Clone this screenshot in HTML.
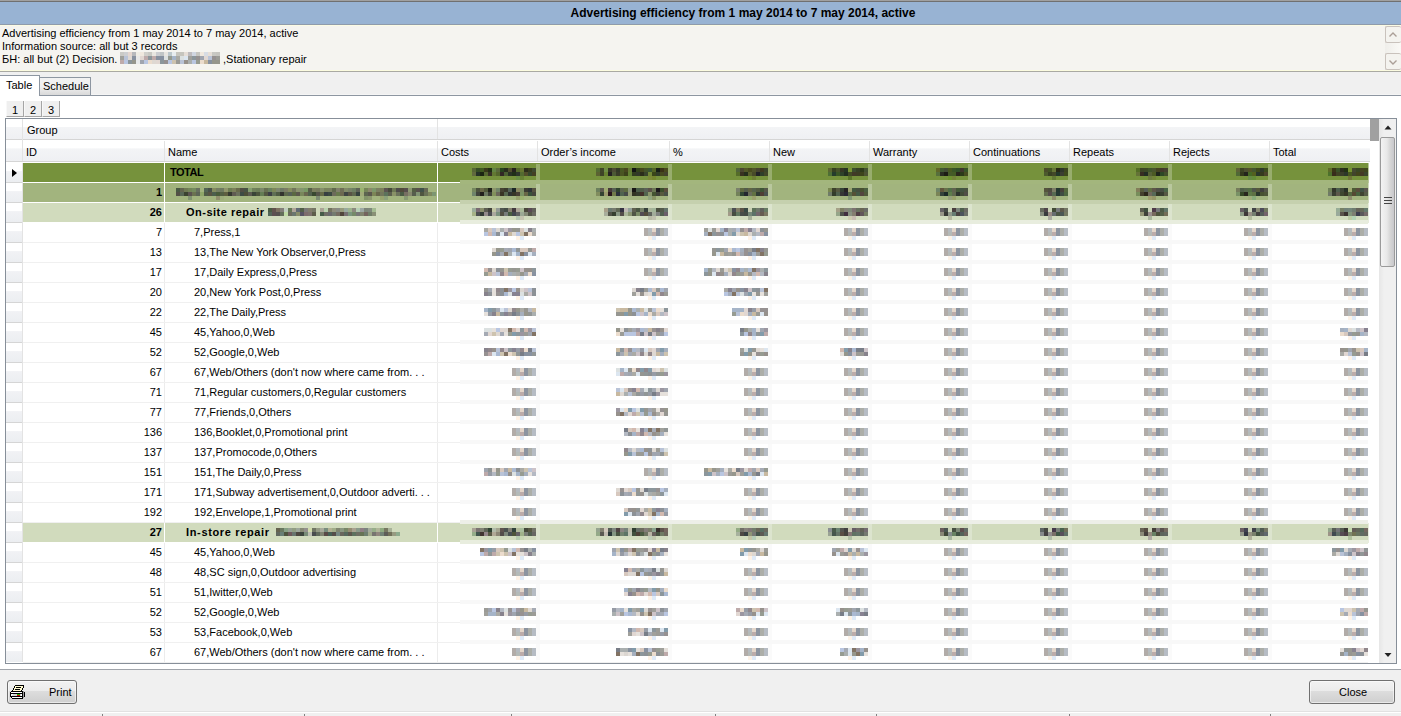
<!DOCTYPE html><html><head><meta charset="utf-8"><style>
*{margin:0;padding:0;box-sizing:border-box}
html,body{width:1401px;height:716px;overflow:hidden;background:#f0f0f0;font-family:"Liberation Sans", sans-serif;font-size:11px;color:#000}
.ab{position:absolute}
.t{position:absolute;white-space:nowrap;line-height:13px}
.b{font-weight:bold}
</style></head><body>
<div class="ab" style="left:0px;top:0px;width:1401px;height:1px;background:#a0a0a0"></div>
<div class="ab" style="left:0px;top:1px;width:1401px;height:1px;background:#707070"></div>
<div class="ab" style="left:0px;top:2px;width:1401px;height:22px;background:#98b3d3"></div>
<div class="ab" style="left:0px;top:24px;width:1401px;height:1px;background:#8f9bab"></div>
<div class="t b" style="left:0;top:6px;width:1401px;text-align:center;font-size:12px;line-height:15px;padding-left:85px">Advertising efficiency from 1 may 2014 to 7 may 2014, active</div>
<div class="ab" style="left:0px;top:25px;width:1401px;height:1px;background:#fbfbe4"></div>
<div class="ab" style="left:0px;top:26px;width:1401px;height:44px;background:#f5f4f0"></div>
<div class="ab" style="left:0px;top:70px;width:1401px;height:1px;background:#fbfbe0"></div>
<div class="ab" style="left:0px;top:71px;width:1401px;height:1px;background:#a9a9a2"></div>
<div class="t" style="left:2px;top:27px;">Advertising efficiency from 1 may 2014 to 7 may 2014, active</div>
<div class="t" style="left:2px;top:40px;">Information source: all but 3 records</div>
<div class="t" style="left:2px;top:53px;">БН: all but (2) Decision. </div>
<div class="t" style="left:223px;top:53px;">,Stationary repair</div>
<div class="ab" style="left:1385px;top:26px;width:16px;height:17px;background:#f4f3ef;border:1px solid #c9c2bc;border-radius:2px;border-right:none"></div>
<div class="ab" style="left:1385px;top:53px;width:16px;height:17px;background:#f4f3ef;border:1px solid #c9c2bc;border-radius:2px;border-right:none"></div>
<div class="ab" style="left:1385px;top:43px;width:16px;height:10px;background:linear-gradient(90deg,#efeeea,#faf9f6)"></div>
<svg class="ab" style="left:1385px;top:26px" width="16" height="44"><path d="M4.5 10.5 L8 7 L11.5 10.5" stroke="#ab9f97" stroke-width="1.4" fill="none"/><path d="M4.5 34.5 L8 38 L11.5 34.5" stroke="#ab9f97" stroke-width="1.4" fill="none"/></svg>
<div class="ab" style="left:0px;top:94px;width:1401px;height:1px;background:#f5f5f5"></div>
<div class="ab" style="left:0px;top:95px;width:1401px;height:1px;background:#8d96a1"></div>
<div class="ab" style="left:39px;top:77px;width:52px;height:18px;background:linear-gradient(#f2f2f2,#f0f0f0 50%,#d9d9d9);border:1px solid #8d96a1;border-bottom:none"></div>
<div class="t" style="left:43px;top:80px;">Schedule</div>
<div class="ab" style="left:0px;top:75px;width:40px;height:21px;background:#fff;border:1px solid #8d96a1;border-left:none;border-bottom:none"></div>
<div class="t" style="left:6px;top:79px;">Table</div>
<div class="ab" style="left:0px;top:96px;width:1401px;height:573px;background:#fff"></div>
<div class="ab" style="left:0px;top:669px;width:1401px;height:1px;background:#a0a4aa"></div>
<div class="ab" style="left:6px;top:101px;width:18px;height:16px;background:#efefef;border-right:1px solid #a5a5a5;border-bottom:1px solid #a5a5a5;border-left:1px solid #f8f8f8"></div>
<div class="t" style="left:12px;top:104px;">1</div>
<div class="ab" style="left:24px;top:101px;width:18px;height:16px;background:#efefef;border-right:1px solid #a5a5a5;border-bottom:1px solid #a5a5a5;border-left:1px solid #f8f8f8"></div>
<div class="t" style="left:30px;top:104px;">2</div>
<div class="ab" style="left:42px;top:101px;width:18px;height:16px;background:#efefef;border-right:1px solid #a5a5a5;border-bottom:1px solid #a5a5a5;border-left:1px solid #f8f8f8"></div>
<div class="t" style="left:48px;top:104px;">3</div>
<div class="ab" style="left:5px;top:118px;width:1392px;height:546px;border:1px solid #878f99;background:#fff"></div>
<div class="ab" style="left:6px;top:119px;width:1364px;height:20px;background:linear-gradient(#ffffff 0,#ffffff 38%,#f3f4f6 42%,#eff0f3 100%)"></div>
<div class="ab" style="left:6px;top:139px;width:1364px;height:1px;background:#d5d5d5"></div>
<div class="ab" style="left:6px;top:140px;width:1364px;height:21px;background:linear-gradient(#ffffff 0,#ffffff 38%,#f3f4f6 42%,#eff0f3 100%)"></div>
<div class="ab" style="left:6px;top:161px;width:1364px;height:1px;background:#d5d5d5"></div>
<div class="ab" style="left:22px;top:119px;width:1px;height:42px;background:#e3e3e3"></div>
<div class="ab" style="left:437px;top:119px;width:1px;height:20px;background:#e3e3e3"></div>
<div class="ab" style="left:164px;top:141px;width:1px;height:20px;background:#e3e3e3"></div>
<div class="ab" style="left:437px;top:141px;width:1px;height:20px;background:#e3e3e3"></div>
<div class="ab" style="left:537px;top:141px;width:1px;height:20px;background:#e3e3e3"></div>
<div class="ab" style="left:669px;top:141px;width:1px;height:20px;background:#e3e3e3"></div>
<div class="ab" style="left:769px;top:141px;width:1px;height:20px;background:#e3e3e3"></div>
<div class="ab" style="left:869px;top:141px;width:1px;height:20px;background:#e3e3e3"></div>
<div class="ab" style="left:969px;top:141px;width:1px;height:20px;background:#e3e3e3"></div>
<div class="ab" style="left:1069px;top:141px;width:1px;height:20px;background:#e3e3e3"></div>
<div class="ab" style="left:1169px;top:141px;width:1px;height:20px;background:#e3e3e3"></div>
<div class="ab" style="left:1269px;top:141px;width:1px;height:20px;background:#e3e3e3"></div>
<div class="t" style="left:27px;top:124px;">Group</div>
<div class="t" style="left:26px;top:146px;">ID</div>
<div class="t" style="left:168px;top:146px;">Name</div>
<div class="t" style="left:441px;top:146px;">Costs</div>
<div class="t" style="left:541px;top:146px;">Order’s income</div>
<div class="t" style="left:673px;top:146px;">%</div>
<div class="t" style="left:773px;top:146px;">New</div>
<div class="t" style="left:873px;top:146px;">Warranty</div>
<div class="t" style="left:973px;top:146px;">Continuations</div>
<div class="t" style="left:1073px;top:146px;">Repeats</div>
<div class="t" style="left:1173px;top:146px;">Rejects</div>
<div class="t" style="left:1273px;top:146px;">Total</div>
<div class="ab" style="left:1370px;top:119px;width:9px;height:22px;background:#a0a0a0"></div>
<div class="ab" style="left:6px;top:163px;width:16px;height:19px;background:linear-gradient(#ffffff 0,#ffffff 40%,#f1f2f5 45%,#eceef1 100%)"></div>
<div class="ab" style="left:23px;top:163px;width:1346px;height:19px;background:#76923c"></div>
<div class="ab" style="left:1368px;top:163px;width:1px;height:20px;background:#bac89e"></div>
<div class="ab" style="left:23px;top:182px;width:437px;height:1px;background:#ffffff"></div>
<div class="ab" style="left:164px;top:163px;width:1px;height:19px;background:#ffffff"></div>
<div class="ab" style="left:437px;top:163px;width:1px;height:19px;background:#ffffff"></div>
<div class="t" style="left:170px;top:166px;font-weight:bold;letter-spacing:-0.5px;">TOTAL</div>
<div class="ab" style="left:6px;top:182px;width:16px;height:1px;background:#d5d5d5"></div>
<div class="ab" style="left:6px;top:183px;width:16px;height:19px;background:linear-gradient(#ffffff 0,#ffffff 40%,#f1f2f5 45%,#eceef1 100%)"></div>
<div class="ab" style="left:23px;top:183px;width:1346px;height:19px;background:#a2b47e"></div>
<div class="ab" style="left:1368px;top:183px;width:1px;height:20px;background:#d0dabe"></div>
<div class="ab" style="left:23px;top:202px;width:437px;height:1px;background:#ffffff"></div>
<div class="ab" style="left:164px;top:183px;width:1px;height:19px;background:#ffffff"></div>
<div class="ab" style="left:437px;top:183px;width:1px;height:19px;background:#ffffff"></div>
<div class="t" style="right:1239px;top:186px;text-align:right;font-weight:bold;">1</div>
<div class="ab" style="left:6px;top:202px;width:16px;height:1px;background:#d5d5d5"></div>
<div class="ab" style="left:6px;top:203px;width:16px;height:19px;background:linear-gradient(#ffffff 0,#ffffff 40%,#f1f2f5 45%,#eceef1 100%)"></div>
<div class="ab" style="left:23px;top:203px;width:1346px;height:19px;background:#d1dbbd"></div>
<div class="ab" style="left:1368px;top:203px;width:1px;height:20px;background:#e8edde"></div>
<div class="ab" style="left:23px;top:222px;width:437px;height:1px;background:#ffffff"></div>
<div class="ab" style="left:164px;top:203px;width:1px;height:19px;background:#ffffff"></div>
<div class="ab" style="left:437px;top:203px;width:1px;height:19px;background:#ffffff"></div>
<div class="t" style="right:1239px;top:206px;text-align:right;font-weight:bold;">26</div>
<div class="t" style="left:186px;top:206px;font-weight:bold;letter-spacing:0.5px;">On-site repair</div>
<div class="ab" style="left:6px;top:222px;width:16px;height:1px;background:#d5d5d5"></div>
<div class="ab" style="left:6px;top:223px;width:16px;height:19px;background:linear-gradient(#ffffff 0,#ffffff 40%,#f1f2f5 45%,#eceef1 100%)"></div>
<div class="ab" style="left:23px;top:223px;width:1346px;height:19px;background:#ffffff"></div>
<div class="ab" style="left:1368px;top:223px;width:1px;height:20px;background:#ffffff"></div>
<div class="ab" style="left:23px;top:242px;width:437px;height:1px;background:#f0f0f0"></div>
<div class="ab" style="left:164px;top:223px;width:1px;height:19px;background:#ececec"></div>
<div class="ab" style="left:437px;top:223px;width:1px;height:19px;background:#ececec"></div>
<div class="t" style="right:1239px;top:226px;text-align:right;">7</div>
<div class="t" style="left:194px;top:226px;">7,Press,1</div>
<div class="ab" style="left:6px;top:242px;width:16px;height:1px;background:#d5d5d5"></div>
<div class="ab" style="left:6px;top:243px;width:16px;height:19px;background:linear-gradient(#ffffff 0,#ffffff 40%,#f1f2f5 45%,#eceef1 100%)"></div>
<div class="ab" style="left:23px;top:243px;width:1346px;height:19px;background:#ffffff"></div>
<div class="ab" style="left:1368px;top:243px;width:1px;height:20px;background:#ffffff"></div>
<div class="ab" style="left:23px;top:262px;width:437px;height:1px;background:#f0f0f0"></div>
<div class="ab" style="left:164px;top:243px;width:1px;height:19px;background:#ececec"></div>
<div class="ab" style="left:437px;top:243px;width:1px;height:19px;background:#ececec"></div>
<div class="t" style="right:1239px;top:246px;text-align:right;">13</div>
<div class="t" style="left:194px;top:246px;">13,The New York Observer,0,Press</div>
<div class="ab" style="left:6px;top:262px;width:16px;height:1px;background:#d5d5d5"></div>
<div class="ab" style="left:6px;top:263px;width:16px;height:19px;background:linear-gradient(#ffffff 0,#ffffff 40%,#f1f2f5 45%,#eceef1 100%)"></div>
<div class="ab" style="left:23px;top:263px;width:1346px;height:19px;background:#ffffff"></div>
<div class="ab" style="left:1368px;top:263px;width:1px;height:20px;background:#ffffff"></div>
<div class="ab" style="left:23px;top:282px;width:437px;height:1px;background:#f0f0f0"></div>
<div class="ab" style="left:164px;top:263px;width:1px;height:19px;background:#ececec"></div>
<div class="ab" style="left:437px;top:263px;width:1px;height:19px;background:#ececec"></div>
<div class="t" style="right:1239px;top:266px;text-align:right;">17</div>
<div class="t" style="left:194px;top:266px;">17,Daily Express,0,Press</div>
<div class="ab" style="left:6px;top:282px;width:16px;height:1px;background:#d5d5d5"></div>
<div class="ab" style="left:6px;top:283px;width:16px;height:19px;background:linear-gradient(#ffffff 0,#ffffff 40%,#f1f2f5 45%,#eceef1 100%)"></div>
<div class="ab" style="left:23px;top:283px;width:1346px;height:19px;background:#ffffff"></div>
<div class="ab" style="left:1368px;top:283px;width:1px;height:20px;background:#ffffff"></div>
<div class="ab" style="left:23px;top:302px;width:437px;height:1px;background:#f0f0f0"></div>
<div class="ab" style="left:164px;top:283px;width:1px;height:19px;background:#ececec"></div>
<div class="ab" style="left:437px;top:283px;width:1px;height:19px;background:#ececec"></div>
<div class="t" style="right:1239px;top:286px;text-align:right;">20</div>
<div class="t" style="left:194px;top:286px;">20,New York Post,0,Press</div>
<div class="ab" style="left:6px;top:302px;width:16px;height:1px;background:#d5d5d5"></div>
<div class="ab" style="left:6px;top:303px;width:16px;height:19px;background:linear-gradient(#ffffff 0,#ffffff 40%,#f1f2f5 45%,#eceef1 100%)"></div>
<div class="ab" style="left:23px;top:303px;width:1346px;height:19px;background:#ffffff"></div>
<div class="ab" style="left:1368px;top:303px;width:1px;height:20px;background:#ffffff"></div>
<div class="ab" style="left:23px;top:322px;width:437px;height:1px;background:#f0f0f0"></div>
<div class="ab" style="left:164px;top:303px;width:1px;height:19px;background:#ececec"></div>
<div class="ab" style="left:437px;top:303px;width:1px;height:19px;background:#ececec"></div>
<div class="t" style="right:1239px;top:306px;text-align:right;">22</div>
<div class="t" style="left:194px;top:306px;">22,The Daily,Press</div>
<div class="ab" style="left:6px;top:322px;width:16px;height:1px;background:#d5d5d5"></div>
<div class="ab" style="left:6px;top:323px;width:16px;height:19px;background:linear-gradient(#ffffff 0,#ffffff 40%,#f1f2f5 45%,#eceef1 100%)"></div>
<div class="ab" style="left:23px;top:323px;width:1346px;height:19px;background:#ffffff"></div>
<div class="ab" style="left:1368px;top:323px;width:1px;height:20px;background:#ffffff"></div>
<div class="ab" style="left:23px;top:342px;width:437px;height:1px;background:#f0f0f0"></div>
<div class="ab" style="left:164px;top:323px;width:1px;height:19px;background:#ececec"></div>
<div class="ab" style="left:437px;top:323px;width:1px;height:19px;background:#ececec"></div>
<div class="t" style="right:1239px;top:326px;text-align:right;">45</div>
<div class="t" style="left:194px;top:326px;">45,Yahoo,0,Web</div>
<div class="ab" style="left:6px;top:342px;width:16px;height:1px;background:#d5d5d5"></div>
<div class="ab" style="left:6px;top:343px;width:16px;height:19px;background:linear-gradient(#ffffff 0,#ffffff 40%,#f1f2f5 45%,#eceef1 100%)"></div>
<div class="ab" style="left:23px;top:343px;width:1346px;height:19px;background:#ffffff"></div>
<div class="ab" style="left:1368px;top:343px;width:1px;height:20px;background:#ffffff"></div>
<div class="ab" style="left:23px;top:362px;width:437px;height:1px;background:#f0f0f0"></div>
<div class="ab" style="left:164px;top:343px;width:1px;height:19px;background:#ececec"></div>
<div class="ab" style="left:437px;top:343px;width:1px;height:19px;background:#ececec"></div>
<div class="t" style="right:1239px;top:346px;text-align:right;">52</div>
<div class="t" style="left:194px;top:346px;">52,Google,0,Web</div>
<div class="ab" style="left:6px;top:362px;width:16px;height:1px;background:#d5d5d5"></div>
<div class="ab" style="left:6px;top:363px;width:16px;height:19px;background:linear-gradient(#ffffff 0,#ffffff 40%,#f1f2f5 45%,#eceef1 100%)"></div>
<div class="ab" style="left:23px;top:363px;width:1346px;height:19px;background:#ffffff"></div>
<div class="ab" style="left:1368px;top:363px;width:1px;height:20px;background:#ffffff"></div>
<div class="ab" style="left:23px;top:382px;width:437px;height:1px;background:#f0f0f0"></div>
<div class="ab" style="left:164px;top:363px;width:1px;height:19px;background:#ececec"></div>
<div class="ab" style="left:437px;top:363px;width:1px;height:19px;background:#ececec"></div>
<div class="t" style="right:1239px;top:366px;text-align:right;">67</div>
<div class="t" style="left:194px;top:366px;">67,Web/Others (don't now where came from<span style="letter-spacing:3px">...</span></div>
<div class="ab" style="left:6px;top:382px;width:16px;height:1px;background:#d5d5d5"></div>
<div class="ab" style="left:6px;top:383px;width:16px;height:19px;background:linear-gradient(#ffffff 0,#ffffff 40%,#f1f2f5 45%,#eceef1 100%)"></div>
<div class="ab" style="left:23px;top:383px;width:1346px;height:19px;background:#ffffff"></div>
<div class="ab" style="left:1368px;top:383px;width:1px;height:20px;background:#ffffff"></div>
<div class="ab" style="left:23px;top:402px;width:437px;height:1px;background:#f0f0f0"></div>
<div class="ab" style="left:164px;top:383px;width:1px;height:19px;background:#ececec"></div>
<div class="ab" style="left:437px;top:383px;width:1px;height:19px;background:#ececec"></div>
<div class="t" style="right:1239px;top:386px;text-align:right;">71</div>
<div class="t" style="left:194px;top:386px;">71,Regular customers,0,Regular customers</div>
<div class="ab" style="left:6px;top:402px;width:16px;height:1px;background:#d5d5d5"></div>
<div class="ab" style="left:6px;top:403px;width:16px;height:19px;background:linear-gradient(#ffffff 0,#ffffff 40%,#f1f2f5 45%,#eceef1 100%)"></div>
<div class="ab" style="left:23px;top:403px;width:1346px;height:19px;background:#ffffff"></div>
<div class="ab" style="left:1368px;top:403px;width:1px;height:20px;background:#ffffff"></div>
<div class="ab" style="left:23px;top:422px;width:437px;height:1px;background:#f0f0f0"></div>
<div class="ab" style="left:164px;top:403px;width:1px;height:19px;background:#ececec"></div>
<div class="ab" style="left:437px;top:403px;width:1px;height:19px;background:#ececec"></div>
<div class="t" style="right:1239px;top:406px;text-align:right;">77</div>
<div class="t" style="left:194px;top:406px;">77,Friends,0,Others</div>
<div class="ab" style="left:6px;top:422px;width:16px;height:1px;background:#d5d5d5"></div>
<div class="ab" style="left:6px;top:423px;width:16px;height:19px;background:linear-gradient(#ffffff 0,#ffffff 40%,#f1f2f5 45%,#eceef1 100%)"></div>
<div class="ab" style="left:23px;top:423px;width:1346px;height:19px;background:#ffffff"></div>
<div class="ab" style="left:1368px;top:423px;width:1px;height:20px;background:#ffffff"></div>
<div class="ab" style="left:23px;top:442px;width:437px;height:1px;background:#f0f0f0"></div>
<div class="ab" style="left:164px;top:423px;width:1px;height:19px;background:#ececec"></div>
<div class="ab" style="left:437px;top:423px;width:1px;height:19px;background:#ececec"></div>
<div class="t" style="right:1239px;top:426px;text-align:right;">136</div>
<div class="t" style="left:194px;top:426px;">136,Booklet,0,Promotional print</div>
<div class="ab" style="left:6px;top:442px;width:16px;height:1px;background:#d5d5d5"></div>
<div class="ab" style="left:6px;top:443px;width:16px;height:19px;background:linear-gradient(#ffffff 0,#ffffff 40%,#f1f2f5 45%,#eceef1 100%)"></div>
<div class="ab" style="left:23px;top:443px;width:1346px;height:19px;background:#ffffff"></div>
<div class="ab" style="left:1368px;top:443px;width:1px;height:20px;background:#ffffff"></div>
<div class="ab" style="left:23px;top:462px;width:437px;height:1px;background:#f0f0f0"></div>
<div class="ab" style="left:164px;top:443px;width:1px;height:19px;background:#ececec"></div>
<div class="ab" style="left:437px;top:443px;width:1px;height:19px;background:#ececec"></div>
<div class="t" style="right:1239px;top:446px;text-align:right;">137</div>
<div class="t" style="left:194px;top:446px;">137,Promocode,0,Others</div>
<div class="ab" style="left:6px;top:462px;width:16px;height:1px;background:#d5d5d5"></div>
<div class="ab" style="left:6px;top:463px;width:16px;height:19px;background:linear-gradient(#ffffff 0,#ffffff 40%,#f1f2f5 45%,#eceef1 100%)"></div>
<div class="ab" style="left:23px;top:463px;width:1346px;height:19px;background:#ffffff"></div>
<div class="ab" style="left:1368px;top:463px;width:1px;height:20px;background:#ffffff"></div>
<div class="ab" style="left:23px;top:482px;width:437px;height:1px;background:#f0f0f0"></div>
<div class="ab" style="left:164px;top:463px;width:1px;height:19px;background:#ececec"></div>
<div class="ab" style="left:437px;top:463px;width:1px;height:19px;background:#ececec"></div>
<div class="t" style="right:1239px;top:466px;text-align:right;">151</div>
<div class="t" style="left:194px;top:466px;">151,The Daily,0,Press</div>
<div class="ab" style="left:6px;top:482px;width:16px;height:1px;background:#d5d5d5"></div>
<div class="ab" style="left:6px;top:483px;width:16px;height:19px;background:linear-gradient(#ffffff 0,#ffffff 40%,#f1f2f5 45%,#eceef1 100%)"></div>
<div class="ab" style="left:23px;top:483px;width:1346px;height:19px;background:#ffffff"></div>
<div class="ab" style="left:1368px;top:483px;width:1px;height:20px;background:#ffffff"></div>
<div class="ab" style="left:23px;top:502px;width:437px;height:1px;background:#f0f0f0"></div>
<div class="ab" style="left:164px;top:483px;width:1px;height:19px;background:#ececec"></div>
<div class="ab" style="left:437px;top:483px;width:1px;height:19px;background:#ececec"></div>
<div class="t" style="right:1239px;top:486px;text-align:right;">171</div>
<div class="t" style="left:194px;top:486px;">171,Subway advertisement,0,Outdoor adverti<span style="letter-spacing:3px">...</span></div>
<div class="ab" style="left:6px;top:502px;width:16px;height:1px;background:#d5d5d5"></div>
<div class="ab" style="left:6px;top:503px;width:16px;height:19px;background:linear-gradient(#ffffff 0,#ffffff 40%,#f1f2f5 45%,#eceef1 100%)"></div>
<div class="ab" style="left:23px;top:503px;width:1346px;height:19px;background:#ffffff"></div>
<div class="ab" style="left:1368px;top:503px;width:1px;height:20px;background:#ffffff"></div>
<div class="ab" style="left:23px;top:522px;width:437px;height:1px;background:#f0f0f0"></div>
<div class="ab" style="left:164px;top:503px;width:1px;height:19px;background:#ececec"></div>
<div class="ab" style="left:437px;top:503px;width:1px;height:19px;background:#ececec"></div>
<div class="t" style="right:1239px;top:506px;text-align:right;">192</div>
<div class="t" style="left:194px;top:506px;">192,Envelope,1,Promotional print</div>
<div class="ab" style="left:6px;top:522px;width:16px;height:1px;background:#d5d5d5"></div>
<div class="ab" style="left:6px;top:523px;width:16px;height:19px;background:linear-gradient(#ffffff 0,#ffffff 40%,#f1f2f5 45%,#eceef1 100%)"></div>
<div class="ab" style="left:23px;top:523px;width:1346px;height:19px;background:#d1dbbd"></div>
<div class="ab" style="left:1368px;top:523px;width:1px;height:20px;background:#e8edde"></div>
<div class="ab" style="left:23px;top:542px;width:437px;height:1px;background:#ffffff"></div>
<div class="ab" style="left:164px;top:523px;width:1px;height:19px;background:#ffffff"></div>
<div class="ab" style="left:437px;top:523px;width:1px;height:19px;background:#ffffff"></div>
<div class="t" style="right:1239px;top:526px;text-align:right;font-weight:bold;">27</div>
<div class="t" style="left:186px;top:526px;font-weight:bold;letter-spacing:0.65px;">In-store repair</div>
<div class="ab" style="left:6px;top:542px;width:16px;height:1px;background:#d5d5d5"></div>
<div class="ab" style="left:6px;top:543px;width:16px;height:19px;background:linear-gradient(#ffffff 0,#ffffff 40%,#f1f2f5 45%,#eceef1 100%)"></div>
<div class="ab" style="left:23px;top:543px;width:1346px;height:19px;background:#ffffff"></div>
<div class="ab" style="left:1368px;top:543px;width:1px;height:20px;background:#ffffff"></div>
<div class="ab" style="left:23px;top:562px;width:437px;height:1px;background:#f0f0f0"></div>
<div class="ab" style="left:164px;top:543px;width:1px;height:19px;background:#ececec"></div>
<div class="ab" style="left:437px;top:543px;width:1px;height:19px;background:#ececec"></div>
<div class="t" style="right:1239px;top:546px;text-align:right;">45</div>
<div class="t" style="left:194px;top:546px;">45,Yahoo,0,Web</div>
<div class="ab" style="left:6px;top:562px;width:16px;height:1px;background:#d5d5d5"></div>
<div class="ab" style="left:6px;top:563px;width:16px;height:19px;background:linear-gradient(#ffffff 0,#ffffff 40%,#f1f2f5 45%,#eceef1 100%)"></div>
<div class="ab" style="left:23px;top:563px;width:1346px;height:19px;background:#ffffff"></div>
<div class="ab" style="left:1368px;top:563px;width:1px;height:20px;background:#ffffff"></div>
<div class="ab" style="left:23px;top:582px;width:437px;height:1px;background:#f0f0f0"></div>
<div class="ab" style="left:164px;top:563px;width:1px;height:19px;background:#ececec"></div>
<div class="ab" style="left:437px;top:563px;width:1px;height:19px;background:#ececec"></div>
<div class="t" style="right:1239px;top:566px;text-align:right;">48</div>
<div class="t" style="left:194px;top:566px;">48,SC sign,0,Outdoor advertising</div>
<div class="ab" style="left:6px;top:582px;width:16px;height:1px;background:#d5d5d5"></div>
<div class="ab" style="left:6px;top:583px;width:16px;height:19px;background:linear-gradient(#ffffff 0,#ffffff 40%,#f1f2f5 45%,#eceef1 100%)"></div>
<div class="ab" style="left:23px;top:583px;width:1346px;height:19px;background:#ffffff"></div>
<div class="ab" style="left:1368px;top:583px;width:1px;height:20px;background:#ffffff"></div>
<div class="ab" style="left:23px;top:602px;width:437px;height:1px;background:#f0f0f0"></div>
<div class="ab" style="left:164px;top:583px;width:1px;height:19px;background:#ececec"></div>
<div class="ab" style="left:437px;top:583px;width:1px;height:19px;background:#ececec"></div>
<div class="t" style="right:1239px;top:586px;text-align:right;">51</div>
<div class="t" style="left:194px;top:586px;">51,Iwitter,0,Web</div>
<div class="ab" style="left:6px;top:602px;width:16px;height:1px;background:#d5d5d5"></div>
<div class="ab" style="left:6px;top:603px;width:16px;height:19px;background:linear-gradient(#ffffff 0,#ffffff 40%,#f1f2f5 45%,#eceef1 100%)"></div>
<div class="ab" style="left:23px;top:603px;width:1346px;height:19px;background:#ffffff"></div>
<div class="ab" style="left:1368px;top:603px;width:1px;height:20px;background:#ffffff"></div>
<div class="ab" style="left:23px;top:622px;width:437px;height:1px;background:#f0f0f0"></div>
<div class="ab" style="left:164px;top:603px;width:1px;height:19px;background:#ececec"></div>
<div class="ab" style="left:437px;top:603px;width:1px;height:19px;background:#ececec"></div>
<div class="t" style="right:1239px;top:606px;text-align:right;">52</div>
<div class="t" style="left:194px;top:606px;">52,Google,0,Web</div>
<div class="ab" style="left:6px;top:622px;width:16px;height:1px;background:#d5d5d5"></div>
<div class="ab" style="left:6px;top:623px;width:16px;height:19px;background:linear-gradient(#ffffff 0,#ffffff 40%,#f1f2f5 45%,#eceef1 100%)"></div>
<div class="ab" style="left:23px;top:623px;width:1346px;height:19px;background:#ffffff"></div>
<div class="ab" style="left:1368px;top:623px;width:1px;height:20px;background:#ffffff"></div>
<div class="ab" style="left:23px;top:642px;width:437px;height:1px;background:#f0f0f0"></div>
<div class="ab" style="left:164px;top:623px;width:1px;height:19px;background:#ececec"></div>
<div class="ab" style="left:437px;top:623px;width:1px;height:19px;background:#ececec"></div>
<div class="t" style="right:1239px;top:626px;text-align:right;">53</div>
<div class="t" style="left:194px;top:626px;">53,Facebook,0,Web</div>
<div class="ab" style="left:6px;top:642px;width:16px;height:1px;background:#d5d5d5"></div>
<div class="ab" style="left:6px;top:643px;width:16px;height:19px;background:linear-gradient(#ffffff 0,#ffffff 40%,#f1f2f5 45%,#eceef1 100%)"></div>
<div class="ab" style="left:23px;top:643px;width:1346px;height:19px;background:#ffffff"></div>
<div class="ab" style="left:1368px;top:643px;width:1px;height:20px;background:#ffffff"></div>
<div class="ab" style="left:23px;top:662px;width:437px;height:1px;background:#f0f0f0"></div>
<div class="ab" style="left:164px;top:643px;width:1px;height:19px;background:#ececec"></div>
<div class="ab" style="left:437px;top:643px;width:1px;height:19px;background:#ececec"></div>
<div class="t" style="right:1239px;top:646px;text-align:right;">67</div>
<div class="t" style="left:194px;top:646px;">67,Web/Others (don't now where came from<span style="letter-spacing:3px">...</span></div>
<div class="ab" style="left:460px;top:180px;width:908px;height:4px;background:#a3b67d"></div>
<div class="ab" style="left:536px;top:164px;width:4px;height:16px;background:#98ad6d"></div>
<div class="ab" style="left:668px;top:164px;width:4px;height:16px;background:#98ad6d"></div>
<div class="ab" style="left:768px;top:164px;width:4px;height:16px;background:#98ad6d"></div>
<div class="ab" style="left:868px;top:164px;width:4px;height:16px;background:#98ad6d"></div>
<div class="ab" style="left:968px;top:164px;width:4px;height:16px;background:#98ad6d"></div>
<div class="ab" style="left:1068px;top:164px;width:4px;height:16px;background:#98ad6d"></div>
<div class="ab" style="left:1168px;top:164px;width:4px;height:16px;background:#98ad6d"></div>
<div class="ab" style="left:1268px;top:164px;width:4px;height:16px;background:#98ad6d"></div>
<div class="ab" style="left:472px;top:168px;width:64px;height:4px;background:linear-gradient(90deg,#566635 0px 4px,#364e25 4px 8px,#3f5820 8px 12px,#38391b 12px 16px,#212e14 16px 20px,#628442 20px 24px,#5b6a3d 24px 28px,#28441e 28px 32px,#272d1d 32px 36px,#504f2d 36px 40px,#25221e 40px 44px,#556a2c 44px 48px,#657530 48px 52px,#2b2d1a 52px 56px,#373c1c 56px 60px,#3e482f 60px 64px)"></div>
<div class="ab" style="left:472px;top:172px;width:64px;height:4px;background:linear-gradient(90deg,#616a3e 0px 4px,#253227 4px 8px,#1b2612 8px 12px,#53662f 12px 16px,#383226 16px 20px,#637933 20px 24px,#54662c 24px 28px,#312825 28px 32px,#4a6032 32px 36px,#2a3325 36px 40px,#203018 40px 44px,#2e362b 44px 48px,#536a30 48px 52px,#514d2a 52px 56px,#35452b 56px 60px,#433f23 60px 64px)"></div>
<div class="ab" style="left:516px;top:176px;width:4px;height:4px;background:#688d43"></div>
<div class="ab" style="left:520px;top:176px;width:4px;height:4px;background:#668133"></div>
<div class="ab" style="left:596px;top:168px;width:72px;height:4px;background:linear-gradient(90deg,#536c33 0px 4px,#3f4628 4px 8px,#6e8d45 8px 12px,#353825 12px 16px,#4c4b34 16px 20px,#323a27 20px 24px,#485722 24px 28px,#48471f 28px 32px,#647b34 32px 36px,#131413 36px 40px,#33441b 40px 44px,#44481d 44px 48px,#435428 48px 52px,#395634 52px 56px,#526425 56px 60px,#161e16 60px 64px,#3a3217 64px 68px,#47481e 68px 72px)"></div>
<div class="ab" style="left:596px;top:172px;width:72px;height:4px;background:linear-gradient(90deg,#5b6232 0px 4px,#3e4327 4px 8px,#668130 8px 12px,#252122 12px 16px,#4c5a35 16px 20px,#393c28 20px 24px,#4a5422 24px 28px,#3b411a 28px 32px,#638233 32px 36px,#323e1f 36px 40px,#323829 40px 44px,#2b2e1a 44px 48px,#39452b 48px 52px,#718736 52px 56px,#3a461a 56px 60px,#313d27 60px 64px,#45491f 64px 68px,#43422d 68px 72px)"></div>
<div class="ab" style="left:648px;top:176px;width:4px;height:4px;background:#7c8938"></div>
<div class="ab" style="left:652px;top:176px;width:4px;height:4px;background:#74862f"></div>
<div class="ab" style="left:736px;top:168px;width:32px;height:4px;background:linear-gradient(90deg,#51653b 0px 4px,#4a4630 4px 8px,#525827 8px 12px,#484b1e 12px 16px,#4f542a 16px 20px,#46442f 20px 24px,#403a1f 24px 28px,#3b462a 28px 32px)"></div>
<div class="ab" style="left:736px;top:172px;width:32px;height:4px;background:linear-gradient(90deg,#556d29 0px 4px,#393220 4px 8px,#242f1b 8px 12px,#59602e 12px 16px,#484a29 16px 20px,#222327 20px 24px,#2f3f2a 24px 28px,#424828 28px 32px)"></div>
<div class="ab" style="left:748px;top:176px;width:4px;height:4px;background:#6f8e2f"></div>
<div class="ab" style="left:752px;top:176px;width:4px;height:4px;background:#6d7e33"></div>
<div class="ab" style="left:828px;top:168px;width:40px;height:4px;background:linear-gradient(90deg,#5b6731 0px 4px,#364120 4px 8px,#47522a 8px 12px,#353623 12px 16px,#263523 16px 20px,#799534 20px 24px,#3b4e2d 24px 28px,#364126 28px 32px,#2e3b1a 32px 36px,#445331 36px 40px)"></div>
<div class="ab" style="left:828px;top:172px;width:40px;height:4px;background:linear-gradient(90deg,#4e6f34 0px 4px,#253c2c 4px 8px,#395625 8px 12px,#2e4129 12px 16px,#212d20 16px 20px,#424c26 20px 24px,#413a27 24px 28px,#3d3e23 28px 32px,#3d441b 32px 36px,#4c5333 36px 40px)"></div>
<div class="ab" style="left:848px;top:176px;width:4px;height:4px;background:#5b752a"></div>
<div class="ab" style="left:936px;top:168px;width:32px;height:4px;background:linear-gradient(90deg,#616829 0px 4px,#405930 4px 8px,#414c34 8px 12px,#485920 12px 16px,#395527 16px 20px,#315029 20px 24px,#3f372d 24px 28px,#365527 28px 32px)"></div>
<div class="ab" style="left:936px;top:172px;width:32px;height:4px;background:linear-gradient(90deg,#57703c 0px 4px,#2a2d22 4px 8px,#1c1c14 8px 12px,#455929 12px 16px,#435b25 16px 20px,#2a271c 20px 24px,#2b3a19 24px 28px,#464d20 28px 32px)"></div>
<div class="ab" style="left:948px;top:176px;width:4px;height:4px;background:#6d912f"></div>
<div class="ab" style="left:952px;top:176px;width:4px;height:4px;background:#738338"></div>
<div class="ab" style="left:1044px;top:168px;width:24px;height:4px;background:linear-gradient(90deg,#4a4c29 0px 4px,#425523 4px 8px,#647535 8px 12px,#262914 12px 16px,#2f372a 16px 20px,#3c461f 20px 24px)"></div>
<div class="ab" style="left:1044px;top:172px;width:24px;height:4px;background:linear-gradient(90deg,#4c5a2d 0px 4px,#384122 4px 8px,#424828 8px 12px,#22382a 12px 16px,#3b3e31 16px 20px,#3d4b1c 20px 24px)"></div>
<div class="ab" style="left:1052px;top:176px;width:4px;height:4px;background:#627b35"></div>
<div class="ab" style="left:1136px;top:168px;width:32px;height:4px;background:linear-gradient(90deg,#536e26 0px 4px,#3d4526 4px 8px,#3c4926 8px 12px,#40562b 12px 16px,#49542e 16px 20px,#454322 20px 24px,#44392a 24px 28px,#444130 28px 32px)"></div>
<div class="ab" style="left:1136px;top:172px;width:32px;height:4px;background:linear-gradient(90deg,#647237 0px 4px,#372d22 4px 8px,#222d24 8px 12px,#576237 12px 16px,#4c5a24 16px 20px,#1f261c 20px 24px,#2d4826 24px 28px,#434f2c 28px 32px)"></div>
<div class="ab" style="left:1148px;top:176px;width:4px;height:4px;background:#6d7b40"></div>
<div class="ab" style="left:1152px;top:176px;width:4px;height:4px;background:#728439"></div>
<div class="ab" style="left:1236px;top:168px;width:32px;height:4px;background:linear-gradient(90deg,#5e6337 0px 4px,#3c4423 4px 8px,#4c4e30 8px 12px,#525427 12px 16px,#43552f 16px 20px,#3e491c 20px 24px,#303b2a 24px 28px,#3c4e1c 28px 32px)"></div>
<div class="ab" style="left:1236px;top:172px;width:32px;height:4px;background:linear-gradient(90deg,#506936 0px 4px,#343a1c 4px 8px,#23241c 8px 12px,#466926 12px 16px,#53601f 16px 20px,#29372b 20px 24px,#353a1d 24px 28px,#4b452a 28px 32px)"></div>
<div class="ab" style="left:1248px;top:176px;width:4px;height:4px;background:#658744"></div>
<div class="ab" style="left:1252px;top:176px;width:4px;height:4px;background:#638c38"></div>
<div class="ab" style="left:1328px;top:168px;width:40px;height:4px;background:linear-gradient(90deg,#5e6c29 0px 4px,#393716 4px 8px,#395228 8px 12px,#2c2f1e 12px 16px,#223312 16px 20px,#769331 20px 24px,#44492f 24px 28px,#394725 28px 32px,#444421 32px 36px,#3e471d 36px 40px)"></div>
<div class="ab" style="left:1328px;top:172px;width:40px;height:4px;background:linear-gradient(90deg,#4d712b 0px 4px,#382d1b 4px 8px,#3f4324 8px 12px,#3a3e29 12px 16px,#2d382a 16px 20px,#47591f 20px 24px,#41442c 24px 28px,#42441c 28px 32px,#443a25 32px 36px,#3c472d 36px 40px)"></div>
<div class="ab" style="left:1348px;top:176px;width:4px;height:4px;background:#707539"></div>
<div class="ab" style="left:460px;top:200px;width:908px;height:4px;background:#c5d0ae"></div>
<div class="ab" style="left:536px;top:184px;width:4px;height:16px;background:#b9c79e"></div>
<div class="ab" style="left:668px;top:184px;width:4px;height:16px;background:#b9c79e"></div>
<div class="ab" style="left:768px;top:184px;width:4px;height:16px;background:#b9c79e"></div>
<div class="ab" style="left:868px;top:184px;width:4px;height:16px;background:#b9c79e"></div>
<div class="ab" style="left:968px;top:184px;width:4px;height:16px;background:#b9c79e"></div>
<div class="ab" style="left:1068px;top:184px;width:4px;height:16px;background:#b9c79e"></div>
<div class="ab" style="left:1168px;top:184px;width:4px;height:16px;background:#b9c79e"></div>
<div class="ab" style="left:1268px;top:184px;width:4px;height:16px;background:#b9c79e"></div>
<div class="ab" style="left:472px;top:188px;width:64px;height:4px;background:linear-gradient(90deg,#75885e 0px 4px,#4c533d 4px 8px,#6a6947 8px 12px,#525b3b 12px 16px,#1f221a 16px 20px,#8b956a 20px 24px,#728668 24px 28px,#464333 28px 32px,#3a3b2d 32px 36px,#556358 36px 40px,#1d2826 40px 44px,#898860 44px 48px,#7d8e66 48px 52px,#3b3c33 52px 56px,#2f3437 56px 60px,#575341 60px 64px)"></div>
<div class="ab" style="left:472px;top:192px;width:64px;height:4px;background:linear-gradient(90deg,#6f856b 0px 4px,#40443b 4px 8px,#22211c 8px 12px,#6a785f 12px 16px,#3f4238 16px 20px,#82925c 20px 24px,#6b675a 24px 28px,#393525 28px 32px,#56684f 32px 36px,#303432 36px 40px,#363526 40px 44px,#483f35 44px 48px,#7b9365 48px 52px,#686746 52px 56px,#3a503b 56px 60px,#45453d 60px 64px)"></div>
<div class="ab" style="left:516px;top:196px;width:4px;height:4px;background:#96a06c"></div>
<div class="ab" style="left:520px;top:196px;width:4px;height:4px;background:#9bb26f"></div>
<div class="ab" style="left:596px;top:188px;width:72px;height:4px;background:linear-gradient(90deg,#6c805d 0px 4px,#5e5b50 4px 8px,#a1ac72 8px 12px,#473b3a 12px 16px,#576052 16px 20px,#30432d 20px 24px,#5b654d 24px 28px,#5d6c40 28px 32px,#8f9b7d 32px 36px,#181714 36px 40px,#4b5e49 40px 44px,#505d48 44px 48px,#5b6157 48px 52px,#5b5249 52px 56px,#6b7654 56px 60px,#1b181b 60px 64px,#3b4e2c 64px 68px,#594d3c 68px 72px)"></div>
<div class="ab" style="left:596px;top:192px;width:72px;height:4px;background:linear-gradient(90deg,#818d5e 0px 4px,#344332 4px 8px,#9c9b6f 8px 12px,#2b171d 12px 16px,#727c4a 16px 20px,#2c313a 20px 24px,#4f634f 24px 28px,#464b48 28px 32px,#99a17a 32px 36px,#323523 36px 40px,#353c2c 40px 44px,#43312a 44px 48px,#52654e 48px 52px,#8a966c 52px 56px,#445431 56px 60px,#3e4036 60px 64px,#575a3e 64px 68px,#485046 68px 72px)"></div>
<div class="ab" style="left:648px;top:196px;width:4px;height:4px;background:#90a47e"></div>
<div class="ab" style="left:652px;top:196px;width:4px;height:4px;background:#899465"></div>
<div class="ab" style="left:736px;top:188px;width:32px;height:4px;background:linear-gradient(90deg,#7a816b 0px 4px,#5f6940 4px 8px,#535c4b 8px 12px,#616444 12px 16px,#55634b 16px 20px,#525b42 20px 24px,#3e5536 24px 28px,#555849 28px 32px)"></div>
<div class="ab" style="left:736px;top:192px;width:32px;height:4px;background:linear-gradient(90deg,#73815a 0px 4px,#314733 4px 8px,#22262f 8px 12px,#696d5b 12px 16px,#617242 16px 20px,#313d34 20px 24px,#4f3f34 24px 28px,#4a534f 28px 32px)"></div>
<div class="ab" style="left:748px;top:196px;width:4px;height:4px;background:#97b071"></div>
<div class="ab" style="left:752px;top:196px;width:4px;height:4px;background:#9ba16d"></div>
<div class="ab" style="left:828px;top:188px;width:40px;height:4px;background:linear-gradient(90deg,#788750 0px 4px,#3d422b 4px 8px,#565941 8px 12px,#364236 12px 16px,#262424 16px 20px,#9ea373 20px 24px,#42573e 24px 28px,#464e3f 28px 32px,#485031 32px 36px,#4b5f41 36px 40px)"></div>
<div class="ab" style="left:828px;top:192px;width:40px;height:4px;background:linear-gradient(90deg,#6f7b67 0px 4px,#323c2b 4px 8px,#4f614e 8px 12px,#363636 12px 16px,#2a2934 16px 20px,#596c48 20px 24px,#555136 24px 28px,#445945 28px 32px,#53453f 32px 36px,#4f5a3b 36px 40px)"></div>
<div class="ab" style="left:848px;top:196px;width:4px;height:4px;background:#829775"></div>
<div class="ab" style="left:936px;top:188px;width:32px;height:4px;background:linear-gradient(90deg,#6f8567 0px 4px,#61563d 4px 8px,#67714a 8px 12px,#516f48 12px 16px,#61634f 16px 20px,#445938 20px 24px,#445543 24px 28px,#4b5441 28px 32px)"></div>
<div class="ab" style="left:936px;top:192px;width:32px;height:4px;background:linear-gradient(90deg,#7a8457 0px 4px,#34433b 4px 8px,#1b2a29 8px 12px,#5e7c4b 12px 16px,#5f674e 16px 20px,#2d332d 20px 24px,#434e38 24px 28px,#514f47 28px 32px)"></div>
<div class="ab" style="left:948px;top:196px;width:4px;height:4px;background:#959f7b"></div>
<div class="ab" style="left:952px;top:196px;width:4px;height:4px;background:#99a26b"></div>
<div class="ab" style="left:1044px;top:188px;width:24px;height:4px;background:linear-gradient(90deg,#55543d 0px 4px,#4e4d40 4px 8px,#7c7d65 8px 12px,#253830 12px 16px,#47423b 16px 20px,#53683d 20px 24px)"></div>
<div class="ab" style="left:1044px;top:192px;width:24px;height:4px;background:linear-gradient(90deg,#616d4d 0px 4px,#554d4b 4px 8px,#576a51 8px 12px,#273934 12px 16px,#3f4d43 16px 20px,#4d6740 20px 24px)"></div>
<div class="ab" style="left:1052px;top:196px;width:4px;height:4px;background:#908e6b"></div>
<div class="ab" style="left:1136px;top:188px;width:32px;height:4px;background:linear-gradient(90deg,#837e5a 0px 4px,#56593b 4px 8px,#555d55 8px 12px,#606e43 12px 16px,#5e5648 16px 20px,#4f4f47 20px 24px,#484f44 24px 28px,#496647 28px 32px)"></div>
<div class="ab" style="left:1136px;top:192px;width:32px;height:4px;background:linear-gradient(90deg,#778e5b 0px 4px,#45402e 4px 8px,#2d271b 8px 12px,#6f695c 12px 16px,#576957 16px 20px,#343927 20px 24px,#393f31 24px 28px,#565944 28px 32px)"></div>
<div class="ab" style="left:1148px;top:196px;width:4px;height:4px;background:#9f9d6e"></div>
<div class="ab" style="left:1152px;top:196px;width:4px;height:4px;background:#969767"></div>
<div class="ab" style="left:1236px;top:188px;width:32px;height:4px;background:linear-gradient(90deg,#757c5c 0px 4px,#4f6048 4px 8px,#55684a 8px 12px,#536f44 12px 16px,#4f564a 16px 20px,#55593c 20px 24px,#41413e 24px 28px,#545747 28px 32px)"></div>
<div class="ab" style="left:1236px;top:192px;width:32px;height:4px;background:linear-gradient(90deg,#799166 0px 4px,#344826 4px 8px,#27261d 8px 12px,#5e7a48 12px 16px,#5e7143 16px 20px,#2b382c 20px 24px,#485231 24px 28px,#4e5639 28px 32px)"></div>
<div class="ab" style="left:1248px;top:196px;width:4px;height:4px;background:#9fac7a"></div>
<div class="ab" style="left:1252px;top:196px;width:4px;height:4px;background:#87ab79"></div>
<div class="ab" style="left:1328px;top:188px;width:40px;height:4px;background:linear-gradient(90deg,#708259 0px 4px,#34362b 4px 8px,#4e5e4e 8px 12px,#404837 12px 16px,#273126 16px 20px,#a1ab72 20px 24px,#4d5b36 24px 28px,#594c3c 28px 32px,#415345 32px 36px,#59564d 36px 40px)"></div>
<div class="ab" style="left:1328px;top:192px;width:40px;height:4px;background:linear-gradient(90deg,#707a66 0px 4px,#3a3f33 4px 8px,#5d584b 8px 12px,#3e462f 12px 16px,#373626 16px 20px,#546740 20px 24px,#554933 24px 28px,#47623e 28px 32px,#404431 32px 36px,#575d48 36px 40px)"></div>
<div class="ab" style="left:1348px;top:196px;width:4px;height:4px;background:#8d8c6d"></div>
<div class="ab" style="left:460px;top:220px;width:908px;height:4px;background:#e8edde"></div>
<div class="ab" style="left:536px;top:204px;width:4px;height:16px;background:#dce4ce"></div>
<div class="ab" style="left:668px;top:204px;width:4px;height:16px;background:#dce4ce"></div>
<div class="ab" style="left:768px;top:204px;width:4px;height:16px;background:#dce4ce"></div>
<div class="ab" style="left:868px;top:204px;width:4px;height:16px;background:#dce4ce"></div>
<div class="ab" style="left:968px;top:204px;width:4px;height:16px;background:#dce4ce"></div>
<div class="ab" style="left:1068px;top:204px;width:4px;height:16px;background:#dce4ce"></div>
<div class="ab" style="left:1168px;top:204px;width:4px;height:16px;background:#dce4ce"></div>
<div class="ab" style="left:1268px;top:204px;width:4px;height:16px;background:#dce4ce"></div>
<div class="ab" style="left:472px;top:208px;width:64px;height:4px;background:linear-gradient(90deg,#9cae99 0px 4px,#7a6a71 4px 8px,#8a8f6c 8px 12px,#5c5d51 12px 16px,#42423b 16px 20px,#c1c5a3 20px 24px,#949b96 24px 28px,#515650 28px 32px,#454d46 32px 36px,#848070 36px 40px,#43393f 40px 44px,#aba497 44px 48px,#a9b998 48px 52px,#4a473b 52px 56px,#5a4a55 56px 60px,#606059 60px 64px)"></div>
<div class="ab" style="left:472px;top:212px;width:64px;height:4px;background:linear-gradient(90deg,#a7b387 0px 4px,#4e5051 4px 8px,#333c35 8px 12px,#938b8a 12px 16px,#4b4c51 16px 20px,#aba99f 20px 24px,#7a917e 24px 28px,#535144 28px 32px,#787d7a 32px 36px,#475c40 36px 40px,#42464f 40px 44px,#5f5f61 44px 48px,#9ba894 48px 52px,#848977 52px 56px,#55574a 56px 60px,#6c6b63 60px 64px)"></div>
<div class="ab" style="left:516px;top:216px;width:4px;height:4px;background:#b5c4b2"></div>
<div class="ab" style="left:520px;top:216px;width:4px;height:4px;background:#c5c4b0"></div>
<div class="ab" style="left:604px;top:208px;width:64px;height:4px;background:linear-gradient(90deg,#a8a08a 0px 4px,#6b7970 4px 8px,#777c6f 8px 12px,#5f6754 12px 16px,#363343 16px 20px,#bfb9b3 20px 24px,#94a19b 24px 28px,#5f6050 28px 32px,#495642 32px 36px,#778169 36px 40px,#36403b 40px 44px,#a8b398 44px 48px,#a2b599 48px 52px,#4b5040 52px 56px,#545a4b 56px 60px,#62716a 60px 64px)"></div>
<div class="ab" style="left:604px;top:212px;width:64px;height:4px;background:linear-gradient(90deg,#a7ad9b 0px 4px,#525448 4px 8px,#363f2f 8px 12px,#899784 12px 16px,#544d4a 16px 20px,#aab599 20px 24px,#899472 24px 28px,#4f5545 28px 32px,#7a8b66 32px 36px,#524b52 36px 40px,#544c3c 40px 44px,#60635d 44px 48px,#a2ac9b 48px 52px,#7f817f 52px 56px,#516050 56px 60px,#6a5e69 60px 64px)"></div>
<div class="ab" style="left:648px;top:216px;width:4px;height:4px;background:#b9bba6"></div>
<div class="ab" style="left:652px;top:216px;width:4px;height:4px;background:#c1c1af"></div>
<div class="ab" style="left:728px;top:208px;width:40px;height:4px;background:linear-gradient(90deg,#93a084 0px 4px,#4c4e53 4px 8px,#827d67 8px 12px,#5a5247 12px 16px,#384945 16px 20px,#cacfb5 20px 24px,#5d7259 24px 28px,#6f786c 28px 32px,#605f5b 32px 36px,#667b63 36px 40px)"></div>
<div class="ab" style="left:728px;top:212px;width:40px;height:4px;background:linear-gradient(90deg,#a19988 0px 4px,#474d41 4px 8px,#627760 8px 12px,#494d4a 12px 16px,#444b46 16px 20px,#768979 20px 24px,#5c7269 24px 28px,#73676c 28px 32px,#665b51 32px 36px,#7a7761 36px 40px)"></div>
<div class="ab" style="left:748px;top:216px;width:4px;height:4px;background:#a7b09a"></div>
<div class="ab" style="left:836px;top:208px;width:32px;height:4px;background:linear-gradient(90deg,#a5a188 0px 4px,#7d7e62 4px 8px,#858378 8px 12px,#7f8978 12px 16px,#7d7271 16px 20px,#67705e 20px 24px,#696554 24px 28px,#696b67 28px 32px)"></div>
<div class="ab" style="left:836px;top:212px;width:32px;height:4px;background:linear-gradient(90deg,#95a689 0px 4px,#50534c 4px 8px,#412e3f 8px 12px,#8a9283 12px 16px,#847e70 16px 20px,#523e46 20px 24px,#61565a 24px 28px,#747e63 28px 32px)"></div>
<div class="ab" style="left:848px;top:216px;width:4px;height:4px;background:#cdcbaf"></div>
<div class="ab" style="left:852px;top:216px;width:4px;height:4px;background:#c8bcb2"></div>
<div class="ab" style="left:940px;top:208px;width:28px;height:4px;background:linear-gradient(90deg,#656164 0px 4px,#464b46 4px 8px,#cad3b7 8px 12px,#493d3e 12px 16px,#7c847c 16px 20px,#4e5e4c 20px 24px,#6a6963 24px 28px)"></div>
<div class="ab" style="left:940px;top:212px;width:28px;height:4px;background:linear-gradient(90deg,#989688 0px 4px,#383935 4px 8px,#91998a 8px 12px,#677b72 12px 16px,#4b4242 16px 20px,#4c545d 20px 24px,#6d7269 24px 28px)"></div>
<div class="ab" style="left:948px;top:216px;width:4px;height:4px;background:#b7b7a0"></div>
<div class="ab" style="left:1040px;top:208px;width:28px;height:4px;background:linear-gradient(90deg,#656a5d 0px 4px,#4e454a 4px 8px,#cad3b7 8px 12px,#424b36 12px 16px,#76787a 16px 20px,#5d594b 20px 24px,#727564 24px 28px)"></div>
<div class="ab" style="left:1040px;top:212px;width:28px;height:4px;background:linear-gradient(90deg,#878e7f 0px 4px,#373b3d 4px 8px,#9a8b85 8px 12px,#676d70 12px 16px,#4c5645 16px 20px,#4c5855 20px 24px,#757a62 24px 28px)"></div>
<div class="ab" style="left:1048px;top:216px;width:4px;height:4px;background:#ababa1"></div>
<div class="ab" style="left:1140px;top:208px;width:28px;height:4px;background:linear-gradient(90deg,#5b5d4f 0px 4px,#3e503d 4px 8px,#cad3b7 8px 12px,#4e3a48 12px 16px,#757779 16px 20px,#4d5b47 20px 24px,#5f7568 24px 28px)"></div>
<div class="ab" style="left:1140px;top:212px;width:28px;height:4px;background:linear-gradient(90deg,#959877 0px 4px,#3f4239 4px 8px,#9a908e 8px 12px,#776a5d 12px 16px,#4e543c 16px 20px,#54614a 20px 24px,#736e58 24px 28px)"></div>
<div class="ab" style="left:1148px;top:216px;width:4px;height:4px;background:#aab79c"></div>
<div class="ab" style="left:1240px;top:208px;width:28px;height:4px;background:linear-gradient(90deg,#665d62 0px 4px,#464f49 4px 8px,#cad3b7 8px 12px,#414246 12px 16px,#898a75 16px 20px,#4e4b59 20px 24px,#6f765e 24px 28px)"></div>
<div class="ab" style="left:1240px;top:212px;width:28px;height:4px;background:linear-gradient(90deg,#8f9e88 0px 4px,#3e3838 4px 8px,#999388 8px 12px,#747f70 12px 16px,#454041 16px 20px,#565d5a 20px 24px,#74636b 24px 28px)"></div>
<div class="ab" style="left:1248px;top:216px;width:4px;height:4px;background:#b4be9f"></div>
<div class="ab" style="left:1336px;top:208px;width:32px;height:4px;background:linear-gradient(90deg,#98ad97 0px 4px,#778166 4px 8px,#718279 8px 12px,#74867b 12px 16px,#6f7c70 16px 20px,#666359 20px 24px,#666b59 24px 28px,#667b6e 28px 32px)"></div>
<div class="ab" style="left:1336px;top:212px;width:32px;height:4px;background:linear-gradient(90deg,#99a99b 0px 4px,#5a534b 4px 8px,#3b322f 8px 12px,#83957c 12px 16px,#7e7f72 16px 20px,#3e3e4f 20px 24px,#5b585b 24px 28px,#766b69 28px 32px)"></div>
<div class="ab" style="left:1348px;top:216px;width:4px;height:4px;background:#bdcba4"></div>
<div class="ab" style="left:1352px;top:216px;width:4px;height:4px;background:#b3d3b5"></div>
<div class="ab" style="left:460px;top:240px;width:908px;height:4px;background:#f8f8f8"></div>
<div class="ab" style="left:536px;top:224px;width:4px;height:16px;background:#fafafa"></div>
<div class="ab" style="left:668px;top:224px;width:4px;height:16px;background:#fafafa"></div>
<div class="ab" style="left:768px;top:224px;width:4px;height:16px;background:#fafafa"></div>
<div class="ab" style="left:868px;top:224px;width:4px;height:16px;background:#fafafa"></div>
<div class="ab" style="left:968px;top:224px;width:4px;height:16px;background:#fafafa"></div>
<div class="ab" style="left:1068px;top:224px;width:4px;height:16px;background:#fafafa"></div>
<div class="ab" style="left:1168px;top:224px;width:4px;height:16px;background:#fafafa"></div>
<div class="ab" style="left:1268px;top:224px;width:4px;height:16px;background:#fafafa"></div>
<div class="ab" style="left:484px;top:228px;width:52px;height:4px;background:linear-gradient(90deg,#aaaaa5 0px 4px,#d7c8be 4px 8px,#b9c3d7 8px 12px,#dcd7d2 12px 16px,#aaafaf 16px 20px,#cdc3c8 20px 24px,#9b96a0 24px 28px,#96968c 28px 32px,#969691 32px 36px,#d7c8be 36px 40px,#dce1e1 40px 44px,#87828c 44px 48px,#aaafaf 48px 52px)"></div>
<div class="ab" style="left:484px;top:232px;width:52px;height:4px;background:linear-gradient(90deg,#b9c6e1 0px 4px,#d2b9af 4px 8px,#aab9d2 8px 12px,#8c9196 12px 16px,#dce6f0 16px 20px,#878291 20px 24px,#c8b9a0 24px 28px,#ded8d2 28px 32px,#b9c6e1 32px 36px,#cdc3af 36px 40px,#827364 40px 44px,#ebdccd 44px 48px,#aaaaa5 48px 52px)"></div>
<div class="ab" style="left:516px;top:236px;width:4px;height:4px;background:#fef2e6"></div>
<div class="ab" style="left:520px;top:236px;width:4px;height:4px;background:#deeaf8"></div>
<div class="ab" style="left:644px;top:228px;width:24px;height:4px;background:linear-gradient(90deg,#b2aca8 0px 4px,#b4bac0 4px 8px,#e4d6ca 8px 12px,#8c94a0 12px 16px,#acaea8 16px 20px,#b6bcc4 20px 24px)"></div>
<div class="ab" style="left:644px;top:232px;width:24px;height:4px;background:linear-gradient(90deg,#b2aca8 0px 4px,#b4bab8 4px 8px,#bcacaa 8px 12px,#8c94a0 12px 16px,#acaea8 16px 20px,#b6bcc4 20px 24px)"></div>
<div class="ab" style="left:648px;top:236px;width:4px;height:4px;background:#fef2e6"></div>
<div class="ab" style="left:652px;top:236px;width:4px;height:4px;background:#deeaf8"></div>
<div class="ab" style="left:704px;top:228px;width:64px;height:4px;background:linear-gradient(90deg,#a0a09b 0px 4px,#dce1e1 4px 8px,#9b9b96 8px 12px,#e1d7d2 12px 16px,#a5b4c8 16px 20px,#878291 20px 24px,#aaafaf 24px 28px,#a5aab4 28px 32px,#b9c3d7 32px 36px,#969191 36px 40px,#beaaaa 40px 44px,#878291 44px 48px,#b4b9c3 48px 52px,#e1d7d2 52px 56px,#8c9196 56px 60px,#969691 60px 64px)"></div>
<div class="ab" style="left:704px;top:232px;width:64px;height:4px;background:linear-gradient(90deg,#a5afbe 0px 4px,#827364 4px 8px,#8c969b 8px 12px,#969191 12px 16px,#8c9196 16px 20px,#b9c6e1 20px 24px,#aaafaf 24px 28px,#829baa 28px 32px,#ded8d2 32px 36px,#cdc3af 36px 40px,#c8b9a0 40px 44px,#ded8d2 44px 48px,#aaafaf 48px 52px,#b4b9c3 52px 56px,#beaaaa 56px 60px,#8791a0 60px 64px)"></div>
<div class="ab" style="left:748px;top:236px;width:4px;height:4px;background:#fef2e6"></div>
<div class="ab" style="left:752px;top:236px;width:4px;height:4px;background:#deeaf8"></div>
<div class="ab" style="left:844px;top:228px;width:24px;height:4px;background:linear-gradient(90deg,#b2aca8 0px 4px,#b4bac0 4px 8px,#e4d6ca 8px 12px,#8c94a0 12px 16px,#acaea8 16px 20px,#b6bcc4 20px 24px)"></div>
<div class="ab" style="left:844px;top:232px;width:24px;height:4px;background:linear-gradient(90deg,#b2aca8 0px 4px,#b4bab8 4px 8px,#bcacaa 8px 12px,#8c94a0 12px 16px,#acaea8 16px 20px,#b6bcc4 20px 24px)"></div>
<div class="ab" style="left:848px;top:236px;width:4px;height:4px;background:#fef2e6"></div>
<div class="ab" style="left:852px;top:236px;width:4px;height:4px;background:#deeaf8"></div>
<div class="ab" style="left:944px;top:228px;width:24px;height:4px;background:linear-gradient(90deg,#b2aca8 0px 4px,#b4bac0 4px 8px,#e4d6ca 8px 12px,#8c94a0 12px 16px,#acaea8 16px 20px,#b6bcc4 20px 24px)"></div>
<div class="ab" style="left:944px;top:232px;width:24px;height:4px;background:linear-gradient(90deg,#b2aca8 0px 4px,#b4bab8 4px 8px,#bcacaa 8px 12px,#8c94a0 12px 16px,#acaea8 16px 20px,#b6bcc4 20px 24px)"></div>
<div class="ab" style="left:948px;top:236px;width:4px;height:4px;background:#fef2e6"></div>
<div class="ab" style="left:952px;top:236px;width:4px;height:4px;background:#deeaf8"></div>
<div class="ab" style="left:1044px;top:228px;width:24px;height:4px;background:linear-gradient(90deg,#b2aca8 0px 4px,#b4bac0 4px 8px,#e4d6ca 8px 12px,#8c94a0 12px 16px,#acaea8 16px 20px,#b6bcc4 20px 24px)"></div>
<div class="ab" style="left:1044px;top:232px;width:24px;height:4px;background:linear-gradient(90deg,#b2aca8 0px 4px,#b4bab8 4px 8px,#bcacaa 8px 12px,#8c94a0 12px 16px,#acaea8 16px 20px,#b6bcc4 20px 24px)"></div>
<div class="ab" style="left:1048px;top:236px;width:4px;height:4px;background:#fef2e6"></div>
<div class="ab" style="left:1052px;top:236px;width:4px;height:4px;background:#deeaf8"></div>
<div class="ab" style="left:1144px;top:228px;width:24px;height:4px;background:linear-gradient(90deg,#b2aca8 0px 4px,#b4bac0 4px 8px,#e4d6ca 8px 12px,#8c94a0 12px 16px,#acaea8 16px 20px,#b6bcc4 20px 24px)"></div>
<div class="ab" style="left:1144px;top:232px;width:24px;height:4px;background:linear-gradient(90deg,#b2aca8 0px 4px,#b4bab8 4px 8px,#bcacaa 8px 12px,#8c94a0 12px 16px,#acaea8 16px 20px,#b6bcc4 20px 24px)"></div>
<div class="ab" style="left:1148px;top:236px;width:4px;height:4px;background:#fef2e6"></div>
<div class="ab" style="left:1152px;top:236px;width:4px;height:4px;background:#deeaf8"></div>
<div class="ab" style="left:1244px;top:228px;width:24px;height:4px;background:linear-gradient(90deg,#b2aca8 0px 4px,#b4bac0 4px 8px,#e4d6ca 8px 12px,#8c94a0 12px 16px,#acaea8 16px 20px,#b6bcc4 20px 24px)"></div>
<div class="ab" style="left:1244px;top:232px;width:24px;height:4px;background:linear-gradient(90deg,#b2aca8 0px 4px,#b4bab8 4px 8px,#bcacaa 8px 12px,#8c94a0 12px 16px,#acaea8 16px 20px,#b6bcc4 20px 24px)"></div>
<div class="ab" style="left:1248px;top:236px;width:4px;height:4px;background:#fef2e6"></div>
<div class="ab" style="left:1252px;top:236px;width:4px;height:4px;background:#deeaf8"></div>
<div class="ab" style="left:1344px;top:228px;width:24px;height:4px;background:linear-gradient(90deg,#b2aca8 0px 4px,#b4bac0 4px 8px,#e4d6ca 8px 12px,#8c94a0 12px 16px,#acaea8 16px 20px,#b6bcc4 20px 24px)"></div>
<div class="ab" style="left:1344px;top:232px;width:24px;height:4px;background:linear-gradient(90deg,#b2aca8 0px 4px,#b4bab8 4px 8px,#bcacaa 8px 12px,#8c94a0 12px 16px,#acaea8 16px 20px,#b6bcc4 20px 24px)"></div>
<div class="ab" style="left:1348px;top:236px;width:4px;height:4px;background:#fef2e6"></div>
<div class="ab" style="left:1352px;top:236px;width:4px;height:4px;background:#deeaf8"></div>
<div class="ab" style="left:460px;top:260px;width:908px;height:4px;background:#f8f8f8"></div>
<div class="ab" style="left:536px;top:244px;width:4px;height:16px;background:#fafafa"></div>
<div class="ab" style="left:668px;top:244px;width:4px;height:16px;background:#fafafa"></div>
<div class="ab" style="left:768px;top:244px;width:4px;height:16px;background:#fafafa"></div>
<div class="ab" style="left:868px;top:244px;width:4px;height:16px;background:#fafafa"></div>
<div class="ab" style="left:968px;top:244px;width:4px;height:16px;background:#fafafa"></div>
<div class="ab" style="left:1068px;top:244px;width:4px;height:16px;background:#fafafa"></div>
<div class="ab" style="left:1168px;top:244px;width:4px;height:16px;background:#fafafa"></div>
<div class="ab" style="left:1268px;top:244px;width:4px;height:16px;background:#fafafa"></div>
<div class="ab" style="left:492px;top:248px;width:44px;height:4px;background:linear-gradient(90deg,#ded8d2 0px 4px,#96968c 4px 8px,#969b91 8px 12px,#a5aab4 12px 16px,#a0a5af 16px 20px,#aab9d2 20px 24px,#919696 24px 28px,#d7c8be 28px 32px,#d7c8be 32px 36px,#969691 36px 40px,#beaaaa 40px 44px)"></div>
<div class="ab" style="left:492px;top:252px;width:44px;height:4px;background:linear-gradient(90deg,#96968c 0px 4px,#8791a0 4px 8px,#a5aab4 8px 12px,#827364 12px 16px,#aaafaf 16px 20px,#dce6f0 20px 24px,#a5b4c8 24px 28px,#827364 28px 32px,#8791a0 32px 36px,#dce6f0 36px 40px,#a5afbe 40px 44px)"></div>
<div class="ab" style="left:516px;top:256px;width:4px;height:4px;background:#fef2e6"></div>
<div class="ab" style="left:520px;top:256px;width:4px;height:4px;background:#deeaf8"></div>
<div class="ab" style="left:644px;top:248px;width:24px;height:4px;background:linear-gradient(90deg,#b2aca8 0px 4px,#b4bac0 4px 8px,#e4d6ca 8px 12px,#8c94a0 12px 16px,#acaea8 16px 20px,#b6bcc4 20px 24px)"></div>
<div class="ab" style="left:644px;top:252px;width:24px;height:4px;background:linear-gradient(90deg,#b2aca8 0px 4px,#b4bab8 4px 8px,#bcacaa 8px 12px,#8c94a0 12px 16px,#acaea8 16px 20px,#b6bcc4 20px 24px)"></div>
<div class="ab" style="left:648px;top:256px;width:4px;height:4px;background:#fef2e6"></div>
<div class="ab" style="left:652px;top:256px;width:4px;height:4px;background:#deeaf8"></div>
<div class="ab" style="left:712px;top:248px;width:56px;height:4px;background:linear-gradient(90deg,#969691 0px 4px,#8c969b 4px 8px,#969b91 8px 12px,#a0a5af 12px 16px,#ebdccd 16px 20px,#aab9d2 20px 24px,#b9c6e1 24px 28px,#a5afbe 28px 32px,#969191 32px 36px,#a0a09b 36px 40px,#787d87 40px 44px,#827364 44px 48px,#87828c 48px 52px,#969691 52px 56px)"></div>
<div class="ab" style="left:712px;top:252px;width:56px;height:4px;background:linear-gradient(90deg,#96968c 0px 4px,#dce6f0 4px 8px,#c8b9a0 8px 12px,#9b9b96 12px 16px,#a0a09b 16px 20px,#969691 20px 24px,#d2b9af 24px 28px,#a5aab4 28px 32px,#969191 32px 36px,#8791a0 36px 40px,#a5b4c8 40px 44px,#9b9b96 44px 48px,#827364 48px 52px,#969b91 52px 56px)"></div>
<div class="ab" style="left:748px;top:256px;width:4px;height:4px;background:#fef2e6"></div>
<div class="ab" style="left:752px;top:256px;width:4px;height:4px;background:#deeaf8"></div>
<div class="ab" style="left:844px;top:248px;width:24px;height:4px;background:linear-gradient(90deg,#b2aca8 0px 4px,#b4bac0 4px 8px,#e4d6ca 8px 12px,#8c94a0 12px 16px,#acaea8 16px 20px,#b6bcc4 20px 24px)"></div>
<div class="ab" style="left:844px;top:252px;width:24px;height:4px;background:linear-gradient(90deg,#b2aca8 0px 4px,#b4bab8 4px 8px,#bcacaa 8px 12px,#8c94a0 12px 16px,#acaea8 16px 20px,#b6bcc4 20px 24px)"></div>
<div class="ab" style="left:848px;top:256px;width:4px;height:4px;background:#fef2e6"></div>
<div class="ab" style="left:852px;top:256px;width:4px;height:4px;background:#deeaf8"></div>
<div class="ab" style="left:944px;top:248px;width:24px;height:4px;background:linear-gradient(90deg,#b2aca8 0px 4px,#b4bac0 4px 8px,#e4d6ca 8px 12px,#8c94a0 12px 16px,#acaea8 16px 20px,#b6bcc4 20px 24px)"></div>
<div class="ab" style="left:944px;top:252px;width:24px;height:4px;background:linear-gradient(90deg,#b2aca8 0px 4px,#b4bab8 4px 8px,#bcacaa 8px 12px,#8c94a0 12px 16px,#acaea8 16px 20px,#b6bcc4 20px 24px)"></div>
<div class="ab" style="left:948px;top:256px;width:4px;height:4px;background:#fef2e6"></div>
<div class="ab" style="left:952px;top:256px;width:4px;height:4px;background:#deeaf8"></div>
<div class="ab" style="left:1044px;top:248px;width:24px;height:4px;background:linear-gradient(90deg,#b2aca8 0px 4px,#b4bac0 4px 8px,#e4d6ca 8px 12px,#8c94a0 12px 16px,#acaea8 16px 20px,#b6bcc4 20px 24px)"></div>
<div class="ab" style="left:1044px;top:252px;width:24px;height:4px;background:linear-gradient(90deg,#b2aca8 0px 4px,#b4bab8 4px 8px,#bcacaa 8px 12px,#8c94a0 12px 16px,#acaea8 16px 20px,#b6bcc4 20px 24px)"></div>
<div class="ab" style="left:1048px;top:256px;width:4px;height:4px;background:#fef2e6"></div>
<div class="ab" style="left:1052px;top:256px;width:4px;height:4px;background:#deeaf8"></div>
<div class="ab" style="left:1144px;top:248px;width:24px;height:4px;background:linear-gradient(90deg,#b2aca8 0px 4px,#b4bac0 4px 8px,#e4d6ca 8px 12px,#8c94a0 12px 16px,#acaea8 16px 20px,#b6bcc4 20px 24px)"></div>
<div class="ab" style="left:1144px;top:252px;width:24px;height:4px;background:linear-gradient(90deg,#b2aca8 0px 4px,#b4bab8 4px 8px,#bcacaa 8px 12px,#8c94a0 12px 16px,#acaea8 16px 20px,#b6bcc4 20px 24px)"></div>
<div class="ab" style="left:1148px;top:256px;width:4px;height:4px;background:#fef2e6"></div>
<div class="ab" style="left:1152px;top:256px;width:4px;height:4px;background:#deeaf8"></div>
<div class="ab" style="left:1244px;top:248px;width:24px;height:4px;background:linear-gradient(90deg,#b2aca8 0px 4px,#b4bac0 4px 8px,#e4d6ca 8px 12px,#8c94a0 12px 16px,#acaea8 16px 20px,#b6bcc4 20px 24px)"></div>
<div class="ab" style="left:1244px;top:252px;width:24px;height:4px;background:linear-gradient(90deg,#b2aca8 0px 4px,#b4bab8 4px 8px,#bcacaa 8px 12px,#8c94a0 12px 16px,#acaea8 16px 20px,#b6bcc4 20px 24px)"></div>
<div class="ab" style="left:1248px;top:256px;width:4px;height:4px;background:#fef2e6"></div>
<div class="ab" style="left:1252px;top:256px;width:4px;height:4px;background:#deeaf8"></div>
<div class="ab" style="left:1344px;top:248px;width:24px;height:4px;background:linear-gradient(90deg,#b2aca8 0px 4px,#b4bac0 4px 8px,#e4d6ca 8px 12px,#8c94a0 12px 16px,#acaea8 16px 20px,#b6bcc4 20px 24px)"></div>
<div class="ab" style="left:1344px;top:252px;width:24px;height:4px;background:linear-gradient(90deg,#b2aca8 0px 4px,#b4bab8 4px 8px,#bcacaa 8px 12px,#8c94a0 12px 16px,#acaea8 16px 20px,#b6bcc4 20px 24px)"></div>
<div class="ab" style="left:1348px;top:256px;width:4px;height:4px;background:#fef2e6"></div>
<div class="ab" style="left:1352px;top:256px;width:4px;height:4px;background:#deeaf8"></div>
<div class="ab" style="left:460px;top:280px;width:908px;height:4px;background:#f8f8f8"></div>
<div class="ab" style="left:536px;top:264px;width:4px;height:16px;background:#fafafa"></div>
<div class="ab" style="left:668px;top:264px;width:4px;height:16px;background:#fafafa"></div>
<div class="ab" style="left:768px;top:264px;width:4px;height:16px;background:#fafafa"></div>
<div class="ab" style="left:868px;top:264px;width:4px;height:16px;background:#fafafa"></div>
<div class="ab" style="left:968px;top:264px;width:4px;height:16px;background:#fafafa"></div>
<div class="ab" style="left:1068px;top:264px;width:4px;height:16px;background:#fafafa"></div>
<div class="ab" style="left:1168px;top:264px;width:4px;height:16px;background:#fafafa"></div>
<div class="ab" style="left:1268px;top:264px;width:4px;height:16px;background:#fafafa"></div>
<div class="ab" style="left:484px;top:268px;width:52px;height:4px;background:linear-gradient(90deg,#d2b9af 0px 4px,#969191 4px 8px,#ded8d2 8px 12px,#8c9196 12px 16px,#969691 16px 20px,#cdc3af 20px 24px,#969b91 24px 28px,#969691 28px 32px,#969b91 32px 36px,#cdc3c8 36px 40px,#96918c 40px 44px,#96918c 44px 48px,#8c969b 48px 52px)"></div>
<div class="ab" style="left:484px;top:272px;width:52px;height:4px;background:linear-gradient(90deg,#969b91 0px 4px,#c8b9a0 4px 8px,#cdc3c8 8px 12px,#b9c3d7 12px 16px,#91878c 16px 20px,#d2b9af 20px 24px,#a5afbe 24px 28px,#aaafaf 28px 32px,#aaaaa5 32px 36px,#96968c 36px 40px,#a5aab4 40px 44px,#ebdccd 44px 48px,#8791a0 48px 52px)"></div>
<div class="ab" style="left:516px;top:276px;width:4px;height:4px;background:#fef2e6"></div>
<div class="ab" style="left:520px;top:276px;width:4px;height:4px;background:#deeaf8"></div>
<div class="ab" style="left:644px;top:268px;width:24px;height:4px;background:linear-gradient(90deg,#b2aca8 0px 4px,#b4bac0 4px 8px,#e4d6ca 8px 12px,#8c94a0 12px 16px,#acaea8 16px 20px,#b6bcc4 20px 24px)"></div>
<div class="ab" style="left:644px;top:272px;width:24px;height:4px;background:linear-gradient(90deg,#b2aca8 0px 4px,#b4bab8 4px 8px,#bcacaa 8px 12px,#8c94a0 12px 16px,#acaea8 16px 20px,#b6bcc4 20px 24px)"></div>
<div class="ab" style="left:648px;top:276px;width:4px;height:4px;background:#fef2e6"></div>
<div class="ab" style="left:652px;top:276px;width:4px;height:4px;background:#deeaf8"></div>
<div class="ab" style="left:704px;top:268px;width:64px;height:4px;background:linear-gradient(90deg,#a5b4c8 0px 4px,#969b91 4px 8px,#b4b9c3 8px 12px,#ded8d2 12px 16px,#9b9b96 16px 20px,#dcd7d2 20px 24px,#cdc3af 24px 28px,#8791a0 28px 32px,#91878c 32px 36px,#a5b4c8 36px 40px,#aaafaf 40px 44px,#aab9d2 44px 48px,#827364 48px 52px,#9b96a0 52px 56px,#aaafaf 56px 60px,#8c969b 60px 64px)"></div>
<div class="ab" style="left:704px;top:272px;width:64px;height:4px;background:linear-gradient(90deg,#8c969b 0px 4px,#96968c 4px 8px,#dce6f0 8px 12px,#91878c 12px 16px,#96918c 16px 20px,#a5afbe 20px 24px,#ded8d2 24px 28px,#91878c 28px 32px,#969b91 32px 36px,#9b9b96 36px 40px,#c8b9a0 40px 44px,#969691 44px 48px,#b4b9c3 48px 52px,#d2b9af 52px 56px,#b4b9c3 56px 60px,#87828c 60px 64px)"></div>
<div class="ab" style="left:748px;top:276px;width:4px;height:4px;background:#fef2e6"></div>
<div class="ab" style="left:752px;top:276px;width:4px;height:4px;background:#deeaf8"></div>
<div class="ab" style="left:844px;top:268px;width:24px;height:4px;background:linear-gradient(90deg,#b2aca8 0px 4px,#b4bac0 4px 8px,#e4d6ca 8px 12px,#8c94a0 12px 16px,#acaea8 16px 20px,#b6bcc4 20px 24px)"></div>
<div class="ab" style="left:844px;top:272px;width:24px;height:4px;background:linear-gradient(90deg,#b2aca8 0px 4px,#b4bab8 4px 8px,#bcacaa 8px 12px,#8c94a0 12px 16px,#acaea8 16px 20px,#b6bcc4 20px 24px)"></div>
<div class="ab" style="left:848px;top:276px;width:4px;height:4px;background:#fef2e6"></div>
<div class="ab" style="left:852px;top:276px;width:4px;height:4px;background:#deeaf8"></div>
<div class="ab" style="left:944px;top:268px;width:24px;height:4px;background:linear-gradient(90deg,#b2aca8 0px 4px,#b4bac0 4px 8px,#e4d6ca 8px 12px,#8c94a0 12px 16px,#acaea8 16px 20px,#b6bcc4 20px 24px)"></div>
<div class="ab" style="left:944px;top:272px;width:24px;height:4px;background:linear-gradient(90deg,#b2aca8 0px 4px,#b4bab8 4px 8px,#bcacaa 8px 12px,#8c94a0 12px 16px,#acaea8 16px 20px,#b6bcc4 20px 24px)"></div>
<div class="ab" style="left:948px;top:276px;width:4px;height:4px;background:#fef2e6"></div>
<div class="ab" style="left:952px;top:276px;width:4px;height:4px;background:#deeaf8"></div>
<div class="ab" style="left:1044px;top:268px;width:24px;height:4px;background:linear-gradient(90deg,#b2aca8 0px 4px,#b4bac0 4px 8px,#e4d6ca 8px 12px,#8c94a0 12px 16px,#acaea8 16px 20px,#b6bcc4 20px 24px)"></div>
<div class="ab" style="left:1044px;top:272px;width:24px;height:4px;background:linear-gradient(90deg,#b2aca8 0px 4px,#b4bab8 4px 8px,#bcacaa 8px 12px,#8c94a0 12px 16px,#acaea8 16px 20px,#b6bcc4 20px 24px)"></div>
<div class="ab" style="left:1048px;top:276px;width:4px;height:4px;background:#fef2e6"></div>
<div class="ab" style="left:1052px;top:276px;width:4px;height:4px;background:#deeaf8"></div>
<div class="ab" style="left:1144px;top:268px;width:24px;height:4px;background:linear-gradient(90deg,#b2aca8 0px 4px,#b4bac0 4px 8px,#e4d6ca 8px 12px,#8c94a0 12px 16px,#acaea8 16px 20px,#b6bcc4 20px 24px)"></div>
<div class="ab" style="left:1144px;top:272px;width:24px;height:4px;background:linear-gradient(90deg,#b2aca8 0px 4px,#b4bab8 4px 8px,#bcacaa 8px 12px,#8c94a0 12px 16px,#acaea8 16px 20px,#b6bcc4 20px 24px)"></div>
<div class="ab" style="left:1148px;top:276px;width:4px;height:4px;background:#fef2e6"></div>
<div class="ab" style="left:1152px;top:276px;width:4px;height:4px;background:#deeaf8"></div>
<div class="ab" style="left:1244px;top:268px;width:24px;height:4px;background:linear-gradient(90deg,#b2aca8 0px 4px,#b4bac0 4px 8px,#e4d6ca 8px 12px,#8c94a0 12px 16px,#acaea8 16px 20px,#b6bcc4 20px 24px)"></div>
<div class="ab" style="left:1244px;top:272px;width:24px;height:4px;background:linear-gradient(90deg,#b2aca8 0px 4px,#b4bab8 4px 8px,#bcacaa 8px 12px,#8c94a0 12px 16px,#acaea8 16px 20px,#b6bcc4 20px 24px)"></div>
<div class="ab" style="left:1248px;top:276px;width:4px;height:4px;background:#fef2e6"></div>
<div class="ab" style="left:1252px;top:276px;width:4px;height:4px;background:#deeaf8"></div>
<div class="ab" style="left:1344px;top:268px;width:24px;height:4px;background:linear-gradient(90deg,#b2aca8 0px 4px,#b4bac0 4px 8px,#e4d6ca 8px 12px,#8c94a0 12px 16px,#acaea8 16px 20px,#b6bcc4 20px 24px)"></div>
<div class="ab" style="left:1344px;top:272px;width:24px;height:4px;background:linear-gradient(90deg,#b2aca8 0px 4px,#b4bab8 4px 8px,#bcacaa 8px 12px,#8c94a0 12px 16px,#acaea8 16px 20px,#b6bcc4 20px 24px)"></div>
<div class="ab" style="left:1348px;top:276px;width:4px;height:4px;background:#fef2e6"></div>
<div class="ab" style="left:1352px;top:276px;width:4px;height:4px;background:#deeaf8"></div>
<div class="ab" style="left:460px;top:300px;width:908px;height:4px;background:#f8f8f8"></div>
<div class="ab" style="left:536px;top:284px;width:4px;height:16px;background:#fafafa"></div>
<div class="ab" style="left:668px;top:284px;width:4px;height:16px;background:#fafafa"></div>
<div class="ab" style="left:768px;top:284px;width:4px;height:16px;background:#fafafa"></div>
<div class="ab" style="left:868px;top:284px;width:4px;height:16px;background:#fafafa"></div>
<div class="ab" style="left:968px;top:284px;width:4px;height:16px;background:#fafafa"></div>
<div class="ab" style="left:1068px;top:284px;width:4px;height:16px;background:#fafafa"></div>
<div class="ab" style="left:1168px;top:284px;width:4px;height:16px;background:#fafafa"></div>
<div class="ab" style="left:1268px;top:284px;width:4px;height:16px;background:#fafafa"></div>
<div class="ab" style="left:484px;top:288px;width:52px;height:4px;background:linear-gradient(90deg,#969691 0px 4px,#a0a5af 4px 8px,#e6e1dc 8px 12px,#91878c 12px 16px,#8c9196 16px 20px,#827364 20px 24px,#9b96a0 24px 28px,#b9c6e1 28px 32px,#96918c 32px 36px,#dcd7d2 36px 40px,#cdc3c8 40px 44px,#b9c3d7 44px 48px,#8c9196 48px 52px)"></div>
<div class="ab" style="left:484px;top:292px;width:52px;height:4px;background:linear-gradient(90deg,#87828c 0px 4px,#8c9196 4px 8px,#e6e1dc 8px 12px,#969191 12px 16px,#8c9196 16px 20px,#aab9d2 20px 24px,#dce1e1 24px 28px,#878291 28px 32px,#878291 32px 36px,#dce1e1 36px 40px,#aaaaa5 40px 44px,#cdc3c8 44px 48px,#8c9196 48px 52px)"></div>
<div class="ab" style="left:516px;top:296px;width:4px;height:4px;background:#fef2e6"></div>
<div class="ab" style="left:520px;top:296px;width:4px;height:4px;background:#deeaf8"></div>
<div class="ab" style="left:632px;top:288px;width:36px;height:4px;background:linear-gradient(90deg,#dcd7d2 0px 4px,#87828c 4px 8px,#787d87 8px 12px,#9b9b96 12px 16px,#aab9d2 16px 20px,#d7c8be 20px 24px,#919696 24px 28px,#aab9d2 28px 32px,#a0a5af 32px 36px)"></div>
<div class="ab" style="left:632px;top:292px;width:36px;height:4px;background:linear-gradient(90deg,#a0a09b 0px 4px,#e6e1dc 4px 8px,#96918c 8px 12px,#ded8d2 12px 16px,#e6e1dc 16px 20px,#829baa 20px 24px,#d2b9af 24px 28px,#91878c 28px 32px,#9b9b96 32px 36px)"></div>
<div class="ab" style="left:648px;top:296px;width:4px;height:4px;background:#fef2e6"></div>
<div class="ab" style="left:652px;top:296px;width:4px;height:4px;background:#deeaf8"></div>
<div class="ab" style="left:724px;top:288px;width:44px;height:4px;background:linear-gradient(90deg,#aaaaa5 0px 4px,#878291 4px 8px,#a0a5af 8px 12px,#96918c 12px 16px,#8791a0 16px 20px,#87828c 20px 24px,#cdc3c8 24px 28px,#8c969b 28px 32px,#8c9196 32px 36px,#b9c3d7 36px 40px,#827364 40px 44px)"></div>
<div class="ab" style="left:724px;top:292px;width:44px;height:4px;background:linear-gradient(90deg,#b9c6e1 0px 4px,#a5afbe 4px 8px,#827364 8px 12px,#b9c3d7 12px 16px,#dce1e1 16px 20px,#a0a5af 20px 24px,#829baa 24px 28px,#e6e1dc 28px 32px,#969691 32px 36px,#e6e1dc 36px 40px,#a0a09b 40px 44px)"></div>
<div class="ab" style="left:748px;top:296px;width:4px;height:4px;background:#fef2e6"></div>
<div class="ab" style="left:752px;top:296px;width:4px;height:4px;background:#deeaf8"></div>
<div class="ab" style="left:844px;top:288px;width:24px;height:4px;background:linear-gradient(90deg,#b2aca8 0px 4px,#b4bac0 4px 8px,#e4d6ca 8px 12px,#8c94a0 12px 16px,#acaea8 16px 20px,#b6bcc4 20px 24px)"></div>
<div class="ab" style="left:844px;top:292px;width:24px;height:4px;background:linear-gradient(90deg,#b2aca8 0px 4px,#b4bab8 4px 8px,#bcacaa 8px 12px,#8c94a0 12px 16px,#acaea8 16px 20px,#b6bcc4 20px 24px)"></div>
<div class="ab" style="left:848px;top:296px;width:4px;height:4px;background:#fef2e6"></div>
<div class="ab" style="left:852px;top:296px;width:4px;height:4px;background:#deeaf8"></div>
<div class="ab" style="left:944px;top:288px;width:24px;height:4px;background:linear-gradient(90deg,#b2aca8 0px 4px,#b4bac0 4px 8px,#e4d6ca 8px 12px,#8c94a0 12px 16px,#acaea8 16px 20px,#b6bcc4 20px 24px)"></div>
<div class="ab" style="left:944px;top:292px;width:24px;height:4px;background:linear-gradient(90deg,#b2aca8 0px 4px,#b4bab8 4px 8px,#bcacaa 8px 12px,#8c94a0 12px 16px,#acaea8 16px 20px,#b6bcc4 20px 24px)"></div>
<div class="ab" style="left:948px;top:296px;width:4px;height:4px;background:#fef2e6"></div>
<div class="ab" style="left:952px;top:296px;width:4px;height:4px;background:#deeaf8"></div>
<div class="ab" style="left:1044px;top:288px;width:24px;height:4px;background:linear-gradient(90deg,#b2aca8 0px 4px,#b4bac0 4px 8px,#e4d6ca 8px 12px,#8c94a0 12px 16px,#acaea8 16px 20px,#b6bcc4 20px 24px)"></div>
<div class="ab" style="left:1044px;top:292px;width:24px;height:4px;background:linear-gradient(90deg,#b2aca8 0px 4px,#b4bab8 4px 8px,#bcacaa 8px 12px,#8c94a0 12px 16px,#acaea8 16px 20px,#b6bcc4 20px 24px)"></div>
<div class="ab" style="left:1048px;top:296px;width:4px;height:4px;background:#fef2e6"></div>
<div class="ab" style="left:1052px;top:296px;width:4px;height:4px;background:#deeaf8"></div>
<div class="ab" style="left:1144px;top:288px;width:24px;height:4px;background:linear-gradient(90deg,#b2aca8 0px 4px,#b4bac0 4px 8px,#e4d6ca 8px 12px,#8c94a0 12px 16px,#acaea8 16px 20px,#b6bcc4 20px 24px)"></div>
<div class="ab" style="left:1144px;top:292px;width:24px;height:4px;background:linear-gradient(90deg,#b2aca8 0px 4px,#b4bab8 4px 8px,#bcacaa 8px 12px,#8c94a0 12px 16px,#acaea8 16px 20px,#b6bcc4 20px 24px)"></div>
<div class="ab" style="left:1148px;top:296px;width:4px;height:4px;background:#fef2e6"></div>
<div class="ab" style="left:1152px;top:296px;width:4px;height:4px;background:#deeaf8"></div>
<div class="ab" style="left:1244px;top:288px;width:24px;height:4px;background:linear-gradient(90deg,#b2aca8 0px 4px,#b4bac0 4px 8px,#e4d6ca 8px 12px,#8c94a0 12px 16px,#acaea8 16px 20px,#b6bcc4 20px 24px)"></div>
<div class="ab" style="left:1244px;top:292px;width:24px;height:4px;background:linear-gradient(90deg,#b2aca8 0px 4px,#b4bab8 4px 8px,#bcacaa 8px 12px,#8c94a0 12px 16px,#acaea8 16px 20px,#b6bcc4 20px 24px)"></div>
<div class="ab" style="left:1248px;top:296px;width:4px;height:4px;background:#fef2e6"></div>
<div class="ab" style="left:1252px;top:296px;width:4px;height:4px;background:#deeaf8"></div>
<div class="ab" style="left:1344px;top:288px;width:24px;height:4px;background:linear-gradient(90deg,#b2aca8 0px 4px,#b4bac0 4px 8px,#e4d6ca 8px 12px,#8c94a0 12px 16px,#acaea8 16px 20px,#b6bcc4 20px 24px)"></div>
<div class="ab" style="left:1344px;top:292px;width:24px;height:4px;background:linear-gradient(90deg,#b2aca8 0px 4px,#b4bab8 4px 8px,#bcacaa 8px 12px,#8c94a0 12px 16px,#acaea8 16px 20px,#b6bcc4 20px 24px)"></div>
<div class="ab" style="left:1348px;top:296px;width:4px;height:4px;background:#fef2e6"></div>
<div class="ab" style="left:1352px;top:296px;width:4px;height:4px;background:#deeaf8"></div>
<div class="ab" style="left:460px;top:320px;width:908px;height:4px;background:#f8f8f8"></div>
<div class="ab" style="left:536px;top:304px;width:4px;height:16px;background:#fafafa"></div>
<div class="ab" style="left:668px;top:304px;width:4px;height:16px;background:#fafafa"></div>
<div class="ab" style="left:768px;top:304px;width:4px;height:16px;background:#fafafa"></div>
<div class="ab" style="left:868px;top:304px;width:4px;height:16px;background:#fafafa"></div>
<div class="ab" style="left:968px;top:304px;width:4px;height:16px;background:#fafafa"></div>
<div class="ab" style="left:1068px;top:304px;width:4px;height:16px;background:#fafafa"></div>
<div class="ab" style="left:1168px;top:304px;width:4px;height:16px;background:#fafafa"></div>
<div class="ab" style="left:1268px;top:304px;width:4px;height:16px;background:#fafafa"></div>
<div class="ab" style="left:484px;top:308px;width:52px;height:4px;background:linear-gradient(90deg,#a5b4c8 0px 4px,#829baa 4px 8px,#8c969b 8px 12px,#a5aab4 12px 16px,#dce6f0 16px 20px,#b9c3d7 20px 24px,#ded8d2 24px 28px,#91878c 28px 32px,#96968c 32px 36px,#aaaaa5 36px 40px,#969691 40px 44px,#b4b9c3 44px 48px,#c8b9a0 48px 52px)"></div>
<div class="ab" style="left:484px;top:312px;width:52px;height:4px;background:linear-gradient(90deg,#e6e1dc 0px 4px,#969ba5 4px 8px,#87828c 8px 12px,#c8b9a0 12px 16px,#8c969b 16px 20px,#878291 20px 24px,#969191 24px 28px,#787d87 28px 32px,#8c9196 32px 36px,#a5afbe 36px 40px,#96968c 40px 44px,#919696 44px 48px,#aaafaf 48px 52px)"></div>
<div class="ab" style="left:516px;top:316px;width:4px;height:4px;background:#fef2e6"></div>
<div class="ab" style="left:520px;top:316px;width:4px;height:4px;background:#deeaf8"></div>
<div class="ab" style="left:616px;top:308px;width:52px;height:4px;background:linear-gradient(90deg,#cdc3af 0px 4px,#c8b9a0 4px 8px,#c8b9a0 8px 12px,#96968c 12px 16px,#aab9d2 16px 20px,#aaafaf 20px 24px,#c8b9a0 24px 28px,#dce1e1 28px 32px,#9b9b96 32px 36px,#b9c3d7 36px 40px,#ebdccd 40px 44px,#e6e1dc 44px 48px,#8c969b 48px 52px)"></div>
<div class="ab" style="left:616px;top:312px;width:52px;height:4px;background:linear-gradient(90deg,#969691 0px 4px,#96968c 4px 8px,#829baa 8px 12px,#96968c 12px 16px,#8c9196 16px 20px,#b9c6e1 20px 24px,#cdc3c8 24px 28px,#a5b4c8 28px 32px,#ebdccd 32px 36px,#aaaaa5 36px 40px,#d7c8be 40px 44px,#b4b9c3 44px 48px,#cdc3c8 48px 52px)"></div>
<div class="ab" style="left:648px;top:316px;width:4px;height:4px;background:#fef2e6"></div>
<div class="ab" style="left:652px;top:316px;width:4px;height:4px;background:#deeaf8"></div>
<div class="ab" style="left:732px;top:308px;width:36px;height:4px;background:linear-gradient(90deg,#a5b4c8 0px 4px,#a5b4c8 4px 8px,#a5b4c8 8px 12px,#e1d7d2 12px 16px,#87828c 16px 20px,#969ba5 20px 24px,#d7c8be 24px 28px,#969191 28px 32px,#969191 32px 36px)"></div>
<div class="ab" style="left:732px;top:312px;width:36px;height:4px;background:linear-gradient(90deg,#969b91 0px 4px,#b9c3d7 4px 8px,#ebdccd 8px 12px,#e1d7d2 12px 16px,#a5afbe 16px 20px,#c8b9a0 20px 24px,#9b9b96 24px 28px,#dce6f0 28px 32px,#96918c 32px 36px)"></div>
<div class="ab" style="left:748px;top:316px;width:4px;height:4px;background:#fef2e6"></div>
<div class="ab" style="left:752px;top:316px;width:4px;height:4px;background:#deeaf8"></div>
<div class="ab" style="left:844px;top:308px;width:24px;height:4px;background:linear-gradient(90deg,#b2aca8 0px 4px,#b4bac0 4px 8px,#e4d6ca 8px 12px,#8c94a0 12px 16px,#acaea8 16px 20px,#b6bcc4 20px 24px)"></div>
<div class="ab" style="left:844px;top:312px;width:24px;height:4px;background:linear-gradient(90deg,#b2aca8 0px 4px,#b4bab8 4px 8px,#bcacaa 8px 12px,#8c94a0 12px 16px,#acaea8 16px 20px,#b6bcc4 20px 24px)"></div>
<div class="ab" style="left:848px;top:316px;width:4px;height:4px;background:#fef2e6"></div>
<div class="ab" style="left:852px;top:316px;width:4px;height:4px;background:#deeaf8"></div>
<div class="ab" style="left:944px;top:308px;width:24px;height:4px;background:linear-gradient(90deg,#b2aca8 0px 4px,#b4bac0 4px 8px,#e4d6ca 8px 12px,#8c94a0 12px 16px,#acaea8 16px 20px,#b6bcc4 20px 24px)"></div>
<div class="ab" style="left:944px;top:312px;width:24px;height:4px;background:linear-gradient(90deg,#b2aca8 0px 4px,#b4bab8 4px 8px,#bcacaa 8px 12px,#8c94a0 12px 16px,#acaea8 16px 20px,#b6bcc4 20px 24px)"></div>
<div class="ab" style="left:948px;top:316px;width:4px;height:4px;background:#fef2e6"></div>
<div class="ab" style="left:952px;top:316px;width:4px;height:4px;background:#deeaf8"></div>
<div class="ab" style="left:1044px;top:308px;width:24px;height:4px;background:linear-gradient(90deg,#b2aca8 0px 4px,#b4bac0 4px 8px,#e4d6ca 8px 12px,#8c94a0 12px 16px,#acaea8 16px 20px,#b6bcc4 20px 24px)"></div>
<div class="ab" style="left:1044px;top:312px;width:24px;height:4px;background:linear-gradient(90deg,#b2aca8 0px 4px,#b4bab8 4px 8px,#bcacaa 8px 12px,#8c94a0 12px 16px,#acaea8 16px 20px,#b6bcc4 20px 24px)"></div>
<div class="ab" style="left:1048px;top:316px;width:4px;height:4px;background:#fef2e6"></div>
<div class="ab" style="left:1052px;top:316px;width:4px;height:4px;background:#deeaf8"></div>
<div class="ab" style="left:1144px;top:308px;width:24px;height:4px;background:linear-gradient(90deg,#b2aca8 0px 4px,#b4bac0 4px 8px,#e4d6ca 8px 12px,#8c94a0 12px 16px,#acaea8 16px 20px,#b6bcc4 20px 24px)"></div>
<div class="ab" style="left:1144px;top:312px;width:24px;height:4px;background:linear-gradient(90deg,#b2aca8 0px 4px,#b4bab8 4px 8px,#bcacaa 8px 12px,#8c94a0 12px 16px,#acaea8 16px 20px,#b6bcc4 20px 24px)"></div>
<div class="ab" style="left:1148px;top:316px;width:4px;height:4px;background:#fef2e6"></div>
<div class="ab" style="left:1152px;top:316px;width:4px;height:4px;background:#deeaf8"></div>
<div class="ab" style="left:1244px;top:308px;width:24px;height:4px;background:linear-gradient(90deg,#b2aca8 0px 4px,#b4bac0 4px 8px,#e4d6ca 8px 12px,#8c94a0 12px 16px,#acaea8 16px 20px,#b6bcc4 20px 24px)"></div>
<div class="ab" style="left:1244px;top:312px;width:24px;height:4px;background:linear-gradient(90deg,#b2aca8 0px 4px,#b4bab8 4px 8px,#bcacaa 8px 12px,#8c94a0 12px 16px,#acaea8 16px 20px,#b6bcc4 20px 24px)"></div>
<div class="ab" style="left:1248px;top:316px;width:4px;height:4px;background:#fef2e6"></div>
<div class="ab" style="left:1252px;top:316px;width:4px;height:4px;background:#deeaf8"></div>
<div class="ab" style="left:1344px;top:308px;width:24px;height:4px;background:linear-gradient(90deg,#b2aca8 0px 4px,#b4bac0 4px 8px,#e4d6ca 8px 12px,#8c94a0 12px 16px,#acaea8 16px 20px,#b6bcc4 20px 24px)"></div>
<div class="ab" style="left:1344px;top:312px;width:24px;height:4px;background:linear-gradient(90deg,#b2aca8 0px 4px,#b4bab8 4px 8px,#bcacaa 8px 12px,#8c94a0 12px 16px,#acaea8 16px 20px,#b6bcc4 20px 24px)"></div>
<div class="ab" style="left:1348px;top:316px;width:4px;height:4px;background:#fef2e6"></div>
<div class="ab" style="left:1352px;top:316px;width:4px;height:4px;background:#deeaf8"></div>
<div class="ab" style="left:460px;top:340px;width:908px;height:4px;background:#f8f8f8"></div>
<div class="ab" style="left:536px;top:324px;width:4px;height:16px;background:#fafafa"></div>
<div class="ab" style="left:668px;top:324px;width:4px;height:16px;background:#fafafa"></div>
<div class="ab" style="left:768px;top:324px;width:4px;height:16px;background:#fafafa"></div>
<div class="ab" style="left:868px;top:324px;width:4px;height:16px;background:#fafafa"></div>
<div class="ab" style="left:968px;top:324px;width:4px;height:16px;background:#fafafa"></div>
<div class="ab" style="left:1068px;top:324px;width:4px;height:16px;background:#fafafa"></div>
<div class="ab" style="left:1168px;top:324px;width:4px;height:16px;background:#fafafa"></div>
<div class="ab" style="left:1268px;top:324px;width:4px;height:16px;background:#fafafa"></div>
<div class="ab" style="left:484px;top:328px;width:52px;height:4px;background:linear-gradient(90deg,#dce1e1 0px 4px,#dce1e1 4px 8px,#e6e1dc 8px 12px,#b9c6e1 12px 16px,#e1d7d2 16px 20px,#ded8d2 20px 24px,#827364 24px 28px,#d2b9af 28px 32px,#e1d7d2 32px 36px,#8c969b 36px 40px,#d2b9af 40px 44px,#9b96a0 44px 48px,#b9c3d7 48px 52px)"></div>
<div class="ab" style="left:484px;top:332px;width:52px;height:4px;background:linear-gradient(90deg,#a5aab4 0px 4px,#e1d7d2 4px 8px,#cdc3af 8px 12px,#ded8d2 12px 16px,#a5aab4 16px 20px,#e6e1dc 20px 24px,#969b91 24px 28px,#829baa 28px 32px,#8c969b 32px 36px,#9b96a0 36px 40px,#9b9b96 40px 44px,#a0a5af 44px 48px,#827364 48px 52px)"></div>
<div class="ab" style="left:516px;top:336px;width:4px;height:4px;background:#fef2e6"></div>
<div class="ab" style="left:520px;top:336px;width:4px;height:4px;background:#deeaf8"></div>
<div class="ab" style="left:616px;top:328px;width:52px;height:4px;background:linear-gradient(90deg,#96968c 0px 4px,#e6e1dc 4px 8px,#8c9196 8px 12px,#a0a09b 12px 16px,#a5aab4 16px 20px,#9b96a0 20px 24px,#aab9d2 24px 28px,#b4b9c3 28px 32px,#c8b9a0 32px 36px,#969191 36px 40px,#87828c 40px 44px,#96918c 44px 48px,#e1d7d2 48px 52px)"></div>
<div class="ab" style="left:616px;top:332px;width:52px;height:4px;background:linear-gradient(90deg,#ebdccd 0px 4px,#9b9b96 4px 8px,#b9c6e1 8px 12px,#b9c6e1 12px 16px,#b9c6e1 16px 20px,#beaaaa 20px 24px,#787d87 24px 28px,#cdc3c8 28px 32px,#787d87 32px 36px,#cdc3c8 36px 40px,#9b9b96 40px 44px,#969ba5 44px 48px,#b9c6e1 48px 52px)"></div>
<div class="ab" style="left:648px;top:336px;width:4px;height:4px;background:#fef2e6"></div>
<div class="ab" style="left:652px;top:336px;width:4px;height:4px;background:#deeaf8"></div>
<div class="ab" style="left:740px;top:328px;width:28px;height:4px;background:linear-gradient(90deg,#787d87 0px 4px,#96968c 4px 8px,#aaafaf 8px 12px,#a5b4c8 12px 16px,#e6e1dc 16px 20px,#a0a5af 20px 24px,#9b96a0 24px 28px)"></div>
<div class="ab" style="left:740px;top:332px;width:28px;height:4px;background:linear-gradient(90deg,#8c969b 0px 4px,#b9c6e1 4px 8px,#91878c 8px 12px,#a5b4c8 12px 16px,#919696 16px 20px,#829baa 20px 24px,#beaaaa 24px 28px)"></div>
<div class="ab" style="left:748px;top:336px;width:4px;height:4px;background:#fef2e6"></div>
<div class="ab" style="left:752px;top:336px;width:4px;height:4px;background:#deeaf8"></div>
<div class="ab" style="left:844px;top:328px;width:24px;height:4px;background:linear-gradient(90deg,#b2aca8 0px 4px,#b4bac0 4px 8px,#e4d6ca 8px 12px,#8c94a0 12px 16px,#acaea8 16px 20px,#b6bcc4 20px 24px)"></div>
<div class="ab" style="left:844px;top:332px;width:24px;height:4px;background:linear-gradient(90deg,#b2aca8 0px 4px,#b4bab8 4px 8px,#bcacaa 8px 12px,#8c94a0 12px 16px,#acaea8 16px 20px,#b6bcc4 20px 24px)"></div>
<div class="ab" style="left:848px;top:336px;width:4px;height:4px;background:#fef2e6"></div>
<div class="ab" style="left:852px;top:336px;width:4px;height:4px;background:#deeaf8"></div>
<div class="ab" style="left:944px;top:328px;width:24px;height:4px;background:linear-gradient(90deg,#b2aca8 0px 4px,#b4bac0 4px 8px,#e4d6ca 8px 12px,#8c94a0 12px 16px,#acaea8 16px 20px,#b6bcc4 20px 24px)"></div>
<div class="ab" style="left:944px;top:332px;width:24px;height:4px;background:linear-gradient(90deg,#b2aca8 0px 4px,#b4bab8 4px 8px,#bcacaa 8px 12px,#8c94a0 12px 16px,#acaea8 16px 20px,#b6bcc4 20px 24px)"></div>
<div class="ab" style="left:948px;top:336px;width:4px;height:4px;background:#fef2e6"></div>
<div class="ab" style="left:952px;top:336px;width:4px;height:4px;background:#deeaf8"></div>
<div class="ab" style="left:1044px;top:328px;width:24px;height:4px;background:linear-gradient(90deg,#b2aca8 0px 4px,#b4bac0 4px 8px,#e4d6ca 8px 12px,#8c94a0 12px 16px,#acaea8 16px 20px,#b6bcc4 20px 24px)"></div>
<div class="ab" style="left:1044px;top:332px;width:24px;height:4px;background:linear-gradient(90deg,#b2aca8 0px 4px,#b4bab8 4px 8px,#bcacaa 8px 12px,#8c94a0 12px 16px,#acaea8 16px 20px,#b6bcc4 20px 24px)"></div>
<div class="ab" style="left:1048px;top:336px;width:4px;height:4px;background:#fef2e6"></div>
<div class="ab" style="left:1052px;top:336px;width:4px;height:4px;background:#deeaf8"></div>
<div class="ab" style="left:1144px;top:328px;width:24px;height:4px;background:linear-gradient(90deg,#b2aca8 0px 4px,#b4bac0 4px 8px,#e4d6ca 8px 12px,#8c94a0 12px 16px,#acaea8 16px 20px,#b6bcc4 20px 24px)"></div>
<div class="ab" style="left:1144px;top:332px;width:24px;height:4px;background:linear-gradient(90deg,#b2aca8 0px 4px,#b4bab8 4px 8px,#bcacaa 8px 12px,#8c94a0 12px 16px,#acaea8 16px 20px,#b6bcc4 20px 24px)"></div>
<div class="ab" style="left:1148px;top:336px;width:4px;height:4px;background:#fef2e6"></div>
<div class="ab" style="left:1152px;top:336px;width:4px;height:4px;background:#deeaf8"></div>
<div class="ab" style="left:1244px;top:328px;width:24px;height:4px;background:linear-gradient(90deg,#b2aca8 0px 4px,#b4bac0 4px 8px,#e4d6ca 8px 12px,#8c94a0 12px 16px,#acaea8 16px 20px,#b6bcc4 20px 24px)"></div>
<div class="ab" style="left:1244px;top:332px;width:24px;height:4px;background:linear-gradient(90deg,#b2aca8 0px 4px,#b4bab8 4px 8px,#bcacaa 8px 12px,#8c94a0 12px 16px,#acaea8 16px 20px,#b6bcc4 20px 24px)"></div>
<div class="ab" style="left:1248px;top:336px;width:4px;height:4px;background:#fef2e6"></div>
<div class="ab" style="left:1252px;top:336px;width:4px;height:4px;background:#deeaf8"></div>
<div class="ab" style="left:1340px;top:328px;width:28px;height:4px;background:linear-gradient(90deg,#a5afbe 0px 4px,#a5b4c8 4px 8px,#ded8d2 8px 12px,#dce1e1 12px 16px,#b4b9c3 16px 20px,#cdc3c8 20px 24px,#878291 24px 28px)"></div>
<div class="ab" style="left:1340px;top:332px;width:28px;height:4px;background:linear-gradient(90deg,#ebdccd 0px 4px,#d7c8be 4px 8px,#969ba5 8px 12px,#969b91 12px 16px,#969691 16px 20px,#a5b4c8 20px 24px,#b4b9c3 24px 28px)"></div>
<div class="ab" style="left:1348px;top:336px;width:4px;height:4px;background:#fef2e6"></div>
<div class="ab" style="left:1352px;top:336px;width:4px;height:4px;background:#deeaf8"></div>
<div class="ab" style="left:460px;top:360px;width:908px;height:4px;background:#f8f8f8"></div>
<div class="ab" style="left:536px;top:344px;width:4px;height:16px;background:#fafafa"></div>
<div class="ab" style="left:668px;top:344px;width:4px;height:16px;background:#fafafa"></div>
<div class="ab" style="left:768px;top:344px;width:4px;height:16px;background:#fafafa"></div>
<div class="ab" style="left:868px;top:344px;width:4px;height:16px;background:#fafafa"></div>
<div class="ab" style="left:968px;top:344px;width:4px;height:16px;background:#fafafa"></div>
<div class="ab" style="left:1068px;top:344px;width:4px;height:16px;background:#fafafa"></div>
<div class="ab" style="left:1168px;top:344px;width:4px;height:16px;background:#fafafa"></div>
<div class="ab" style="left:1268px;top:344px;width:4px;height:16px;background:#fafafa"></div>
<div class="ab" style="left:484px;top:348px;width:52px;height:4px;background:linear-gradient(90deg,#87828c 0px 4px,#91878c 4px 8px,#96918c 8px 12px,#b9c3d7 12px 16px,#91878c 16px 20px,#cdc3c8 20px 24px,#8c969b 24px 28px,#878291 28px 32px,#969ba5 32px 36px,#91878c 36px 40px,#ebdccd 40px 44px,#787d87 44px 48px,#b9c3d7 48px 52px)"></div>
<div class="ab" style="left:484px;top:352px;width:52px;height:4px;background:linear-gradient(90deg,#969191 0px 4px,#beaaaa 4px 8px,#dce6f0 8px 12px,#aab9d2 12px 16px,#cdc3af 16px 20px,#827364 20px 24px,#ebdccd 24px 28px,#cdc3af 28px 32px,#919696 32px 36px,#787d87 36px 40px,#8791a0 40px 44px,#8791a0 44px 48px,#919696 48px 52px)"></div>
<div class="ab" style="left:516px;top:356px;width:4px;height:4px;background:#fef2e6"></div>
<div class="ab" style="left:520px;top:356px;width:4px;height:4px;background:#deeaf8"></div>
<div class="ab" style="left:616px;top:348px;width:52px;height:4px;background:linear-gradient(90deg,#c8b9a0 0px 4px,#8c969b 4px 8px,#d2b9af 8px 12px,#969191 12px 16px,#aab9d2 16px 20px,#b4b9c3 20px 24px,#969ba5 24px 28px,#dce6f0 28px 32px,#d7c8be 32px 36px,#e1d7d2 36px 40px,#a0a5af 40px 44px,#829baa 44px 48px,#a5afbe 48px 52px)"></div>
<div class="ab" style="left:616px;top:352px;width:52px;height:4px;background:linear-gradient(90deg,#8c969b 0px 4px,#a5aab4 4px 8px,#cdc3af 8px 12px,#a5aab4 12px 16px,#aaaaa5 16px 20px,#cdc3c8 20px 24px,#91878c 24px 28px,#dcd7d2 28px 32px,#91878c 32px 36px,#ded8d2 36px 40px,#c8b9a0 40px 44px,#a5afbe 44px 48px,#cdc3af 48px 52px)"></div>
<div class="ab" style="left:648px;top:356px;width:4px;height:4px;background:#fef2e6"></div>
<div class="ab" style="left:652px;top:356px;width:4px;height:4px;background:#deeaf8"></div>
<div class="ab" style="left:740px;top:348px;width:28px;height:4px;background:linear-gradient(90deg,#a0a09b 0px 4px,#dce1e1 4px 8px,#829baa 8px 12px,#969691 12px 16px,#ded8d2 16px 20px,#e6e1dc 20px 24px,#dce6f0 24px 28px)"></div>
<div class="ab" style="left:740px;top:352px;width:28px;height:4px;background:linear-gradient(90deg,#969691 0px 4px,#829baa 4px 8px,#96968c 8px 12px,#e6e1dc 12px 16px,#969191 16px 20px,#969b91 20px 24px,#96918c 24px 28px)"></div>
<div class="ab" style="left:748px;top:356px;width:4px;height:4px;background:#fef2e6"></div>
<div class="ab" style="left:752px;top:356px;width:4px;height:4px;background:#deeaf8"></div>
<div class="ab" style="left:840px;top:348px;width:28px;height:4px;background:linear-gradient(90deg,#d2b9af 0px 4px,#829baa 4px 8px,#87828c 8px 12px,#aab9d2 12px 16px,#787d87 16px 20px,#787d87 20px 24px,#cdc3c8 24px 28px)"></div>
<div class="ab" style="left:840px;top:352px;width:28px;height:4px;background:linear-gradient(90deg,#e6e1dc 0px 4px,#96968c 4px 8px,#8791a0 8px 12px,#cdc3c8 12px 16px,#9b9b96 16px 20px,#9b9b96 20px 24px,#87828c 24px 28px)"></div>
<div class="ab" style="left:848px;top:356px;width:4px;height:4px;background:#fef2e6"></div>
<div class="ab" style="left:852px;top:356px;width:4px;height:4px;background:#deeaf8"></div>
<div class="ab" style="left:944px;top:348px;width:24px;height:4px;background:linear-gradient(90deg,#b2aca8 0px 4px,#b4bac0 4px 8px,#e4d6ca 8px 12px,#8c94a0 12px 16px,#acaea8 16px 20px,#b6bcc4 20px 24px)"></div>
<div class="ab" style="left:944px;top:352px;width:24px;height:4px;background:linear-gradient(90deg,#b2aca8 0px 4px,#b4bab8 4px 8px,#bcacaa 8px 12px,#8c94a0 12px 16px,#acaea8 16px 20px,#b6bcc4 20px 24px)"></div>
<div class="ab" style="left:948px;top:356px;width:4px;height:4px;background:#fef2e6"></div>
<div class="ab" style="left:952px;top:356px;width:4px;height:4px;background:#deeaf8"></div>
<div class="ab" style="left:1044px;top:348px;width:24px;height:4px;background:linear-gradient(90deg,#b2aca8 0px 4px,#b4bac0 4px 8px,#e4d6ca 8px 12px,#8c94a0 12px 16px,#acaea8 16px 20px,#b6bcc4 20px 24px)"></div>
<div class="ab" style="left:1044px;top:352px;width:24px;height:4px;background:linear-gradient(90deg,#b2aca8 0px 4px,#b4bab8 4px 8px,#bcacaa 8px 12px,#8c94a0 12px 16px,#acaea8 16px 20px,#b6bcc4 20px 24px)"></div>
<div class="ab" style="left:1048px;top:356px;width:4px;height:4px;background:#fef2e6"></div>
<div class="ab" style="left:1052px;top:356px;width:4px;height:4px;background:#deeaf8"></div>
<div class="ab" style="left:1144px;top:348px;width:24px;height:4px;background:linear-gradient(90deg,#b2aca8 0px 4px,#b4bac0 4px 8px,#e4d6ca 8px 12px,#8c94a0 12px 16px,#acaea8 16px 20px,#b6bcc4 20px 24px)"></div>
<div class="ab" style="left:1144px;top:352px;width:24px;height:4px;background:linear-gradient(90deg,#b2aca8 0px 4px,#b4bab8 4px 8px,#bcacaa 8px 12px,#8c94a0 12px 16px,#acaea8 16px 20px,#b6bcc4 20px 24px)"></div>
<div class="ab" style="left:1148px;top:356px;width:4px;height:4px;background:#fef2e6"></div>
<div class="ab" style="left:1152px;top:356px;width:4px;height:4px;background:#deeaf8"></div>
<div class="ab" style="left:1244px;top:348px;width:24px;height:4px;background:linear-gradient(90deg,#b2aca8 0px 4px,#b4bac0 4px 8px,#e4d6ca 8px 12px,#8c94a0 12px 16px,#acaea8 16px 20px,#b6bcc4 20px 24px)"></div>
<div class="ab" style="left:1244px;top:352px;width:24px;height:4px;background:linear-gradient(90deg,#b2aca8 0px 4px,#b4bab8 4px 8px,#bcacaa 8px 12px,#8c94a0 12px 16px,#acaea8 16px 20px,#b6bcc4 20px 24px)"></div>
<div class="ab" style="left:1248px;top:356px;width:4px;height:4px;background:#fef2e6"></div>
<div class="ab" style="left:1252px;top:356px;width:4px;height:4px;background:#deeaf8"></div>
<div class="ab" style="left:1340px;top:348px;width:28px;height:4px;background:linear-gradient(90deg,#96918c 0px 4px,#96968c 4px 8px,#a0a5af 8px 12px,#96918c 12px 16px,#cdc3af 16px 20px,#d7c8be 20px 24px,#a5b4c8 24px 28px)"></div>
<div class="ab" style="left:1340px;top:352px;width:28px;height:4px;background:linear-gradient(90deg,#aaaaa5 0px 4px,#e1d7d2 4px 8px,#b9c3d7 8px 12px,#969b91 12px 16px,#96918c 16px 20px,#cdc3c8 20px 24px,#787d87 24px 28px)"></div>
<div class="ab" style="left:1348px;top:356px;width:4px;height:4px;background:#fef2e6"></div>
<div class="ab" style="left:1352px;top:356px;width:4px;height:4px;background:#deeaf8"></div>
<div class="ab" style="left:460px;top:380px;width:908px;height:4px;background:#f8f8f8"></div>
<div class="ab" style="left:536px;top:364px;width:4px;height:16px;background:#fafafa"></div>
<div class="ab" style="left:668px;top:364px;width:4px;height:16px;background:#fafafa"></div>
<div class="ab" style="left:768px;top:364px;width:4px;height:16px;background:#fafafa"></div>
<div class="ab" style="left:868px;top:364px;width:4px;height:16px;background:#fafafa"></div>
<div class="ab" style="left:968px;top:364px;width:4px;height:16px;background:#fafafa"></div>
<div class="ab" style="left:1068px;top:364px;width:4px;height:16px;background:#fafafa"></div>
<div class="ab" style="left:1168px;top:364px;width:4px;height:16px;background:#fafafa"></div>
<div class="ab" style="left:1268px;top:364px;width:4px;height:16px;background:#fafafa"></div>
<div class="ab" style="left:512px;top:368px;width:24px;height:4px;background:linear-gradient(90deg,#b2aca8 0px 4px,#b4bac0 4px 8px,#e4d6ca 8px 12px,#8c94a0 12px 16px,#acaea8 16px 20px,#b6bcc4 20px 24px)"></div>
<div class="ab" style="left:512px;top:372px;width:24px;height:4px;background:linear-gradient(90deg,#b2aca8 0px 4px,#b4bab8 4px 8px,#bcacaa 8px 12px,#8c94a0 12px 16px,#acaea8 16px 20px,#b6bcc4 20px 24px)"></div>
<div class="ab" style="left:516px;top:376px;width:4px;height:4px;background:#fef2e6"></div>
<div class="ab" style="left:520px;top:376px;width:4px;height:4px;background:#deeaf8"></div>
<div class="ab" style="left:616px;top:368px;width:52px;height:4px;background:linear-gradient(90deg,#dce1e1 0px 4px,#a5b4c8 4px 8px,#dce6f0 8px 12px,#969691 12px 16px,#ebdccd 16px 20px,#91878c 20px 24px,#829baa 24px 28px,#91878c 28px 32px,#829baa 32px 36px,#e1d7d2 36px 40px,#e6e1dc 40px 44px,#cdc3af 44px 48px,#dce1e1 48px 52px)"></div>
<div class="ab" style="left:616px;top:372px;width:52px;height:4px;background:linear-gradient(90deg,#dce6f0 0px 4px,#beaaaa 4px 8px,#a5aab4 8px 12px,#a0a5af 12px 16px,#aaaaa5 16px 20px,#dce6f0 20px 24px,#969691 24px 28px,#919696 28px 32px,#8c9196 32px 36px,#969ba5 36px 40px,#919696 40px 44px,#969b91 44px 48px,#9b96a0 48px 52px)"></div>
<div class="ab" style="left:648px;top:376px;width:4px;height:4px;background:#fef2e6"></div>
<div class="ab" style="left:652px;top:376px;width:4px;height:4px;background:#deeaf8"></div>
<div class="ab" style="left:744px;top:368px;width:24px;height:4px;background:linear-gradient(90deg,#b2aca8 0px 4px,#b4bac0 4px 8px,#e4d6ca 8px 12px,#8c94a0 12px 16px,#acaea8 16px 20px,#b6bcc4 20px 24px)"></div>
<div class="ab" style="left:744px;top:372px;width:24px;height:4px;background:linear-gradient(90deg,#b2aca8 0px 4px,#b4bab8 4px 8px,#bcacaa 8px 12px,#8c94a0 12px 16px,#acaea8 16px 20px,#b6bcc4 20px 24px)"></div>
<div class="ab" style="left:748px;top:376px;width:4px;height:4px;background:#fef2e6"></div>
<div class="ab" style="left:752px;top:376px;width:4px;height:4px;background:#deeaf8"></div>
<div class="ab" style="left:844px;top:368px;width:24px;height:4px;background:linear-gradient(90deg,#b2aca8 0px 4px,#b4bac0 4px 8px,#e4d6ca 8px 12px,#8c94a0 12px 16px,#acaea8 16px 20px,#b6bcc4 20px 24px)"></div>
<div class="ab" style="left:844px;top:372px;width:24px;height:4px;background:linear-gradient(90deg,#b2aca8 0px 4px,#b4bab8 4px 8px,#bcacaa 8px 12px,#8c94a0 12px 16px,#acaea8 16px 20px,#b6bcc4 20px 24px)"></div>
<div class="ab" style="left:848px;top:376px;width:4px;height:4px;background:#fef2e6"></div>
<div class="ab" style="left:852px;top:376px;width:4px;height:4px;background:#deeaf8"></div>
<div class="ab" style="left:944px;top:368px;width:24px;height:4px;background:linear-gradient(90deg,#b2aca8 0px 4px,#b4bac0 4px 8px,#e4d6ca 8px 12px,#8c94a0 12px 16px,#acaea8 16px 20px,#b6bcc4 20px 24px)"></div>
<div class="ab" style="left:944px;top:372px;width:24px;height:4px;background:linear-gradient(90deg,#b2aca8 0px 4px,#b4bab8 4px 8px,#bcacaa 8px 12px,#8c94a0 12px 16px,#acaea8 16px 20px,#b6bcc4 20px 24px)"></div>
<div class="ab" style="left:948px;top:376px;width:4px;height:4px;background:#fef2e6"></div>
<div class="ab" style="left:952px;top:376px;width:4px;height:4px;background:#deeaf8"></div>
<div class="ab" style="left:1044px;top:368px;width:24px;height:4px;background:linear-gradient(90deg,#b2aca8 0px 4px,#b4bac0 4px 8px,#e4d6ca 8px 12px,#8c94a0 12px 16px,#acaea8 16px 20px,#b6bcc4 20px 24px)"></div>
<div class="ab" style="left:1044px;top:372px;width:24px;height:4px;background:linear-gradient(90deg,#b2aca8 0px 4px,#b4bab8 4px 8px,#bcacaa 8px 12px,#8c94a0 12px 16px,#acaea8 16px 20px,#b6bcc4 20px 24px)"></div>
<div class="ab" style="left:1048px;top:376px;width:4px;height:4px;background:#fef2e6"></div>
<div class="ab" style="left:1052px;top:376px;width:4px;height:4px;background:#deeaf8"></div>
<div class="ab" style="left:1144px;top:368px;width:24px;height:4px;background:linear-gradient(90deg,#b2aca8 0px 4px,#b4bac0 4px 8px,#e4d6ca 8px 12px,#8c94a0 12px 16px,#acaea8 16px 20px,#b6bcc4 20px 24px)"></div>
<div class="ab" style="left:1144px;top:372px;width:24px;height:4px;background:linear-gradient(90deg,#b2aca8 0px 4px,#b4bab8 4px 8px,#bcacaa 8px 12px,#8c94a0 12px 16px,#acaea8 16px 20px,#b6bcc4 20px 24px)"></div>
<div class="ab" style="left:1148px;top:376px;width:4px;height:4px;background:#fef2e6"></div>
<div class="ab" style="left:1152px;top:376px;width:4px;height:4px;background:#deeaf8"></div>
<div class="ab" style="left:1244px;top:368px;width:24px;height:4px;background:linear-gradient(90deg,#b2aca8 0px 4px,#b4bac0 4px 8px,#e4d6ca 8px 12px,#8c94a0 12px 16px,#acaea8 16px 20px,#b6bcc4 20px 24px)"></div>
<div class="ab" style="left:1244px;top:372px;width:24px;height:4px;background:linear-gradient(90deg,#b2aca8 0px 4px,#b4bab8 4px 8px,#bcacaa 8px 12px,#8c94a0 12px 16px,#acaea8 16px 20px,#b6bcc4 20px 24px)"></div>
<div class="ab" style="left:1248px;top:376px;width:4px;height:4px;background:#fef2e6"></div>
<div class="ab" style="left:1252px;top:376px;width:4px;height:4px;background:#deeaf8"></div>
<div class="ab" style="left:1344px;top:368px;width:24px;height:4px;background:linear-gradient(90deg,#b2aca8 0px 4px,#b4bac0 4px 8px,#e4d6ca 8px 12px,#8c94a0 12px 16px,#acaea8 16px 20px,#b6bcc4 20px 24px)"></div>
<div class="ab" style="left:1344px;top:372px;width:24px;height:4px;background:linear-gradient(90deg,#b2aca8 0px 4px,#b4bab8 4px 8px,#bcacaa 8px 12px,#8c94a0 12px 16px,#acaea8 16px 20px,#b6bcc4 20px 24px)"></div>
<div class="ab" style="left:1348px;top:376px;width:4px;height:4px;background:#fef2e6"></div>
<div class="ab" style="left:1352px;top:376px;width:4px;height:4px;background:#deeaf8"></div>
<div class="ab" style="left:460px;top:400px;width:908px;height:4px;background:#f8f8f8"></div>
<div class="ab" style="left:536px;top:384px;width:4px;height:16px;background:#fafafa"></div>
<div class="ab" style="left:668px;top:384px;width:4px;height:16px;background:#fafafa"></div>
<div class="ab" style="left:768px;top:384px;width:4px;height:16px;background:#fafafa"></div>
<div class="ab" style="left:868px;top:384px;width:4px;height:16px;background:#fafafa"></div>
<div class="ab" style="left:968px;top:384px;width:4px;height:16px;background:#fafafa"></div>
<div class="ab" style="left:1068px;top:384px;width:4px;height:16px;background:#fafafa"></div>
<div class="ab" style="left:1168px;top:384px;width:4px;height:16px;background:#fafafa"></div>
<div class="ab" style="left:1268px;top:384px;width:4px;height:16px;background:#fafafa"></div>
<div class="ab" style="left:512px;top:388px;width:24px;height:4px;background:linear-gradient(90deg,#b2aca8 0px 4px,#b4bac0 4px 8px,#e4d6ca 8px 12px,#8c94a0 12px 16px,#acaea8 16px 20px,#b6bcc4 20px 24px)"></div>
<div class="ab" style="left:512px;top:392px;width:24px;height:4px;background:linear-gradient(90deg,#b2aca8 0px 4px,#b4bab8 4px 8px,#bcacaa 8px 12px,#8c94a0 12px 16px,#acaea8 16px 20px,#b6bcc4 20px 24px)"></div>
<div class="ab" style="left:516px;top:396px;width:4px;height:4px;background:#fef2e6"></div>
<div class="ab" style="left:520px;top:396px;width:4px;height:4px;background:#deeaf8"></div>
<div class="ab" style="left:616px;top:388px;width:52px;height:4px;background:linear-gradient(90deg,#b9c3d7 0px 4px,#dce6f0 4px 8px,#d7c8be 8px 12px,#969191 12px 16px,#878291 16px 20px,#d2b9af 20px 24px,#a5aab4 24px 28px,#dce1e1 28px 32px,#8c969b 32px 36px,#a5aab4 36px 40px,#dcd7d2 40px 44px,#9b96a0 44px 48px,#a0a5af 48px 52px)"></div>
<div class="ab" style="left:616px;top:392px;width:52px;height:4px;background:linear-gradient(90deg,#c8b9a0 0px 4px,#ded8d2 4px 8px,#aaafaf 8px 12px,#b9c3d7 12px 16px,#aaaaa5 16px 20px,#919696 20px 24px,#969ba5 24px 28px,#919696 28px 32px,#969ba5 32px 36px,#787d87 36px 40px,#9b96a0 40px 44px,#e6e1dc 44px 48px,#e6e1dc 48px 52px)"></div>
<div class="ab" style="left:648px;top:396px;width:4px;height:4px;background:#fef2e6"></div>
<div class="ab" style="left:652px;top:396px;width:4px;height:4px;background:#deeaf8"></div>
<div class="ab" style="left:744px;top:388px;width:24px;height:4px;background:linear-gradient(90deg,#b2aca8 0px 4px,#b4bac0 4px 8px,#e4d6ca 8px 12px,#8c94a0 12px 16px,#acaea8 16px 20px,#b6bcc4 20px 24px)"></div>
<div class="ab" style="left:744px;top:392px;width:24px;height:4px;background:linear-gradient(90deg,#b2aca8 0px 4px,#b4bab8 4px 8px,#bcacaa 8px 12px,#8c94a0 12px 16px,#acaea8 16px 20px,#b6bcc4 20px 24px)"></div>
<div class="ab" style="left:748px;top:396px;width:4px;height:4px;background:#fef2e6"></div>
<div class="ab" style="left:752px;top:396px;width:4px;height:4px;background:#deeaf8"></div>
<div class="ab" style="left:844px;top:388px;width:24px;height:4px;background:linear-gradient(90deg,#b2aca8 0px 4px,#b4bac0 4px 8px,#e4d6ca 8px 12px,#8c94a0 12px 16px,#acaea8 16px 20px,#b6bcc4 20px 24px)"></div>
<div class="ab" style="left:844px;top:392px;width:24px;height:4px;background:linear-gradient(90deg,#b2aca8 0px 4px,#b4bab8 4px 8px,#bcacaa 8px 12px,#8c94a0 12px 16px,#acaea8 16px 20px,#b6bcc4 20px 24px)"></div>
<div class="ab" style="left:848px;top:396px;width:4px;height:4px;background:#fef2e6"></div>
<div class="ab" style="left:852px;top:396px;width:4px;height:4px;background:#deeaf8"></div>
<div class="ab" style="left:944px;top:388px;width:24px;height:4px;background:linear-gradient(90deg,#b2aca8 0px 4px,#b4bac0 4px 8px,#e4d6ca 8px 12px,#8c94a0 12px 16px,#acaea8 16px 20px,#b6bcc4 20px 24px)"></div>
<div class="ab" style="left:944px;top:392px;width:24px;height:4px;background:linear-gradient(90deg,#b2aca8 0px 4px,#b4bab8 4px 8px,#bcacaa 8px 12px,#8c94a0 12px 16px,#acaea8 16px 20px,#b6bcc4 20px 24px)"></div>
<div class="ab" style="left:948px;top:396px;width:4px;height:4px;background:#fef2e6"></div>
<div class="ab" style="left:952px;top:396px;width:4px;height:4px;background:#deeaf8"></div>
<div class="ab" style="left:1044px;top:388px;width:24px;height:4px;background:linear-gradient(90deg,#b2aca8 0px 4px,#b4bac0 4px 8px,#e4d6ca 8px 12px,#8c94a0 12px 16px,#acaea8 16px 20px,#b6bcc4 20px 24px)"></div>
<div class="ab" style="left:1044px;top:392px;width:24px;height:4px;background:linear-gradient(90deg,#b2aca8 0px 4px,#b4bab8 4px 8px,#bcacaa 8px 12px,#8c94a0 12px 16px,#acaea8 16px 20px,#b6bcc4 20px 24px)"></div>
<div class="ab" style="left:1048px;top:396px;width:4px;height:4px;background:#fef2e6"></div>
<div class="ab" style="left:1052px;top:396px;width:4px;height:4px;background:#deeaf8"></div>
<div class="ab" style="left:1144px;top:388px;width:24px;height:4px;background:linear-gradient(90deg,#b2aca8 0px 4px,#b4bac0 4px 8px,#e4d6ca 8px 12px,#8c94a0 12px 16px,#acaea8 16px 20px,#b6bcc4 20px 24px)"></div>
<div class="ab" style="left:1144px;top:392px;width:24px;height:4px;background:linear-gradient(90deg,#b2aca8 0px 4px,#b4bab8 4px 8px,#bcacaa 8px 12px,#8c94a0 12px 16px,#acaea8 16px 20px,#b6bcc4 20px 24px)"></div>
<div class="ab" style="left:1148px;top:396px;width:4px;height:4px;background:#fef2e6"></div>
<div class="ab" style="left:1152px;top:396px;width:4px;height:4px;background:#deeaf8"></div>
<div class="ab" style="left:1244px;top:388px;width:24px;height:4px;background:linear-gradient(90deg,#b2aca8 0px 4px,#b4bac0 4px 8px,#e4d6ca 8px 12px,#8c94a0 12px 16px,#acaea8 16px 20px,#b6bcc4 20px 24px)"></div>
<div class="ab" style="left:1244px;top:392px;width:24px;height:4px;background:linear-gradient(90deg,#b2aca8 0px 4px,#b4bab8 4px 8px,#bcacaa 8px 12px,#8c94a0 12px 16px,#acaea8 16px 20px,#b6bcc4 20px 24px)"></div>
<div class="ab" style="left:1248px;top:396px;width:4px;height:4px;background:#fef2e6"></div>
<div class="ab" style="left:1252px;top:396px;width:4px;height:4px;background:#deeaf8"></div>
<div class="ab" style="left:1344px;top:388px;width:24px;height:4px;background:linear-gradient(90deg,#b2aca8 0px 4px,#b4bac0 4px 8px,#e4d6ca 8px 12px,#8c94a0 12px 16px,#acaea8 16px 20px,#b6bcc4 20px 24px)"></div>
<div class="ab" style="left:1344px;top:392px;width:24px;height:4px;background:linear-gradient(90deg,#b2aca8 0px 4px,#b4bab8 4px 8px,#bcacaa 8px 12px,#8c94a0 12px 16px,#acaea8 16px 20px,#b6bcc4 20px 24px)"></div>
<div class="ab" style="left:1348px;top:396px;width:4px;height:4px;background:#fef2e6"></div>
<div class="ab" style="left:1352px;top:396px;width:4px;height:4px;background:#deeaf8"></div>
<div class="ab" style="left:460px;top:420px;width:908px;height:4px;background:#f8f8f8"></div>
<div class="ab" style="left:536px;top:404px;width:4px;height:16px;background:#fafafa"></div>
<div class="ab" style="left:668px;top:404px;width:4px;height:16px;background:#fafafa"></div>
<div class="ab" style="left:768px;top:404px;width:4px;height:16px;background:#fafafa"></div>
<div class="ab" style="left:868px;top:404px;width:4px;height:16px;background:#fafafa"></div>
<div class="ab" style="left:968px;top:404px;width:4px;height:16px;background:#fafafa"></div>
<div class="ab" style="left:1068px;top:404px;width:4px;height:16px;background:#fafafa"></div>
<div class="ab" style="left:1168px;top:404px;width:4px;height:16px;background:#fafafa"></div>
<div class="ab" style="left:1268px;top:404px;width:4px;height:16px;background:#fafafa"></div>
<div class="ab" style="left:512px;top:408px;width:24px;height:4px;background:linear-gradient(90deg,#b2aca8 0px 4px,#b4bac0 4px 8px,#e4d6ca 8px 12px,#8c94a0 12px 16px,#acaea8 16px 20px,#b6bcc4 20px 24px)"></div>
<div class="ab" style="left:512px;top:412px;width:24px;height:4px;background:linear-gradient(90deg,#b2aca8 0px 4px,#b4bab8 4px 8px,#bcacaa 8px 12px,#8c94a0 12px 16px,#acaea8 16px 20px,#b6bcc4 20px 24px)"></div>
<div class="ab" style="left:516px;top:416px;width:4px;height:4px;background:#fef2e6"></div>
<div class="ab" style="left:520px;top:416px;width:4px;height:4px;background:#deeaf8"></div>
<div class="ab" style="left:616px;top:408px;width:52px;height:4px;background:linear-gradient(90deg,#9b96a0 0px 4px,#dce6f0 4px 8px,#ebdccd 8px 12px,#829baa 12px 16px,#b9c6e1 16px 20px,#dce1e1 20px 24px,#829baa 24px 28px,#969691 28px 32px,#a0a5af 32px 36px,#a0a09b 36px 40px,#e6e1dc 40px 44px,#969191 44px 48px,#96968c 48px 52px)"></div>
<div class="ab" style="left:616px;top:412px;width:52px;height:4px;background:linear-gradient(90deg,#96918c 0px 4px,#827364 4px 8px,#b4b9c3 8px 12px,#e1d7d2 12px 16px,#beaaaa 16px 20px,#cdc3af 20px 24px,#b9c3d7 24px 28px,#969b91 28px 32px,#aab9d2 32px 36px,#96918c 36px 40px,#aaaaa5 40px 44px,#e1d7d2 44px 48px,#969691 48px 52px)"></div>
<div class="ab" style="left:648px;top:416px;width:4px;height:4px;background:#fef2e6"></div>
<div class="ab" style="left:652px;top:416px;width:4px;height:4px;background:#deeaf8"></div>
<div class="ab" style="left:744px;top:408px;width:24px;height:4px;background:linear-gradient(90deg,#b2aca8 0px 4px,#b4bac0 4px 8px,#e4d6ca 8px 12px,#8c94a0 12px 16px,#acaea8 16px 20px,#b6bcc4 20px 24px)"></div>
<div class="ab" style="left:744px;top:412px;width:24px;height:4px;background:linear-gradient(90deg,#b2aca8 0px 4px,#b4bab8 4px 8px,#bcacaa 8px 12px,#8c94a0 12px 16px,#acaea8 16px 20px,#b6bcc4 20px 24px)"></div>
<div class="ab" style="left:748px;top:416px;width:4px;height:4px;background:#fef2e6"></div>
<div class="ab" style="left:752px;top:416px;width:4px;height:4px;background:#deeaf8"></div>
<div class="ab" style="left:844px;top:408px;width:24px;height:4px;background:linear-gradient(90deg,#b2aca8 0px 4px,#b4bac0 4px 8px,#e4d6ca 8px 12px,#8c94a0 12px 16px,#acaea8 16px 20px,#b6bcc4 20px 24px)"></div>
<div class="ab" style="left:844px;top:412px;width:24px;height:4px;background:linear-gradient(90deg,#b2aca8 0px 4px,#b4bab8 4px 8px,#bcacaa 8px 12px,#8c94a0 12px 16px,#acaea8 16px 20px,#b6bcc4 20px 24px)"></div>
<div class="ab" style="left:848px;top:416px;width:4px;height:4px;background:#fef2e6"></div>
<div class="ab" style="left:852px;top:416px;width:4px;height:4px;background:#deeaf8"></div>
<div class="ab" style="left:944px;top:408px;width:24px;height:4px;background:linear-gradient(90deg,#b2aca8 0px 4px,#b4bac0 4px 8px,#e4d6ca 8px 12px,#8c94a0 12px 16px,#acaea8 16px 20px,#b6bcc4 20px 24px)"></div>
<div class="ab" style="left:944px;top:412px;width:24px;height:4px;background:linear-gradient(90deg,#b2aca8 0px 4px,#b4bab8 4px 8px,#bcacaa 8px 12px,#8c94a0 12px 16px,#acaea8 16px 20px,#b6bcc4 20px 24px)"></div>
<div class="ab" style="left:948px;top:416px;width:4px;height:4px;background:#fef2e6"></div>
<div class="ab" style="left:952px;top:416px;width:4px;height:4px;background:#deeaf8"></div>
<div class="ab" style="left:1044px;top:408px;width:24px;height:4px;background:linear-gradient(90deg,#b2aca8 0px 4px,#b4bac0 4px 8px,#e4d6ca 8px 12px,#8c94a0 12px 16px,#acaea8 16px 20px,#b6bcc4 20px 24px)"></div>
<div class="ab" style="left:1044px;top:412px;width:24px;height:4px;background:linear-gradient(90deg,#b2aca8 0px 4px,#b4bab8 4px 8px,#bcacaa 8px 12px,#8c94a0 12px 16px,#acaea8 16px 20px,#b6bcc4 20px 24px)"></div>
<div class="ab" style="left:1048px;top:416px;width:4px;height:4px;background:#fef2e6"></div>
<div class="ab" style="left:1052px;top:416px;width:4px;height:4px;background:#deeaf8"></div>
<div class="ab" style="left:1144px;top:408px;width:24px;height:4px;background:linear-gradient(90deg,#b2aca8 0px 4px,#b4bac0 4px 8px,#e4d6ca 8px 12px,#8c94a0 12px 16px,#acaea8 16px 20px,#b6bcc4 20px 24px)"></div>
<div class="ab" style="left:1144px;top:412px;width:24px;height:4px;background:linear-gradient(90deg,#b2aca8 0px 4px,#b4bab8 4px 8px,#bcacaa 8px 12px,#8c94a0 12px 16px,#acaea8 16px 20px,#b6bcc4 20px 24px)"></div>
<div class="ab" style="left:1148px;top:416px;width:4px;height:4px;background:#fef2e6"></div>
<div class="ab" style="left:1152px;top:416px;width:4px;height:4px;background:#deeaf8"></div>
<div class="ab" style="left:1244px;top:408px;width:24px;height:4px;background:linear-gradient(90deg,#b2aca8 0px 4px,#b4bac0 4px 8px,#e4d6ca 8px 12px,#8c94a0 12px 16px,#acaea8 16px 20px,#b6bcc4 20px 24px)"></div>
<div class="ab" style="left:1244px;top:412px;width:24px;height:4px;background:linear-gradient(90deg,#b2aca8 0px 4px,#b4bab8 4px 8px,#bcacaa 8px 12px,#8c94a0 12px 16px,#acaea8 16px 20px,#b6bcc4 20px 24px)"></div>
<div class="ab" style="left:1248px;top:416px;width:4px;height:4px;background:#fef2e6"></div>
<div class="ab" style="left:1252px;top:416px;width:4px;height:4px;background:#deeaf8"></div>
<div class="ab" style="left:1344px;top:408px;width:24px;height:4px;background:linear-gradient(90deg,#b2aca8 0px 4px,#b4bac0 4px 8px,#e4d6ca 8px 12px,#8c94a0 12px 16px,#acaea8 16px 20px,#b6bcc4 20px 24px)"></div>
<div class="ab" style="left:1344px;top:412px;width:24px;height:4px;background:linear-gradient(90deg,#b2aca8 0px 4px,#b4bab8 4px 8px,#bcacaa 8px 12px,#8c94a0 12px 16px,#acaea8 16px 20px,#b6bcc4 20px 24px)"></div>
<div class="ab" style="left:1348px;top:416px;width:4px;height:4px;background:#fef2e6"></div>
<div class="ab" style="left:1352px;top:416px;width:4px;height:4px;background:#deeaf8"></div>
<div class="ab" style="left:460px;top:440px;width:908px;height:4px;background:#f8f8f8"></div>
<div class="ab" style="left:536px;top:424px;width:4px;height:16px;background:#fafafa"></div>
<div class="ab" style="left:668px;top:424px;width:4px;height:16px;background:#fafafa"></div>
<div class="ab" style="left:768px;top:424px;width:4px;height:16px;background:#fafafa"></div>
<div class="ab" style="left:868px;top:424px;width:4px;height:16px;background:#fafafa"></div>
<div class="ab" style="left:968px;top:424px;width:4px;height:16px;background:#fafafa"></div>
<div class="ab" style="left:1068px;top:424px;width:4px;height:16px;background:#fafafa"></div>
<div class="ab" style="left:1168px;top:424px;width:4px;height:16px;background:#fafafa"></div>
<div class="ab" style="left:1268px;top:424px;width:4px;height:16px;background:#fafafa"></div>
<div class="ab" style="left:512px;top:428px;width:24px;height:4px;background:linear-gradient(90deg,#b2aca8 0px 4px,#b4bac0 4px 8px,#e4d6ca 8px 12px,#8c94a0 12px 16px,#acaea8 16px 20px,#b6bcc4 20px 24px)"></div>
<div class="ab" style="left:512px;top:432px;width:24px;height:4px;background:linear-gradient(90deg,#b2aca8 0px 4px,#b4bab8 4px 8px,#bcacaa 8px 12px,#8c94a0 12px 16px,#acaea8 16px 20px,#b6bcc4 20px 24px)"></div>
<div class="ab" style="left:516px;top:436px;width:4px;height:4px;background:#fef2e6"></div>
<div class="ab" style="left:520px;top:436px;width:4px;height:4px;background:#deeaf8"></div>
<div class="ab" style="left:624px;top:428px;width:44px;height:4px;background:linear-gradient(90deg,#787d87 0px 4px,#d7c8be 4px 8px,#d2b9af 8px 12px,#e6e1dc 12px 16px,#878291 16px 20px,#a5afbe 20px 24px,#827364 24px 28px,#a5aab4 28px 32px,#827364 32px 36px,#a0a09b 36px 40px,#919696 40px 44px)"></div>
<div class="ab" style="left:624px;top:432px;width:44px;height:4px;background:linear-gradient(90deg,#b4b9c3 0px 4px,#8c9196 4px 8px,#a5b4c8 8px 12px,#beaaaa 12px 16px,#91878c 16px 20px,#d2b9af 20px 24px,#b4b9c3 24px 28px,#96918c 28px 32px,#9b9b96 32px 36px,#a5afbe 36px 40px,#e6e1dc 40px 44px)"></div>
<div class="ab" style="left:648px;top:436px;width:4px;height:4px;background:#fef2e6"></div>
<div class="ab" style="left:652px;top:436px;width:4px;height:4px;background:#deeaf8"></div>
<div class="ab" style="left:744px;top:428px;width:24px;height:4px;background:linear-gradient(90deg,#b2aca8 0px 4px,#b4bac0 4px 8px,#e4d6ca 8px 12px,#8c94a0 12px 16px,#acaea8 16px 20px,#b6bcc4 20px 24px)"></div>
<div class="ab" style="left:744px;top:432px;width:24px;height:4px;background:linear-gradient(90deg,#b2aca8 0px 4px,#b4bab8 4px 8px,#bcacaa 8px 12px,#8c94a0 12px 16px,#acaea8 16px 20px,#b6bcc4 20px 24px)"></div>
<div class="ab" style="left:748px;top:436px;width:4px;height:4px;background:#fef2e6"></div>
<div class="ab" style="left:752px;top:436px;width:4px;height:4px;background:#deeaf8"></div>
<div class="ab" style="left:844px;top:428px;width:24px;height:4px;background:linear-gradient(90deg,#b2aca8 0px 4px,#b4bac0 4px 8px,#e4d6ca 8px 12px,#8c94a0 12px 16px,#acaea8 16px 20px,#b6bcc4 20px 24px)"></div>
<div class="ab" style="left:844px;top:432px;width:24px;height:4px;background:linear-gradient(90deg,#b2aca8 0px 4px,#b4bab8 4px 8px,#bcacaa 8px 12px,#8c94a0 12px 16px,#acaea8 16px 20px,#b6bcc4 20px 24px)"></div>
<div class="ab" style="left:848px;top:436px;width:4px;height:4px;background:#fef2e6"></div>
<div class="ab" style="left:852px;top:436px;width:4px;height:4px;background:#deeaf8"></div>
<div class="ab" style="left:944px;top:428px;width:24px;height:4px;background:linear-gradient(90deg,#b2aca8 0px 4px,#b4bac0 4px 8px,#e4d6ca 8px 12px,#8c94a0 12px 16px,#acaea8 16px 20px,#b6bcc4 20px 24px)"></div>
<div class="ab" style="left:944px;top:432px;width:24px;height:4px;background:linear-gradient(90deg,#b2aca8 0px 4px,#b4bab8 4px 8px,#bcacaa 8px 12px,#8c94a0 12px 16px,#acaea8 16px 20px,#b6bcc4 20px 24px)"></div>
<div class="ab" style="left:948px;top:436px;width:4px;height:4px;background:#fef2e6"></div>
<div class="ab" style="left:952px;top:436px;width:4px;height:4px;background:#deeaf8"></div>
<div class="ab" style="left:1044px;top:428px;width:24px;height:4px;background:linear-gradient(90deg,#b2aca8 0px 4px,#b4bac0 4px 8px,#e4d6ca 8px 12px,#8c94a0 12px 16px,#acaea8 16px 20px,#b6bcc4 20px 24px)"></div>
<div class="ab" style="left:1044px;top:432px;width:24px;height:4px;background:linear-gradient(90deg,#b2aca8 0px 4px,#b4bab8 4px 8px,#bcacaa 8px 12px,#8c94a0 12px 16px,#acaea8 16px 20px,#b6bcc4 20px 24px)"></div>
<div class="ab" style="left:1048px;top:436px;width:4px;height:4px;background:#fef2e6"></div>
<div class="ab" style="left:1052px;top:436px;width:4px;height:4px;background:#deeaf8"></div>
<div class="ab" style="left:1144px;top:428px;width:24px;height:4px;background:linear-gradient(90deg,#b2aca8 0px 4px,#b4bac0 4px 8px,#e4d6ca 8px 12px,#8c94a0 12px 16px,#acaea8 16px 20px,#b6bcc4 20px 24px)"></div>
<div class="ab" style="left:1144px;top:432px;width:24px;height:4px;background:linear-gradient(90deg,#b2aca8 0px 4px,#b4bab8 4px 8px,#bcacaa 8px 12px,#8c94a0 12px 16px,#acaea8 16px 20px,#b6bcc4 20px 24px)"></div>
<div class="ab" style="left:1148px;top:436px;width:4px;height:4px;background:#fef2e6"></div>
<div class="ab" style="left:1152px;top:436px;width:4px;height:4px;background:#deeaf8"></div>
<div class="ab" style="left:1244px;top:428px;width:24px;height:4px;background:linear-gradient(90deg,#b2aca8 0px 4px,#b4bac0 4px 8px,#e4d6ca 8px 12px,#8c94a0 12px 16px,#acaea8 16px 20px,#b6bcc4 20px 24px)"></div>
<div class="ab" style="left:1244px;top:432px;width:24px;height:4px;background:linear-gradient(90deg,#b2aca8 0px 4px,#b4bab8 4px 8px,#bcacaa 8px 12px,#8c94a0 12px 16px,#acaea8 16px 20px,#b6bcc4 20px 24px)"></div>
<div class="ab" style="left:1248px;top:436px;width:4px;height:4px;background:#fef2e6"></div>
<div class="ab" style="left:1252px;top:436px;width:4px;height:4px;background:#deeaf8"></div>
<div class="ab" style="left:1344px;top:428px;width:24px;height:4px;background:linear-gradient(90deg,#b2aca8 0px 4px,#b4bac0 4px 8px,#e4d6ca 8px 12px,#8c94a0 12px 16px,#acaea8 16px 20px,#b6bcc4 20px 24px)"></div>
<div class="ab" style="left:1344px;top:432px;width:24px;height:4px;background:linear-gradient(90deg,#b2aca8 0px 4px,#b4bab8 4px 8px,#bcacaa 8px 12px,#8c94a0 12px 16px,#acaea8 16px 20px,#b6bcc4 20px 24px)"></div>
<div class="ab" style="left:1348px;top:436px;width:4px;height:4px;background:#fef2e6"></div>
<div class="ab" style="left:1352px;top:436px;width:4px;height:4px;background:#deeaf8"></div>
<div class="ab" style="left:460px;top:460px;width:908px;height:4px;background:#f8f8f8"></div>
<div class="ab" style="left:536px;top:444px;width:4px;height:16px;background:#fafafa"></div>
<div class="ab" style="left:668px;top:444px;width:4px;height:16px;background:#fafafa"></div>
<div class="ab" style="left:768px;top:444px;width:4px;height:16px;background:#fafafa"></div>
<div class="ab" style="left:868px;top:444px;width:4px;height:16px;background:#fafafa"></div>
<div class="ab" style="left:968px;top:444px;width:4px;height:16px;background:#fafafa"></div>
<div class="ab" style="left:1068px;top:444px;width:4px;height:16px;background:#fafafa"></div>
<div class="ab" style="left:1168px;top:444px;width:4px;height:16px;background:#fafafa"></div>
<div class="ab" style="left:1268px;top:444px;width:4px;height:16px;background:#fafafa"></div>
<div class="ab" style="left:512px;top:448px;width:24px;height:4px;background:linear-gradient(90deg,#b2aca8 0px 4px,#b4bac0 4px 8px,#e4d6ca 8px 12px,#8c94a0 12px 16px,#acaea8 16px 20px,#b6bcc4 20px 24px)"></div>
<div class="ab" style="left:512px;top:452px;width:24px;height:4px;background:linear-gradient(90deg,#b2aca8 0px 4px,#b4bab8 4px 8px,#bcacaa 8px 12px,#8c94a0 12px 16px,#acaea8 16px 20px,#b6bcc4 20px 24px)"></div>
<div class="ab" style="left:516px;top:456px;width:4px;height:4px;background:#fef2e6"></div>
<div class="ab" style="left:520px;top:456px;width:4px;height:4px;background:#deeaf8"></div>
<div class="ab" style="left:624px;top:448px;width:44px;height:4px;background:linear-gradient(90deg,#91878c 0px 4px,#b4b9c3 4px 8px,#dcd7d2 8px 12px,#b4b9c3 12px 16px,#aab9d2 16px 20px,#96918c 20px 24px,#8c9196 24px 28px,#ded8d2 28px 32px,#9b9b96 32px 36px,#b9c3d7 36px 40px,#dce1e1 40px 44px)"></div>
<div class="ab" style="left:624px;top:452px;width:44px;height:4px;background:linear-gradient(90deg,#96968c 0px 4px,#829baa 4px 8px,#b9c3d7 8px 12px,#9b9b96 12px 16px,#9b9b96 16px 20px,#b9c6e1 20px 24px,#96918c 24px 28px,#a0a5af 28px 32px,#a0a5af 32px 36px,#919696 36px 40px,#cdc3af 40px 44px)"></div>
<div class="ab" style="left:648px;top:456px;width:4px;height:4px;background:#fef2e6"></div>
<div class="ab" style="left:652px;top:456px;width:4px;height:4px;background:#deeaf8"></div>
<div class="ab" style="left:744px;top:448px;width:24px;height:4px;background:linear-gradient(90deg,#b2aca8 0px 4px,#b4bac0 4px 8px,#e4d6ca 8px 12px,#8c94a0 12px 16px,#acaea8 16px 20px,#b6bcc4 20px 24px)"></div>
<div class="ab" style="left:744px;top:452px;width:24px;height:4px;background:linear-gradient(90deg,#b2aca8 0px 4px,#b4bab8 4px 8px,#bcacaa 8px 12px,#8c94a0 12px 16px,#acaea8 16px 20px,#b6bcc4 20px 24px)"></div>
<div class="ab" style="left:748px;top:456px;width:4px;height:4px;background:#fef2e6"></div>
<div class="ab" style="left:752px;top:456px;width:4px;height:4px;background:#deeaf8"></div>
<div class="ab" style="left:844px;top:448px;width:24px;height:4px;background:linear-gradient(90deg,#b2aca8 0px 4px,#b4bac0 4px 8px,#e4d6ca 8px 12px,#8c94a0 12px 16px,#acaea8 16px 20px,#b6bcc4 20px 24px)"></div>
<div class="ab" style="left:844px;top:452px;width:24px;height:4px;background:linear-gradient(90deg,#b2aca8 0px 4px,#b4bab8 4px 8px,#bcacaa 8px 12px,#8c94a0 12px 16px,#acaea8 16px 20px,#b6bcc4 20px 24px)"></div>
<div class="ab" style="left:848px;top:456px;width:4px;height:4px;background:#fef2e6"></div>
<div class="ab" style="left:852px;top:456px;width:4px;height:4px;background:#deeaf8"></div>
<div class="ab" style="left:944px;top:448px;width:24px;height:4px;background:linear-gradient(90deg,#b2aca8 0px 4px,#b4bac0 4px 8px,#e4d6ca 8px 12px,#8c94a0 12px 16px,#acaea8 16px 20px,#b6bcc4 20px 24px)"></div>
<div class="ab" style="left:944px;top:452px;width:24px;height:4px;background:linear-gradient(90deg,#b2aca8 0px 4px,#b4bab8 4px 8px,#bcacaa 8px 12px,#8c94a0 12px 16px,#acaea8 16px 20px,#b6bcc4 20px 24px)"></div>
<div class="ab" style="left:948px;top:456px;width:4px;height:4px;background:#fef2e6"></div>
<div class="ab" style="left:952px;top:456px;width:4px;height:4px;background:#deeaf8"></div>
<div class="ab" style="left:1044px;top:448px;width:24px;height:4px;background:linear-gradient(90deg,#b2aca8 0px 4px,#b4bac0 4px 8px,#e4d6ca 8px 12px,#8c94a0 12px 16px,#acaea8 16px 20px,#b6bcc4 20px 24px)"></div>
<div class="ab" style="left:1044px;top:452px;width:24px;height:4px;background:linear-gradient(90deg,#b2aca8 0px 4px,#b4bab8 4px 8px,#bcacaa 8px 12px,#8c94a0 12px 16px,#acaea8 16px 20px,#b6bcc4 20px 24px)"></div>
<div class="ab" style="left:1048px;top:456px;width:4px;height:4px;background:#fef2e6"></div>
<div class="ab" style="left:1052px;top:456px;width:4px;height:4px;background:#deeaf8"></div>
<div class="ab" style="left:1144px;top:448px;width:24px;height:4px;background:linear-gradient(90deg,#b2aca8 0px 4px,#b4bac0 4px 8px,#e4d6ca 8px 12px,#8c94a0 12px 16px,#acaea8 16px 20px,#b6bcc4 20px 24px)"></div>
<div class="ab" style="left:1144px;top:452px;width:24px;height:4px;background:linear-gradient(90deg,#b2aca8 0px 4px,#b4bab8 4px 8px,#bcacaa 8px 12px,#8c94a0 12px 16px,#acaea8 16px 20px,#b6bcc4 20px 24px)"></div>
<div class="ab" style="left:1148px;top:456px;width:4px;height:4px;background:#fef2e6"></div>
<div class="ab" style="left:1152px;top:456px;width:4px;height:4px;background:#deeaf8"></div>
<div class="ab" style="left:1244px;top:448px;width:24px;height:4px;background:linear-gradient(90deg,#b2aca8 0px 4px,#b4bac0 4px 8px,#e4d6ca 8px 12px,#8c94a0 12px 16px,#acaea8 16px 20px,#b6bcc4 20px 24px)"></div>
<div class="ab" style="left:1244px;top:452px;width:24px;height:4px;background:linear-gradient(90deg,#b2aca8 0px 4px,#b4bab8 4px 8px,#bcacaa 8px 12px,#8c94a0 12px 16px,#acaea8 16px 20px,#b6bcc4 20px 24px)"></div>
<div class="ab" style="left:1248px;top:456px;width:4px;height:4px;background:#fef2e6"></div>
<div class="ab" style="left:1252px;top:456px;width:4px;height:4px;background:#deeaf8"></div>
<div class="ab" style="left:1344px;top:448px;width:24px;height:4px;background:linear-gradient(90deg,#b2aca8 0px 4px,#b4bac0 4px 8px,#e4d6ca 8px 12px,#8c94a0 12px 16px,#acaea8 16px 20px,#b6bcc4 20px 24px)"></div>
<div class="ab" style="left:1344px;top:452px;width:24px;height:4px;background:linear-gradient(90deg,#b2aca8 0px 4px,#b4bab8 4px 8px,#bcacaa 8px 12px,#8c94a0 12px 16px,#acaea8 16px 20px,#b6bcc4 20px 24px)"></div>
<div class="ab" style="left:1348px;top:456px;width:4px;height:4px;background:#fef2e6"></div>
<div class="ab" style="left:1352px;top:456px;width:4px;height:4px;background:#deeaf8"></div>
<div class="ab" style="left:460px;top:480px;width:908px;height:4px;background:#f8f8f8"></div>
<div class="ab" style="left:536px;top:464px;width:4px;height:16px;background:#fafafa"></div>
<div class="ab" style="left:668px;top:464px;width:4px;height:16px;background:#fafafa"></div>
<div class="ab" style="left:768px;top:464px;width:4px;height:16px;background:#fafafa"></div>
<div class="ab" style="left:868px;top:464px;width:4px;height:16px;background:#fafafa"></div>
<div class="ab" style="left:968px;top:464px;width:4px;height:16px;background:#fafafa"></div>
<div class="ab" style="left:1068px;top:464px;width:4px;height:16px;background:#fafafa"></div>
<div class="ab" style="left:1168px;top:464px;width:4px;height:16px;background:#fafafa"></div>
<div class="ab" style="left:1268px;top:464px;width:4px;height:16px;background:#fafafa"></div>
<div class="ab" style="left:484px;top:468px;width:52px;height:4px;background:linear-gradient(90deg,#a0a5af 0px 4px,#919696 4px 8px,#e1d7d2 8px 12px,#96968c 12px 16px,#d7c8be 16px 20px,#a0a5af 20px 24px,#c8b9a0 24px 28px,#aab9d2 28px 32px,#8c9196 32px 36px,#aaaaa5 36px 40px,#cdc3af 40px 44px,#b9c3d7 44px 48px,#cdc3c8 48px 52px)"></div>
<div class="ab" style="left:484px;top:472px;width:52px;height:4px;background:linear-gradient(90deg,#beaaaa 0px 4px,#969ba5 4px 8px,#b4b9c3 8px 12px,#969b91 12px 16px,#b9c3d7 16px 20px,#aab9d2 20px 24px,#96918c 24px 28px,#dce1e1 28px 32px,#a5b4c8 32px 36px,#969b91 36px 40px,#a5afbe 40px 44px,#e6e1dc 44px 48px,#b4b9c3 48px 52px)"></div>
<div class="ab" style="left:516px;top:476px;width:4px;height:4px;background:#fef2e6"></div>
<div class="ab" style="left:520px;top:476px;width:4px;height:4px;background:#deeaf8"></div>
<div class="ab" style="left:644px;top:468px;width:24px;height:4px;background:linear-gradient(90deg,#b2aca8 0px 4px,#b4bac0 4px 8px,#e4d6ca 8px 12px,#8c94a0 12px 16px,#acaea8 16px 20px,#b6bcc4 20px 24px)"></div>
<div class="ab" style="left:644px;top:472px;width:24px;height:4px;background:linear-gradient(90deg,#b2aca8 0px 4px,#b4bab8 4px 8px,#bcacaa 8px 12px,#8c94a0 12px 16px,#acaea8 16px 20px,#b6bcc4 20px 24px)"></div>
<div class="ab" style="left:648px;top:476px;width:4px;height:4px;background:#fef2e6"></div>
<div class="ab" style="left:652px;top:476px;width:4px;height:4px;background:#deeaf8"></div>
<div class="ab" style="left:704px;top:468px;width:64px;height:4px;background:linear-gradient(90deg,#96968c 0px 4px,#c8b9a0 4px 8px,#96968c 8px 12px,#a0a09b 12px 16px,#a5afbe 16px 20px,#e6e1dc 20px 24px,#aaaaa5 24px 28px,#ebdccd 28px 32px,#787d87 32px 36px,#9b96a0 36px 40px,#ded8d2 40px 44px,#beaaaa 44px 48px,#a0a5af 48px 52px,#d7c8be 52px 56px,#a5aab4 56px 60px,#969b91 60px 64px)"></div>
<div class="ab" style="left:704px;top:472px;width:64px;height:4px;background:linear-gradient(90deg,#8c969b 0px 4px,#829baa 4px 8px,#cdc3c8 8px 12px,#a5afbe 12px 16px,#b9c6e1 16px 20px,#cdc3c8 20px 24px,#9b9b96 24px 28px,#96968c 28px 32px,#d7c8be 32px 36px,#a0a09b 36px 40px,#829baa 40px 44px,#aab9d2 44px 48px,#969691 48px 52px,#787d87 52px 56px,#dce6f0 56px 60px,#c8b9a0 60px 64px)"></div>
<div class="ab" style="left:748px;top:476px;width:4px;height:4px;background:#fef2e6"></div>
<div class="ab" style="left:752px;top:476px;width:4px;height:4px;background:#deeaf8"></div>
<div class="ab" style="left:844px;top:468px;width:24px;height:4px;background:linear-gradient(90deg,#b2aca8 0px 4px,#b4bac0 4px 8px,#e4d6ca 8px 12px,#8c94a0 12px 16px,#acaea8 16px 20px,#b6bcc4 20px 24px)"></div>
<div class="ab" style="left:844px;top:472px;width:24px;height:4px;background:linear-gradient(90deg,#b2aca8 0px 4px,#b4bab8 4px 8px,#bcacaa 8px 12px,#8c94a0 12px 16px,#acaea8 16px 20px,#b6bcc4 20px 24px)"></div>
<div class="ab" style="left:848px;top:476px;width:4px;height:4px;background:#fef2e6"></div>
<div class="ab" style="left:852px;top:476px;width:4px;height:4px;background:#deeaf8"></div>
<div class="ab" style="left:944px;top:468px;width:24px;height:4px;background:linear-gradient(90deg,#b2aca8 0px 4px,#b4bac0 4px 8px,#e4d6ca 8px 12px,#8c94a0 12px 16px,#acaea8 16px 20px,#b6bcc4 20px 24px)"></div>
<div class="ab" style="left:944px;top:472px;width:24px;height:4px;background:linear-gradient(90deg,#b2aca8 0px 4px,#b4bab8 4px 8px,#bcacaa 8px 12px,#8c94a0 12px 16px,#acaea8 16px 20px,#b6bcc4 20px 24px)"></div>
<div class="ab" style="left:948px;top:476px;width:4px;height:4px;background:#fef2e6"></div>
<div class="ab" style="left:952px;top:476px;width:4px;height:4px;background:#deeaf8"></div>
<div class="ab" style="left:1044px;top:468px;width:24px;height:4px;background:linear-gradient(90deg,#b2aca8 0px 4px,#b4bac0 4px 8px,#e4d6ca 8px 12px,#8c94a0 12px 16px,#acaea8 16px 20px,#b6bcc4 20px 24px)"></div>
<div class="ab" style="left:1044px;top:472px;width:24px;height:4px;background:linear-gradient(90deg,#b2aca8 0px 4px,#b4bab8 4px 8px,#bcacaa 8px 12px,#8c94a0 12px 16px,#acaea8 16px 20px,#b6bcc4 20px 24px)"></div>
<div class="ab" style="left:1048px;top:476px;width:4px;height:4px;background:#fef2e6"></div>
<div class="ab" style="left:1052px;top:476px;width:4px;height:4px;background:#deeaf8"></div>
<div class="ab" style="left:1144px;top:468px;width:24px;height:4px;background:linear-gradient(90deg,#b2aca8 0px 4px,#b4bac0 4px 8px,#e4d6ca 8px 12px,#8c94a0 12px 16px,#acaea8 16px 20px,#b6bcc4 20px 24px)"></div>
<div class="ab" style="left:1144px;top:472px;width:24px;height:4px;background:linear-gradient(90deg,#b2aca8 0px 4px,#b4bab8 4px 8px,#bcacaa 8px 12px,#8c94a0 12px 16px,#acaea8 16px 20px,#b6bcc4 20px 24px)"></div>
<div class="ab" style="left:1148px;top:476px;width:4px;height:4px;background:#fef2e6"></div>
<div class="ab" style="left:1152px;top:476px;width:4px;height:4px;background:#deeaf8"></div>
<div class="ab" style="left:1244px;top:468px;width:24px;height:4px;background:linear-gradient(90deg,#b2aca8 0px 4px,#b4bac0 4px 8px,#e4d6ca 8px 12px,#8c94a0 12px 16px,#acaea8 16px 20px,#b6bcc4 20px 24px)"></div>
<div class="ab" style="left:1244px;top:472px;width:24px;height:4px;background:linear-gradient(90deg,#b2aca8 0px 4px,#b4bab8 4px 8px,#bcacaa 8px 12px,#8c94a0 12px 16px,#acaea8 16px 20px,#b6bcc4 20px 24px)"></div>
<div class="ab" style="left:1248px;top:476px;width:4px;height:4px;background:#fef2e6"></div>
<div class="ab" style="left:1252px;top:476px;width:4px;height:4px;background:#deeaf8"></div>
<div class="ab" style="left:1344px;top:468px;width:24px;height:4px;background:linear-gradient(90deg,#b2aca8 0px 4px,#b4bac0 4px 8px,#e4d6ca 8px 12px,#8c94a0 12px 16px,#acaea8 16px 20px,#b6bcc4 20px 24px)"></div>
<div class="ab" style="left:1344px;top:472px;width:24px;height:4px;background:linear-gradient(90deg,#b2aca8 0px 4px,#b4bab8 4px 8px,#bcacaa 8px 12px,#8c94a0 12px 16px,#acaea8 16px 20px,#b6bcc4 20px 24px)"></div>
<div class="ab" style="left:1348px;top:476px;width:4px;height:4px;background:#fef2e6"></div>
<div class="ab" style="left:1352px;top:476px;width:4px;height:4px;background:#deeaf8"></div>
<div class="ab" style="left:460px;top:500px;width:908px;height:4px;background:#f8f8f8"></div>
<div class="ab" style="left:536px;top:484px;width:4px;height:16px;background:#fafafa"></div>
<div class="ab" style="left:668px;top:484px;width:4px;height:16px;background:#fafafa"></div>
<div class="ab" style="left:768px;top:484px;width:4px;height:16px;background:#fafafa"></div>
<div class="ab" style="left:868px;top:484px;width:4px;height:16px;background:#fafafa"></div>
<div class="ab" style="left:968px;top:484px;width:4px;height:16px;background:#fafafa"></div>
<div class="ab" style="left:1068px;top:484px;width:4px;height:16px;background:#fafafa"></div>
<div class="ab" style="left:1168px;top:484px;width:4px;height:16px;background:#fafafa"></div>
<div class="ab" style="left:1268px;top:484px;width:4px;height:16px;background:#fafafa"></div>
<div class="ab" style="left:512px;top:488px;width:24px;height:4px;background:linear-gradient(90deg,#b2aca8 0px 4px,#b4bac0 4px 8px,#e4d6ca 8px 12px,#8c94a0 12px 16px,#acaea8 16px 20px,#b6bcc4 20px 24px)"></div>
<div class="ab" style="left:512px;top:492px;width:24px;height:4px;background:linear-gradient(90deg,#b2aca8 0px 4px,#b4bab8 4px 8px,#bcacaa 8px 12px,#8c94a0 12px 16px,#acaea8 16px 20px,#b6bcc4 20px 24px)"></div>
<div class="ab" style="left:516px;top:496px;width:4px;height:4px;background:#fef2e6"></div>
<div class="ab" style="left:520px;top:496px;width:4px;height:4px;background:#deeaf8"></div>
<div class="ab" style="left:616px;top:488px;width:52px;height:4px;background:linear-gradient(90deg,#ded8d2 0px 4px,#969191 4px 8px,#e1d7d2 8px 12px,#d7c8be 12px 16px,#b9c6e1 16px 20px,#969691 20px 24px,#ded8d2 24px 28px,#787d87 28px 32px,#8c969b 32px 36px,#8c969b 36px 40px,#969191 40px 44px,#b9c6e1 44px 48px,#a5afbe 48px 52px)"></div>
<div class="ab" style="left:616px;top:492px;width:52px;height:4px;background:linear-gradient(90deg,#d7c8be 0px 4px,#8c9196 4px 8px,#a5aab4 8px 12px,#a0a5af 12px 16px,#ebdccd 16px 20px,#919696 20px 24px,#96918c 24px 28px,#dce1e1 28px 32px,#aaafaf 32px 36px,#aaaaa5 36px 40px,#a0a09b 40px 44px,#8c969b 44px 48px,#dce6f0 48px 52px)"></div>
<div class="ab" style="left:648px;top:496px;width:4px;height:4px;background:#fef2e6"></div>
<div class="ab" style="left:652px;top:496px;width:4px;height:4px;background:#deeaf8"></div>
<div class="ab" style="left:744px;top:488px;width:24px;height:4px;background:linear-gradient(90deg,#b2aca8 0px 4px,#b4bac0 4px 8px,#e4d6ca 8px 12px,#8c94a0 12px 16px,#acaea8 16px 20px,#b6bcc4 20px 24px)"></div>
<div class="ab" style="left:744px;top:492px;width:24px;height:4px;background:linear-gradient(90deg,#b2aca8 0px 4px,#b4bab8 4px 8px,#bcacaa 8px 12px,#8c94a0 12px 16px,#acaea8 16px 20px,#b6bcc4 20px 24px)"></div>
<div class="ab" style="left:748px;top:496px;width:4px;height:4px;background:#fef2e6"></div>
<div class="ab" style="left:752px;top:496px;width:4px;height:4px;background:#deeaf8"></div>
<div class="ab" style="left:844px;top:488px;width:24px;height:4px;background:linear-gradient(90deg,#b2aca8 0px 4px,#b4bac0 4px 8px,#e4d6ca 8px 12px,#8c94a0 12px 16px,#acaea8 16px 20px,#b6bcc4 20px 24px)"></div>
<div class="ab" style="left:844px;top:492px;width:24px;height:4px;background:linear-gradient(90deg,#b2aca8 0px 4px,#b4bab8 4px 8px,#bcacaa 8px 12px,#8c94a0 12px 16px,#acaea8 16px 20px,#b6bcc4 20px 24px)"></div>
<div class="ab" style="left:848px;top:496px;width:4px;height:4px;background:#fef2e6"></div>
<div class="ab" style="left:852px;top:496px;width:4px;height:4px;background:#deeaf8"></div>
<div class="ab" style="left:944px;top:488px;width:24px;height:4px;background:linear-gradient(90deg,#b2aca8 0px 4px,#b4bac0 4px 8px,#e4d6ca 8px 12px,#8c94a0 12px 16px,#acaea8 16px 20px,#b6bcc4 20px 24px)"></div>
<div class="ab" style="left:944px;top:492px;width:24px;height:4px;background:linear-gradient(90deg,#b2aca8 0px 4px,#b4bab8 4px 8px,#bcacaa 8px 12px,#8c94a0 12px 16px,#acaea8 16px 20px,#b6bcc4 20px 24px)"></div>
<div class="ab" style="left:948px;top:496px;width:4px;height:4px;background:#fef2e6"></div>
<div class="ab" style="left:952px;top:496px;width:4px;height:4px;background:#deeaf8"></div>
<div class="ab" style="left:1044px;top:488px;width:24px;height:4px;background:linear-gradient(90deg,#b2aca8 0px 4px,#b4bac0 4px 8px,#e4d6ca 8px 12px,#8c94a0 12px 16px,#acaea8 16px 20px,#b6bcc4 20px 24px)"></div>
<div class="ab" style="left:1044px;top:492px;width:24px;height:4px;background:linear-gradient(90deg,#b2aca8 0px 4px,#b4bab8 4px 8px,#bcacaa 8px 12px,#8c94a0 12px 16px,#acaea8 16px 20px,#b6bcc4 20px 24px)"></div>
<div class="ab" style="left:1048px;top:496px;width:4px;height:4px;background:#fef2e6"></div>
<div class="ab" style="left:1052px;top:496px;width:4px;height:4px;background:#deeaf8"></div>
<div class="ab" style="left:1144px;top:488px;width:24px;height:4px;background:linear-gradient(90deg,#b2aca8 0px 4px,#b4bac0 4px 8px,#e4d6ca 8px 12px,#8c94a0 12px 16px,#acaea8 16px 20px,#b6bcc4 20px 24px)"></div>
<div class="ab" style="left:1144px;top:492px;width:24px;height:4px;background:linear-gradient(90deg,#b2aca8 0px 4px,#b4bab8 4px 8px,#bcacaa 8px 12px,#8c94a0 12px 16px,#acaea8 16px 20px,#b6bcc4 20px 24px)"></div>
<div class="ab" style="left:1148px;top:496px;width:4px;height:4px;background:#fef2e6"></div>
<div class="ab" style="left:1152px;top:496px;width:4px;height:4px;background:#deeaf8"></div>
<div class="ab" style="left:1244px;top:488px;width:24px;height:4px;background:linear-gradient(90deg,#b2aca8 0px 4px,#b4bac0 4px 8px,#e4d6ca 8px 12px,#8c94a0 12px 16px,#acaea8 16px 20px,#b6bcc4 20px 24px)"></div>
<div class="ab" style="left:1244px;top:492px;width:24px;height:4px;background:linear-gradient(90deg,#b2aca8 0px 4px,#b4bab8 4px 8px,#bcacaa 8px 12px,#8c94a0 12px 16px,#acaea8 16px 20px,#b6bcc4 20px 24px)"></div>
<div class="ab" style="left:1248px;top:496px;width:4px;height:4px;background:#fef2e6"></div>
<div class="ab" style="left:1252px;top:496px;width:4px;height:4px;background:#deeaf8"></div>
<div class="ab" style="left:1344px;top:488px;width:24px;height:4px;background:linear-gradient(90deg,#b2aca8 0px 4px,#b4bac0 4px 8px,#e4d6ca 8px 12px,#8c94a0 12px 16px,#acaea8 16px 20px,#b6bcc4 20px 24px)"></div>
<div class="ab" style="left:1344px;top:492px;width:24px;height:4px;background:linear-gradient(90deg,#b2aca8 0px 4px,#b4bab8 4px 8px,#bcacaa 8px 12px,#8c94a0 12px 16px,#acaea8 16px 20px,#b6bcc4 20px 24px)"></div>
<div class="ab" style="left:1348px;top:496px;width:4px;height:4px;background:#fef2e6"></div>
<div class="ab" style="left:1352px;top:496px;width:4px;height:4px;background:#deeaf8"></div>
<div class="ab" style="left:460px;top:520px;width:908px;height:4px;background:#edefe8"></div>
<div class="ab" style="left:536px;top:504px;width:4px;height:16px;background:#fafafa"></div>
<div class="ab" style="left:668px;top:504px;width:4px;height:16px;background:#fafafa"></div>
<div class="ab" style="left:768px;top:504px;width:4px;height:16px;background:#fafafa"></div>
<div class="ab" style="left:868px;top:504px;width:4px;height:16px;background:#fafafa"></div>
<div class="ab" style="left:968px;top:504px;width:4px;height:16px;background:#fafafa"></div>
<div class="ab" style="left:1068px;top:504px;width:4px;height:16px;background:#fafafa"></div>
<div class="ab" style="left:1168px;top:504px;width:4px;height:16px;background:#fafafa"></div>
<div class="ab" style="left:1268px;top:504px;width:4px;height:16px;background:#fafafa"></div>
<div class="ab" style="left:512px;top:508px;width:24px;height:4px;background:linear-gradient(90deg,#b2aca8 0px 4px,#b4bac0 4px 8px,#e4d6ca 8px 12px,#8c94a0 12px 16px,#acaea8 16px 20px,#b6bcc4 20px 24px)"></div>
<div class="ab" style="left:512px;top:512px;width:24px;height:4px;background:linear-gradient(90deg,#b2aca8 0px 4px,#b4bab8 4px 8px,#bcacaa 8px 12px,#8c94a0 12px 16px,#acaea8 16px 20px,#b6bcc4 20px 24px)"></div>
<div class="ab" style="left:516px;top:516px;width:4px;height:4px;background:#fef2e6"></div>
<div class="ab" style="left:520px;top:516px;width:4px;height:4px;background:#deeaf8"></div>
<div class="ab" style="left:624px;top:508px;width:44px;height:4px;background:linear-gradient(90deg,#d7c8be 0px 4px,#969191 4px 8px,#96918c 8px 12px,#919696 12px 16px,#e1d7d2 16px 20px,#aaaaa5 20px 24px,#c8b9a0 24px 28px,#8c969b 28px 32px,#878291 32px 36px,#8c9196 36px 40px,#a5afbe 40px 44px)"></div>
<div class="ab" style="left:624px;top:512px;width:44px;height:4px;background:linear-gradient(90deg,#829baa 0px 4px,#dce6f0 4px 8px,#8c9196 8px 12px,#a0a5af 12px 16px,#91878c 16px 20px,#e1d7d2 20px 24px,#cdc3af 24px 28px,#827364 28px 32px,#a5b4c8 32px 36px,#d2b9af 36px 40px,#969ba5 40px 44px)"></div>
<div class="ab" style="left:648px;top:516px;width:4px;height:4px;background:#fef2e6"></div>
<div class="ab" style="left:652px;top:516px;width:4px;height:4px;background:#deeaf8"></div>
<div class="ab" style="left:744px;top:508px;width:24px;height:4px;background:linear-gradient(90deg,#b2aca8 0px 4px,#b4bac0 4px 8px,#e4d6ca 8px 12px,#8c94a0 12px 16px,#acaea8 16px 20px,#b6bcc4 20px 24px)"></div>
<div class="ab" style="left:744px;top:512px;width:24px;height:4px;background:linear-gradient(90deg,#b2aca8 0px 4px,#b4bab8 4px 8px,#bcacaa 8px 12px,#8c94a0 12px 16px,#acaea8 16px 20px,#b6bcc4 20px 24px)"></div>
<div class="ab" style="left:748px;top:516px;width:4px;height:4px;background:#fef2e6"></div>
<div class="ab" style="left:752px;top:516px;width:4px;height:4px;background:#deeaf8"></div>
<div class="ab" style="left:844px;top:508px;width:24px;height:4px;background:linear-gradient(90deg,#b2aca8 0px 4px,#b4bac0 4px 8px,#e4d6ca 8px 12px,#8c94a0 12px 16px,#acaea8 16px 20px,#b6bcc4 20px 24px)"></div>
<div class="ab" style="left:844px;top:512px;width:24px;height:4px;background:linear-gradient(90deg,#b2aca8 0px 4px,#b4bab8 4px 8px,#bcacaa 8px 12px,#8c94a0 12px 16px,#acaea8 16px 20px,#b6bcc4 20px 24px)"></div>
<div class="ab" style="left:848px;top:516px;width:4px;height:4px;background:#fef2e6"></div>
<div class="ab" style="left:852px;top:516px;width:4px;height:4px;background:#deeaf8"></div>
<div class="ab" style="left:944px;top:508px;width:24px;height:4px;background:linear-gradient(90deg,#b2aca8 0px 4px,#b4bac0 4px 8px,#e4d6ca 8px 12px,#8c94a0 12px 16px,#acaea8 16px 20px,#b6bcc4 20px 24px)"></div>
<div class="ab" style="left:944px;top:512px;width:24px;height:4px;background:linear-gradient(90deg,#b2aca8 0px 4px,#b4bab8 4px 8px,#bcacaa 8px 12px,#8c94a0 12px 16px,#acaea8 16px 20px,#b6bcc4 20px 24px)"></div>
<div class="ab" style="left:948px;top:516px;width:4px;height:4px;background:#fef2e6"></div>
<div class="ab" style="left:952px;top:516px;width:4px;height:4px;background:#deeaf8"></div>
<div class="ab" style="left:1044px;top:508px;width:24px;height:4px;background:linear-gradient(90deg,#b2aca8 0px 4px,#b4bac0 4px 8px,#e4d6ca 8px 12px,#8c94a0 12px 16px,#acaea8 16px 20px,#b6bcc4 20px 24px)"></div>
<div class="ab" style="left:1044px;top:512px;width:24px;height:4px;background:linear-gradient(90deg,#b2aca8 0px 4px,#b4bab8 4px 8px,#bcacaa 8px 12px,#8c94a0 12px 16px,#acaea8 16px 20px,#b6bcc4 20px 24px)"></div>
<div class="ab" style="left:1048px;top:516px;width:4px;height:4px;background:#fef2e6"></div>
<div class="ab" style="left:1052px;top:516px;width:4px;height:4px;background:#deeaf8"></div>
<div class="ab" style="left:1144px;top:508px;width:24px;height:4px;background:linear-gradient(90deg,#b2aca8 0px 4px,#b4bac0 4px 8px,#e4d6ca 8px 12px,#8c94a0 12px 16px,#acaea8 16px 20px,#b6bcc4 20px 24px)"></div>
<div class="ab" style="left:1144px;top:512px;width:24px;height:4px;background:linear-gradient(90deg,#b2aca8 0px 4px,#b4bab8 4px 8px,#bcacaa 8px 12px,#8c94a0 12px 16px,#acaea8 16px 20px,#b6bcc4 20px 24px)"></div>
<div class="ab" style="left:1148px;top:516px;width:4px;height:4px;background:#fef2e6"></div>
<div class="ab" style="left:1152px;top:516px;width:4px;height:4px;background:#deeaf8"></div>
<div class="ab" style="left:1244px;top:508px;width:24px;height:4px;background:linear-gradient(90deg,#b2aca8 0px 4px,#b4bac0 4px 8px,#e4d6ca 8px 12px,#8c94a0 12px 16px,#acaea8 16px 20px,#b6bcc4 20px 24px)"></div>
<div class="ab" style="left:1244px;top:512px;width:24px;height:4px;background:linear-gradient(90deg,#b2aca8 0px 4px,#b4bab8 4px 8px,#bcacaa 8px 12px,#8c94a0 12px 16px,#acaea8 16px 20px,#b6bcc4 20px 24px)"></div>
<div class="ab" style="left:1248px;top:516px;width:4px;height:4px;background:#fef2e6"></div>
<div class="ab" style="left:1252px;top:516px;width:4px;height:4px;background:#deeaf8"></div>
<div class="ab" style="left:1344px;top:508px;width:24px;height:4px;background:linear-gradient(90deg,#b2aca8 0px 4px,#b4bac0 4px 8px,#e4d6ca 8px 12px,#8c94a0 12px 16px,#acaea8 16px 20px,#b6bcc4 20px 24px)"></div>
<div class="ab" style="left:1344px;top:512px;width:24px;height:4px;background:linear-gradient(90deg,#b2aca8 0px 4px,#b4bab8 4px 8px,#bcacaa 8px 12px,#8c94a0 12px 16px,#acaea8 16px 20px,#b6bcc4 20px 24px)"></div>
<div class="ab" style="left:1348px;top:516px;width:4px;height:4px;background:#fef2e6"></div>
<div class="ab" style="left:1352px;top:516px;width:4px;height:4px;background:#deeaf8"></div>
<div class="ab" style="left:460px;top:540px;width:908px;height:4px;background:#e8edde"></div>
<div class="ab" style="left:536px;top:524px;width:4px;height:16px;background:#dce4ce"></div>
<div class="ab" style="left:668px;top:524px;width:4px;height:16px;background:#dce4ce"></div>
<div class="ab" style="left:768px;top:524px;width:4px;height:16px;background:#dce4ce"></div>
<div class="ab" style="left:868px;top:524px;width:4px;height:16px;background:#dce4ce"></div>
<div class="ab" style="left:968px;top:524px;width:4px;height:16px;background:#dce4ce"></div>
<div class="ab" style="left:1068px;top:524px;width:4px;height:16px;background:#dce4ce"></div>
<div class="ab" style="left:1168px;top:524px;width:4px;height:16px;background:#dce4ce"></div>
<div class="ab" style="left:1268px;top:524px;width:4px;height:16px;background:#dce4ce"></div>
<div class="ab" style="left:472px;top:528px;width:64px;height:4px;background:linear-gradient(90deg,#a8a295 0px 4px,#7b7372 4px 8px,#818274 8px 12px,#5f6557 12px 16px,#2e4231 16px 20px,#b1bba9 20px 24px,#a4a58f 24px 28px,#5f544f 28px 32px,#4a514f 32px 36px,#807f74 36px 40px,#31423b 40px 44px,#b3bc9b 44px 48px,#a9be9c 48px 52px,#434738 52px 56px,#585943 56px 60px,#717267 60px 64px)"></div>
<div class="ab" style="left:472px;top:532px;width:64px;height:4px;background:linear-gradient(90deg,#95ad8a 0px 4px,#42554e 4px 8px,#413531 8px 12px,#948689 12px 16px,#585944 16px 20px,#b0a996 20px 24px,#8c8776 24px 28px,#544d4b 28px 32px,#7e887b 32px 36px,#495053 36px 40px,#4e553a 40px 44px,#646164 44px 48px,#9fb28a 48px 52px,#797e76 52px 56px,#526050 56px 60px,#676663 60px 64px)"></div>
<div class="ab" style="left:516px;top:536px;width:4px;height:4px;background:#b5cbad"></div>
<div class="ab" style="left:520px;top:536px;width:4px;height:4px;background:#c7d7b3"></div>
<div class="ab" style="left:596px;top:528px;width:72px;height:4px;background:linear-gradient(90deg,#96a48f 0px 4px,#828070 4px 8px,#d3c9bc 8px 12px,#565e56 12px 16px,#7e867e 16px 20px,#4e4142 20px 24px,#898482 24px 28px,#75827a 28px 32px,#c0bfac 32px 36px,#2e3d2f 36px 40px,#656d66 40px 44px,#6d6c5e 44px 48px,#837d79 48px 52px,#7a7d69 52px 56px,#89a28c 56px 60px,#362d2b 60px 64px,#5d534b 64px 68px,#74645d 68px 72px)"></div>
<div class="ab" style="left:596px;top:532px;width:72px;height:4px;background:linear-gradient(90deg,#94a988 0px 4px,#5b5951 4px 8px,#c2bbb0 8px 12px,#293636 12px 16px,#849783 16px 20px,#475340 20px 24px,#70816e 24px 28px,#5c7466 28px 32px,#c0c4b5 32px 36px,#414f3d 36px 40px,#4c4036 40px 44px,#4a5c42 44px 48px,#6e7562 48px 52px,#b8b4a5 52px 56px,#68605d 56px 60px,#485442 60px 64px,#707b64 64px 68px,#6e675c 68px 72px)"></div>
<div class="ab" style="left:648px;top:536px;width:4px;height:4px;background:#beccb7"></div>
<div class="ab" style="left:652px;top:536px;width:4px;height:4px;background:#bfc7ac"></div>
<div class="ab" style="left:736px;top:528px;width:32px;height:4px;background:linear-gradient(90deg,#94ab85 0px 4px,#706f67 4px 8px,#86817b 8px 12px,#7f7676 12px 16px,#707c69 16px 20px,#6a6759 20px 24px,#586e62 24px 28px,#6a695e 28px 32px)"></div>
<div class="ab" style="left:736px;top:532px;width:32px;height:4px;background:linear-gradient(90deg,#a7b19d 0px 4px,#4e4845 4px 8px,#373f43 8px 12px,#8d9476 12px 16px,#757875 16px 20px,#44544c 20px 24px,#5d5a54 24px 28px,#64766f 28px 32px)"></div>
<div class="ab" style="left:748px;top:536px;width:4px;height:4px;background:#c1c2a5"></div>
<div class="ab" style="left:752px;top:536px;width:4px;height:4px;background:#b3ccb6"></div>
<div class="ab" style="left:828px;top:528px;width:40px;height:4px;background:linear-gradient(90deg,#8a8f93 0px 4px,#4a5a4a 4px 8px,#6b8372 8px 12px,#54544e 12px 16px,#41403f 16px 20px,#cac8b2 20px 24px,#665d64 24px 28px,#726c68 28px 32px,#626257 32px 36px,#736b70 36px 40px)"></div>
<div class="ab" style="left:828px;top:532px;width:40px;height:4px;background:linear-gradient(90deg,#99a293 0px 4px,#46554d 4px 8px,#657367 8px 12px,#5a4e44 12px 16px,#44423c 16px 20px,#857776 20px 24px,#5f7262 24px 28px,#647469 28px 32px,#5d665d 32px 36px,#747970 36px 40px)"></div>
<div class="ab" style="left:848px;top:536px;width:4px;height:4px;background:#b2c1a5"></div>
<div class="ab" style="left:940px;top:528px;width:28px;height:4px;background:linear-gradient(90deg,#695d5b 0px 4px,#4a5450 4px 8px,#cad3b7 8px 12px,#464f40 12px 16px,#7d8775 16px 20px,#5e4e4d 20px 24px,#616b65 24px 28px)"></div>
<div class="ab" style="left:940px;top:532px;width:28px;height:4px;background:linear-gradient(90deg,#8a8776 0px 4px,#414838 4px 8px,#868d8d 8px 12px,#688262 12px 16px,#415243 16px 20px,#55635a 20px 24px,#70635d 24px 28px)"></div>
<div class="ab" style="left:948px;top:536px;width:4px;height:4px;background:#a7b59e"></div>
<div class="ab" style="left:1040px;top:528px;width:28px;height:4px;background:linear-gradient(90deg,#5e6563 0px 4px,#464841 4px 8px,#cad3b7 8px 12px,#453949 12px 16px,#787f78 16px 20px,#48614d 20px 24px,#716e58 24px 28px)"></div>
<div class="ab" style="left:1040px;top:532px;width:28px;height:4px;background:linear-gradient(90deg,#878a8b 0px 4px,#454142 4px 8px,#92908f 8px 12px,#787068 12px 16px,#3f5846 16px 20px,#58505b 20px 24px,#607166 24px 28px)"></div>
<div class="ab" style="left:1048px;top:536px;width:4px;height:4px;background:#afbda8"></div>
<div class="ab" style="left:1140px;top:528px;width:28px;height:4px;background:linear-gradient(90deg,#676455 0px 4px,#554c42 4px 8px,#cad3b7 8px 12px,#434037 12px 16px,#817c7b 16px 20px,#59524d 20px 24px,#756a5f 24px 28px)"></div>
<div class="ab" style="left:1140px;top:532px;width:28px;height:4px;background:linear-gradient(90deg,#8c8c7a 0px 4px,#45403d 4px 8px,#958d80 8px 12px,#678265 12px 16px,#4c4e3e 16px 20px,#5d655c 20px 24px,#616761 24px 28px)"></div>
<div class="ab" style="left:1148px;top:536px;width:4px;height:4px;background:#afaba4"></div>
<div class="ab" style="left:1240px;top:528px;width:28px;height:4px;background:linear-gradient(90deg,#695f62 0px 4px,#414151 4px 8px,#cad3b7 8px 12px,#3f4148 12px 16px,#788c79 16px 20px,#4f5b52 20px 24px,#747563 24px 28px)"></div>
<div class="ab" style="left:1240px;top:532px;width:28px;height:4px;background:linear-gradient(90deg,#969a8c 0px 4px,#333643 4px 8px,#949381 8px 12px,#78806b 12px 16px,#425240 16px 20px,#5a5f5e 20px 24px,#60676d 24px 28px)"></div>
<div class="ab" style="left:1248px;top:536px;width:4px;height:4px;background:#afb09a"></div>
<div class="ab" style="left:1328px;top:528px;width:40px;height:4px;background:linear-gradient(90deg,#94a68c 0px 4px,#575e55 4px 8px,#737477 8px 12px,#545b50 12px 16px,#3a3733 16px 20px,#c5daaf 20px 24px,#635d56 24px 28px,#626759 28px 32px,#566c5c 32px 36px,#746861 36px 40px)"></div>
<div class="ab" style="left:1328px;top:532px;width:40px;height:4px;background:linear-gradient(90deg,#9c9387 0px 4px,#414b51 4px 8px,#627168 8px 12px,#574a53 12px 16px,#4d3e45 16px 20px,#808a6e 20px 24px,#717353 24px 28px,#68745f 28px 32px,#616c64 32px 36px,#676860 36px 40px)"></div>
<div class="ab" style="left:1348px;top:536px;width:4px;height:4px;background:#b1c19d"></div>
<div class="ab" style="left:460px;top:560px;width:908px;height:4px;background:#f8f8f8"></div>
<div class="ab" style="left:536px;top:544px;width:4px;height:16px;background:#fafafa"></div>
<div class="ab" style="left:668px;top:544px;width:4px;height:16px;background:#fafafa"></div>
<div class="ab" style="left:768px;top:544px;width:4px;height:16px;background:#fafafa"></div>
<div class="ab" style="left:868px;top:544px;width:4px;height:16px;background:#fafafa"></div>
<div class="ab" style="left:968px;top:544px;width:4px;height:16px;background:#fafafa"></div>
<div class="ab" style="left:1068px;top:544px;width:4px;height:16px;background:#fafafa"></div>
<div class="ab" style="left:1168px;top:544px;width:4px;height:16px;background:#fafafa"></div>
<div class="ab" style="left:1268px;top:544px;width:4px;height:16px;background:#fafafa"></div>
<div class="ab" style="left:480px;top:548px;width:56px;height:4px;background:linear-gradient(90deg,#827364 0px 4px,#9b96a0 4px 8px,#829baa 8px 12px,#969ba5 12px 16px,#d7c8be 16px 20px,#cdc3af 20px 24px,#969b91 24px 28px,#dce1e1 28px 32px,#b9c3d7 32px 36px,#d2b9af 36px 40px,#969191 40px 44px,#787d87 44px 48px,#aaafaf 48px 52px,#8791a0 52px 56px)"></div>
<div class="ab" style="left:480px;top:552px;width:56px;height:4px;background:linear-gradient(90deg,#b9c6e1 0px 4px,#beaaaa 4px 8px,#919696 8px 12px,#beaaaa 12px 16px,#cdc3af 16px 20px,#ebdccd 20px 24px,#cdc3af 24px 28px,#cdc3c8 28px 32px,#827364 32px 36px,#e6e1dc 36px 40px,#e6e1dc 40px 44px,#cdc3c8 44px 48px,#87828c 48px 52px,#aaafaf 52px 56px)"></div>
<div class="ab" style="left:516px;top:556px;width:4px;height:4px;background:#fef2e6"></div>
<div class="ab" style="left:520px;top:556px;width:4px;height:4px;background:#deeaf8"></div>
<div class="ab" style="left:612px;top:548px;width:56px;height:4px;background:linear-gradient(90deg,#a0a5af 0px 4px,#cdc3af 4px 8px,#8791a0 8px 12px,#96968c 12px 16px,#beaaaa 16px 20px,#827364 20px 24px,#969b91 24px 28px,#9b9b96 28px 32px,#969191 32px 36px,#e1d7d2 36px 40px,#878291 40px 44px,#c8b9a0 44px 48px,#787d87 48px 52px,#87828c 52px 56px)"></div>
<div class="ab" style="left:612px;top:552px;width:56px;height:4px;background:linear-gradient(90deg,#a5b4c8 0px 4px,#ded8d2 4px 8px,#969ba5 8px 12px,#b4b9c3 12px 16px,#dcd7d2 16px 20px,#cdc3af 20px 24px,#8c9196 24px 28px,#aaafaf 28px 32px,#dce1e1 32px 36px,#827364 36px 40px,#969b91 40px 44px,#8c9196 44px 48px,#a5afbe 48px 52px,#e6e1dc 52px 56px)"></div>
<div class="ab" style="left:648px;top:556px;width:4px;height:4px;background:#fef2e6"></div>
<div class="ab" style="left:652px;top:556px;width:4px;height:4px;background:#deeaf8"></div>
<div class="ab" style="left:740px;top:548px;width:28px;height:4px;background:linear-gradient(90deg,#c8b9a0 0px 4px,#829baa 4px 8px,#8c969b 8px 12px,#969691 12px 16px,#aaaaa5 16px 20px,#dcd7d2 20px 24px,#9b9b96 24px 28px)"></div>
<div class="ab" style="left:740px;top:552px;width:28px;height:4px;background:linear-gradient(90deg,#829baa 0px 4px,#dce6f0 4px 8px,#ebdccd 8px 12px,#dcd7d2 12px 16px,#a5aab4 16px 20px,#c8b9a0 20px 24px,#96968c 24px 28px)"></div>
<div class="ab" style="left:748px;top:556px;width:4px;height:4px;background:#fef2e6"></div>
<div class="ab" style="left:752px;top:556px;width:4px;height:4px;background:#deeaf8"></div>
<div class="ab" style="left:832px;top:548px;width:36px;height:4px;background:linear-gradient(90deg,#a0a5af 0px 4px,#a0a09b 4px 8px,#beaaaa 8px 12px,#e1d7d2 12px 16px,#829baa 16px 20px,#ded8d2 20px 24px,#969191 24px 28px,#b9c3d7 28px 32px,#dce6f0 32px 36px)"></div>
<div class="ab" style="left:832px;top:552px;width:36px;height:4px;background:linear-gradient(90deg,#96918c 0px 4px,#dce6f0 4px 8px,#9b9b96 8px 12px,#969191 12px 16px,#c8b9a0 16px 20px,#aaafaf 20px 24px,#c8b9a0 24px 28px,#aaafaf 28px 32px,#9b96a0 32px 36px)"></div>
<div class="ab" style="left:848px;top:556px;width:4px;height:4px;background:#fef2e6"></div>
<div class="ab" style="left:852px;top:556px;width:4px;height:4px;background:#deeaf8"></div>
<div class="ab" style="left:944px;top:548px;width:24px;height:4px;background:linear-gradient(90deg,#b2aca8 0px 4px,#b4bac0 4px 8px,#e4d6ca 8px 12px,#8c94a0 12px 16px,#acaea8 16px 20px,#b6bcc4 20px 24px)"></div>
<div class="ab" style="left:944px;top:552px;width:24px;height:4px;background:linear-gradient(90deg,#b2aca8 0px 4px,#b4bab8 4px 8px,#bcacaa 8px 12px,#8c94a0 12px 16px,#acaea8 16px 20px,#b6bcc4 20px 24px)"></div>
<div class="ab" style="left:948px;top:556px;width:4px;height:4px;background:#fef2e6"></div>
<div class="ab" style="left:952px;top:556px;width:4px;height:4px;background:#deeaf8"></div>
<div class="ab" style="left:1044px;top:548px;width:24px;height:4px;background:linear-gradient(90deg,#b2aca8 0px 4px,#b4bac0 4px 8px,#e4d6ca 8px 12px,#8c94a0 12px 16px,#acaea8 16px 20px,#b6bcc4 20px 24px)"></div>
<div class="ab" style="left:1044px;top:552px;width:24px;height:4px;background:linear-gradient(90deg,#b2aca8 0px 4px,#b4bab8 4px 8px,#bcacaa 8px 12px,#8c94a0 12px 16px,#acaea8 16px 20px,#b6bcc4 20px 24px)"></div>
<div class="ab" style="left:1048px;top:556px;width:4px;height:4px;background:#fef2e6"></div>
<div class="ab" style="left:1052px;top:556px;width:4px;height:4px;background:#deeaf8"></div>
<div class="ab" style="left:1144px;top:548px;width:24px;height:4px;background:linear-gradient(90deg,#b2aca8 0px 4px,#b4bac0 4px 8px,#e4d6ca 8px 12px,#8c94a0 12px 16px,#acaea8 16px 20px,#b6bcc4 20px 24px)"></div>
<div class="ab" style="left:1144px;top:552px;width:24px;height:4px;background:linear-gradient(90deg,#b2aca8 0px 4px,#b4bab8 4px 8px,#bcacaa 8px 12px,#8c94a0 12px 16px,#acaea8 16px 20px,#b6bcc4 20px 24px)"></div>
<div class="ab" style="left:1148px;top:556px;width:4px;height:4px;background:#fef2e6"></div>
<div class="ab" style="left:1152px;top:556px;width:4px;height:4px;background:#deeaf8"></div>
<div class="ab" style="left:1244px;top:548px;width:24px;height:4px;background:linear-gradient(90deg,#b2aca8 0px 4px,#b4bac0 4px 8px,#e4d6ca 8px 12px,#8c94a0 12px 16px,#acaea8 16px 20px,#b6bcc4 20px 24px)"></div>
<div class="ab" style="left:1244px;top:552px;width:24px;height:4px;background:linear-gradient(90deg,#b2aca8 0px 4px,#b4bab8 4px 8px,#bcacaa 8px 12px,#8c94a0 12px 16px,#acaea8 16px 20px,#b6bcc4 20px 24px)"></div>
<div class="ab" style="left:1248px;top:556px;width:4px;height:4px;background:#fef2e6"></div>
<div class="ab" style="left:1252px;top:556px;width:4px;height:4px;background:#deeaf8"></div>
<div class="ab" style="left:1332px;top:548px;width:36px;height:4px;background:linear-gradient(90deg,#8c969b 0px 4px,#969191 4px 8px,#829baa 8px 12px,#dcd7d2 12px 16px,#a5aab4 16px 20px,#9b96a0 20px 24px,#beaaaa 24px 28px,#cdc3c8 28px 32px,#919696 32px 36px)"></div>
<div class="ab" style="left:1332px;top:552px;width:36px;height:4px;background:linear-gradient(90deg,#aaaaa5 0px 4px,#dcd7d2 4px 8px,#b9c3d7 8px 12px,#a5afbe 12px 16px,#8791a0 16px 20px,#cdc3c8 20px 24px,#87828c 24px 28px,#919696 28px 32px,#91878c 32px 36px)"></div>
<div class="ab" style="left:1348px;top:556px;width:4px;height:4px;background:#fef2e6"></div>
<div class="ab" style="left:1352px;top:556px;width:4px;height:4px;background:#deeaf8"></div>
<div class="ab" style="left:460px;top:580px;width:908px;height:4px;background:#f8f8f8"></div>
<div class="ab" style="left:536px;top:564px;width:4px;height:16px;background:#fafafa"></div>
<div class="ab" style="left:668px;top:564px;width:4px;height:16px;background:#fafafa"></div>
<div class="ab" style="left:768px;top:564px;width:4px;height:16px;background:#fafafa"></div>
<div class="ab" style="left:868px;top:564px;width:4px;height:16px;background:#fafafa"></div>
<div class="ab" style="left:968px;top:564px;width:4px;height:16px;background:#fafafa"></div>
<div class="ab" style="left:1068px;top:564px;width:4px;height:16px;background:#fafafa"></div>
<div class="ab" style="left:1168px;top:564px;width:4px;height:16px;background:#fafafa"></div>
<div class="ab" style="left:1268px;top:564px;width:4px;height:16px;background:#fafafa"></div>
<div class="ab" style="left:512px;top:568px;width:24px;height:4px;background:linear-gradient(90deg,#b2aca8 0px 4px,#b4bac0 4px 8px,#e4d6ca 8px 12px,#8c94a0 12px 16px,#acaea8 16px 20px,#b6bcc4 20px 24px)"></div>
<div class="ab" style="left:512px;top:572px;width:24px;height:4px;background:linear-gradient(90deg,#b2aca8 0px 4px,#b4bab8 4px 8px,#bcacaa 8px 12px,#8c94a0 12px 16px,#acaea8 16px 20px,#b6bcc4 20px 24px)"></div>
<div class="ab" style="left:516px;top:576px;width:4px;height:4px;background:#fef2e6"></div>
<div class="ab" style="left:520px;top:576px;width:4px;height:4px;background:#deeaf8"></div>
<div class="ab" style="left:624px;top:568px;width:44px;height:4px;background:linear-gradient(90deg,#878291 0px 4px,#d2b9af 4px 8px,#a0a5af 8px 12px,#aaaaa5 12px 16px,#8c969b 16px 20px,#a5afbe 20px 24px,#a5aab4 24px 28px,#787d87 28px 32px,#dce1e1 32px 36px,#969691 36px 40px,#dcd7d2 40px 44px)"></div>
<div class="ab" style="left:624px;top:572px;width:44px;height:4px;background:linear-gradient(90deg,#d7c8be 0px 4px,#ded8d2 4px 8px,#dcd7d2 8px 12px,#827364 12px 16px,#b9c6e1 16px 20px,#969691 20px 24px,#8c9196 24px 28px,#9b96a0 28px 32px,#87828c 32px 36px,#919696 36px 40px,#c8b9a0 40px 44px)"></div>
<div class="ab" style="left:648px;top:576px;width:4px;height:4px;background:#fef2e6"></div>
<div class="ab" style="left:652px;top:576px;width:4px;height:4px;background:#deeaf8"></div>
<div class="ab" style="left:744px;top:568px;width:24px;height:4px;background:linear-gradient(90deg,#b2aca8 0px 4px,#b4bac0 4px 8px,#e4d6ca 8px 12px,#8c94a0 12px 16px,#acaea8 16px 20px,#b6bcc4 20px 24px)"></div>
<div class="ab" style="left:744px;top:572px;width:24px;height:4px;background:linear-gradient(90deg,#b2aca8 0px 4px,#b4bab8 4px 8px,#bcacaa 8px 12px,#8c94a0 12px 16px,#acaea8 16px 20px,#b6bcc4 20px 24px)"></div>
<div class="ab" style="left:748px;top:576px;width:4px;height:4px;background:#fef2e6"></div>
<div class="ab" style="left:752px;top:576px;width:4px;height:4px;background:#deeaf8"></div>
<div class="ab" style="left:844px;top:568px;width:24px;height:4px;background:linear-gradient(90deg,#b2aca8 0px 4px,#b4bac0 4px 8px,#e4d6ca 8px 12px,#8c94a0 12px 16px,#acaea8 16px 20px,#b6bcc4 20px 24px)"></div>
<div class="ab" style="left:844px;top:572px;width:24px;height:4px;background:linear-gradient(90deg,#b2aca8 0px 4px,#b4bab8 4px 8px,#bcacaa 8px 12px,#8c94a0 12px 16px,#acaea8 16px 20px,#b6bcc4 20px 24px)"></div>
<div class="ab" style="left:848px;top:576px;width:4px;height:4px;background:#fef2e6"></div>
<div class="ab" style="left:852px;top:576px;width:4px;height:4px;background:#deeaf8"></div>
<div class="ab" style="left:944px;top:568px;width:24px;height:4px;background:linear-gradient(90deg,#b2aca8 0px 4px,#b4bac0 4px 8px,#e4d6ca 8px 12px,#8c94a0 12px 16px,#acaea8 16px 20px,#b6bcc4 20px 24px)"></div>
<div class="ab" style="left:944px;top:572px;width:24px;height:4px;background:linear-gradient(90deg,#b2aca8 0px 4px,#b4bab8 4px 8px,#bcacaa 8px 12px,#8c94a0 12px 16px,#acaea8 16px 20px,#b6bcc4 20px 24px)"></div>
<div class="ab" style="left:948px;top:576px;width:4px;height:4px;background:#fef2e6"></div>
<div class="ab" style="left:952px;top:576px;width:4px;height:4px;background:#deeaf8"></div>
<div class="ab" style="left:1044px;top:568px;width:24px;height:4px;background:linear-gradient(90deg,#b2aca8 0px 4px,#b4bac0 4px 8px,#e4d6ca 8px 12px,#8c94a0 12px 16px,#acaea8 16px 20px,#b6bcc4 20px 24px)"></div>
<div class="ab" style="left:1044px;top:572px;width:24px;height:4px;background:linear-gradient(90deg,#b2aca8 0px 4px,#b4bab8 4px 8px,#bcacaa 8px 12px,#8c94a0 12px 16px,#acaea8 16px 20px,#b6bcc4 20px 24px)"></div>
<div class="ab" style="left:1048px;top:576px;width:4px;height:4px;background:#fef2e6"></div>
<div class="ab" style="left:1052px;top:576px;width:4px;height:4px;background:#deeaf8"></div>
<div class="ab" style="left:1144px;top:568px;width:24px;height:4px;background:linear-gradient(90deg,#b2aca8 0px 4px,#b4bac0 4px 8px,#e4d6ca 8px 12px,#8c94a0 12px 16px,#acaea8 16px 20px,#b6bcc4 20px 24px)"></div>
<div class="ab" style="left:1144px;top:572px;width:24px;height:4px;background:linear-gradient(90deg,#b2aca8 0px 4px,#b4bab8 4px 8px,#bcacaa 8px 12px,#8c94a0 12px 16px,#acaea8 16px 20px,#b6bcc4 20px 24px)"></div>
<div class="ab" style="left:1148px;top:576px;width:4px;height:4px;background:#fef2e6"></div>
<div class="ab" style="left:1152px;top:576px;width:4px;height:4px;background:#deeaf8"></div>
<div class="ab" style="left:1244px;top:568px;width:24px;height:4px;background:linear-gradient(90deg,#b2aca8 0px 4px,#b4bac0 4px 8px,#e4d6ca 8px 12px,#8c94a0 12px 16px,#acaea8 16px 20px,#b6bcc4 20px 24px)"></div>
<div class="ab" style="left:1244px;top:572px;width:24px;height:4px;background:linear-gradient(90deg,#b2aca8 0px 4px,#b4bab8 4px 8px,#bcacaa 8px 12px,#8c94a0 12px 16px,#acaea8 16px 20px,#b6bcc4 20px 24px)"></div>
<div class="ab" style="left:1248px;top:576px;width:4px;height:4px;background:#fef2e6"></div>
<div class="ab" style="left:1252px;top:576px;width:4px;height:4px;background:#deeaf8"></div>
<div class="ab" style="left:1344px;top:568px;width:24px;height:4px;background:linear-gradient(90deg,#b2aca8 0px 4px,#b4bac0 4px 8px,#e4d6ca 8px 12px,#8c94a0 12px 16px,#acaea8 16px 20px,#b6bcc4 20px 24px)"></div>
<div class="ab" style="left:1344px;top:572px;width:24px;height:4px;background:linear-gradient(90deg,#b2aca8 0px 4px,#b4bab8 4px 8px,#bcacaa 8px 12px,#8c94a0 12px 16px,#acaea8 16px 20px,#b6bcc4 20px 24px)"></div>
<div class="ab" style="left:1348px;top:576px;width:4px;height:4px;background:#fef2e6"></div>
<div class="ab" style="left:1352px;top:576px;width:4px;height:4px;background:#deeaf8"></div>
<div class="ab" style="left:460px;top:600px;width:908px;height:4px;background:#f8f8f8"></div>
<div class="ab" style="left:536px;top:584px;width:4px;height:16px;background:#fafafa"></div>
<div class="ab" style="left:668px;top:584px;width:4px;height:16px;background:#fafafa"></div>
<div class="ab" style="left:768px;top:584px;width:4px;height:16px;background:#fafafa"></div>
<div class="ab" style="left:868px;top:584px;width:4px;height:16px;background:#fafafa"></div>
<div class="ab" style="left:968px;top:584px;width:4px;height:16px;background:#fafafa"></div>
<div class="ab" style="left:1068px;top:584px;width:4px;height:16px;background:#fafafa"></div>
<div class="ab" style="left:1168px;top:584px;width:4px;height:16px;background:#fafafa"></div>
<div class="ab" style="left:1268px;top:584px;width:4px;height:16px;background:#fafafa"></div>
<div class="ab" style="left:512px;top:588px;width:24px;height:4px;background:linear-gradient(90deg,#b2aca8 0px 4px,#b4bac0 4px 8px,#e4d6ca 8px 12px,#8c94a0 12px 16px,#acaea8 16px 20px,#b6bcc4 20px 24px)"></div>
<div class="ab" style="left:512px;top:592px;width:24px;height:4px;background:linear-gradient(90deg,#b2aca8 0px 4px,#b4bab8 4px 8px,#bcacaa 8px 12px,#8c94a0 12px 16px,#acaea8 16px 20px,#b6bcc4 20px 24px)"></div>
<div class="ab" style="left:516px;top:596px;width:4px;height:4px;background:#fef2e6"></div>
<div class="ab" style="left:520px;top:596px;width:4px;height:4px;background:#deeaf8"></div>
<div class="ab" style="left:624px;top:588px;width:44px;height:4px;background:linear-gradient(90deg,#a5b4c8 0px 4px,#969b91 4px 8px,#a0a5af 8px 12px,#87828c 12px 16px,#919696 16px 20px,#969b91 20px 24px,#b4b9c3 24px 28px,#829baa 28px 32px,#96968c 32px 36px,#a5afbe 36px 40px,#ebdccd 40px 44px)"></div>
<div class="ab" style="left:624px;top:592px;width:44px;height:4px;background:linear-gradient(90deg,#e1d7d2 0px 4px,#878291 4px 8px,#96918c 8px 12px,#d2b9af 12px 16px,#beaaaa 16px 20px,#e1d7d2 20px 24px,#d2b9af 24px 28px,#b9c6e1 28px 32px,#d7c8be 32px 36px,#8c969b 36px 40px,#aab9d2 40px 44px)"></div>
<div class="ab" style="left:648px;top:596px;width:4px;height:4px;background:#fef2e6"></div>
<div class="ab" style="left:652px;top:596px;width:4px;height:4px;background:#deeaf8"></div>
<div class="ab" style="left:744px;top:588px;width:24px;height:4px;background:linear-gradient(90deg,#b2aca8 0px 4px,#b4bac0 4px 8px,#e4d6ca 8px 12px,#8c94a0 12px 16px,#acaea8 16px 20px,#b6bcc4 20px 24px)"></div>
<div class="ab" style="left:744px;top:592px;width:24px;height:4px;background:linear-gradient(90deg,#b2aca8 0px 4px,#b4bab8 4px 8px,#bcacaa 8px 12px,#8c94a0 12px 16px,#acaea8 16px 20px,#b6bcc4 20px 24px)"></div>
<div class="ab" style="left:748px;top:596px;width:4px;height:4px;background:#fef2e6"></div>
<div class="ab" style="left:752px;top:596px;width:4px;height:4px;background:#deeaf8"></div>
<div class="ab" style="left:844px;top:588px;width:24px;height:4px;background:linear-gradient(90deg,#b2aca8 0px 4px,#b4bac0 4px 8px,#e4d6ca 8px 12px,#8c94a0 12px 16px,#acaea8 16px 20px,#b6bcc4 20px 24px)"></div>
<div class="ab" style="left:844px;top:592px;width:24px;height:4px;background:linear-gradient(90deg,#b2aca8 0px 4px,#b4bab8 4px 8px,#bcacaa 8px 12px,#8c94a0 12px 16px,#acaea8 16px 20px,#b6bcc4 20px 24px)"></div>
<div class="ab" style="left:848px;top:596px;width:4px;height:4px;background:#fef2e6"></div>
<div class="ab" style="left:852px;top:596px;width:4px;height:4px;background:#deeaf8"></div>
<div class="ab" style="left:944px;top:588px;width:24px;height:4px;background:linear-gradient(90deg,#b2aca8 0px 4px,#b4bac0 4px 8px,#e4d6ca 8px 12px,#8c94a0 12px 16px,#acaea8 16px 20px,#b6bcc4 20px 24px)"></div>
<div class="ab" style="left:944px;top:592px;width:24px;height:4px;background:linear-gradient(90deg,#b2aca8 0px 4px,#b4bab8 4px 8px,#bcacaa 8px 12px,#8c94a0 12px 16px,#acaea8 16px 20px,#b6bcc4 20px 24px)"></div>
<div class="ab" style="left:948px;top:596px;width:4px;height:4px;background:#fef2e6"></div>
<div class="ab" style="left:952px;top:596px;width:4px;height:4px;background:#deeaf8"></div>
<div class="ab" style="left:1044px;top:588px;width:24px;height:4px;background:linear-gradient(90deg,#b2aca8 0px 4px,#b4bac0 4px 8px,#e4d6ca 8px 12px,#8c94a0 12px 16px,#acaea8 16px 20px,#b6bcc4 20px 24px)"></div>
<div class="ab" style="left:1044px;top:592px;width:24px;height:4px;background:linear-gradient(90deg,#b2aca8 0px 4px,#b4bab8 4px 8px,#bcacaa 8px 12px,#8c94a0 12px 16px,#acaea8 16px 20px,#b6bcc4 20px 24px)"></div>
<div class="ab" style="left:1048px;top:596px;width:4px;height:4px;background:#fef2e6"></div>
<div class="ab" style="left:1052px;top:596px;width:4px;height:4px;background:#deeaf8"></div>
<div class="ab" style="left:1144px;top:588px;width:24px;height:4px;background:linear-gradient(90deg,#b2aca8 0px 4px,#b4bac0 4px 8px,#e4d6ca 8px 12px,#8c94a0 12px 16px,#acaea8 16px 20px,#b6bcc4 20px 24px)"></div>
<div class="ab" style="left:1144px;top:592px;width:24px;height:4px;background:linear-gradient(90deg,#b2aca8 0px 4px,#b4bab8 4px 8px,#bcacaa 8px 12px,#8c94a0 12px 16px,#acaea8 16px 20px,#b6bcc4 20px 24px)"></div>
<div class="ab" style="left:1148px;top:596px;width:4px;height:4px;background:#fef2e6"></div>
<div class="ab" style="left:1152px;top:596px;width:4px;height:4px;background:#deeaf8"></div>
<div class="ab" style="left:1244px;top:588px;width:24px;height:4px;background:linear-gradient(90deg,#b2aca8 0px 4px,#b4bac0 4px 8px,#e4d6ca 8px 12px,#8c94a0 12px 16px,#acaea8 16px 20px,#b6bcc4 20px 24px)"></div>
<div class="ab" style="left:1244px;top:592px;width:24px;height:4px;background:linear-gradient(90deg,#b2aca8 0px 4px,#b4bab8 4px 8px,#bcacaa 8px 12px,#8c94a0 12px 16px,#acaea8 16px 20px,#b6bcc4 20px 24px)"></div>
<div class="ab" style="left:1248px;top:596px;width:4px;height:4px;background:#fef2e6"></div>
<div class="ab" style="left:1252px;top:596px;width:4px;height:4px;background:#deeaf8"></div>
<div class="ab" style="left:1344px;top:588px;width:24px;height:4px;background:linear-gradient(90deg,#b2aca8 0px 4px,#b4bac0 4px 8px,#e4d6ca 8px 12px,#8c94a0 12px 16px,#acaea8 16px 20px,#b6bcc4 20px 24px)"></div>
<div class="ab" style="left:1344px;top:592px;width:24px;height:4px;background:linear-gradient(90deg,#b2aca8 0px 4px,#b4bab8 4px 8px,#bcacaa 8px 12px,#8c94a0 12px 16px,#acaea8 16px 20px,#b6bcc4 20px 24px)"></div>
<div class="ab" style="left:1348px;top:596px;width:4px;height:4px;background:#fef2e6"></div>
<div class="ab" style="left:1352px;top:596px;width:4px;height:4px;background:#deeaf8"></div>
<div class="ab" style="left:460px;top:620px;width:908px;height:4px;background:#f8f8f8"></div>
<div class="ab" style="left:536px;top:604px;width:4px;height:16px;background:#fafafa"></div>
<div class="ab" style="left:668px;top:604px;width:4px;height:16px;background:#fafafa"></div>
<div class="ab" style="left:768px;top:604px;width:4px;height:16px;background:#fafafa"></div>
<div class="ab" style="left:868px;top:604px;width:4px;height:16px;background:#fafafa"></div>
<div class="ab" style="left:968px;top:604px;width:4px;height:16px;background:#fafafa"></div>
<div class="ab" style="left:1068px;top:604px;width:4px;height:16px;background:#fafafa"></div>
<div class="ab" style="left:1168px;top:604px;width:4px;height:16px;background:#fafafa"></div>
<div class="ab" style="left:1268px;top:604px;width:4px;height:16px;background:#fafafa"></div>
<div class="ab" style="left:484px;top:608px;width:52px;height:4px;background:linear-gradient(90deg,#9b9b96 0px 4px,#a0a5af 4px 8px,#b9c6e1 8px 12px,#87828c 12px 16px,#b4b9c3 16px 20px,#dce1e1 20px 24px,#969191 24px 28px,#b9c3d7 28px 32px,#9b96a0 32px 36px,#96968c 36px 40px,#c8b9a0 40px 44px,#ded8d2 44px 48px,#a5aab4 48px 52px)"></div>
<div class="ab" style="left:484px;top:612px;width:52px;height:4px;background:linear-gradient(90deg,#a0a09b 0px 4px,#a5b4c8 4px 8px,#a5b4c8 8px 12px,#aaaaa5 12px 16px,#87828c 16px 20px,#e6e1dc 20px 24px,#9b96a0 24px 28px,#a0a5af 28px 32px,#8c9196 32px 36px,#969191 36px 40px,#969ba5 40px 44px,#969b91 44px 48px,#9b9b96 48px 52px)"></div>
<div class="ab" style="left:516px;top:616px;width:4px;height:4px;background:#fef2e6"></div>
<div class="ab" style="left:520px;top:616px;width:4px;height:4px;background:#deeaf8"></div>
<div class="ab" style="left:612px;top:608px;width:56px;height:4px;background:linear-gradient(90deg,#969ba5 0px 4px,#b4b9c3 4px 8px,#a5b4c8 8px 12px,#e6e1dc 12px 16px,#829baa 16px 20px,#aaaaa5 20px 24px,#a0a09b 24px 28px,#829baa 28px 32px,#dcd7d2 32px 36px,#969191 36px 40px,#a0a09b 40px 44px,#cdc3c8 44px 48px,#8c9196 48px 52px,#a0a5af 52px 56px)"></div>
<div class="ab" style="left:612px;top:612px;width:56px;height:4px;background:linear-gradient(90deg,#aaafaf 0px 4px,#cdc3c8 4px 8px,#a0a09b 8px 12px,#b9c6e1 12px 16px,#aab9d2 16px 20px,#b4b9c3 20px 24px,#ded8d2 24px 28px,#96918c 28px 32px,#cdc3af 32px 36px,#827364 36px 40px,#cdc3c8 40px 44px,#a0a5af 44px 48px,#a5aab4 48px 52px,#b9c6e1 52px 56px)"></div>
<div class="ab" style="left:648px;top:616px;width:4px;height:4px;background:#fef2e6"></div>
<div class="ab" style="left:652px;top:616px;width:4px;height:4px;background:#deeaf8"></div>
<div class="ab" style="left:736px;top:608px;width:32px;height:4px;background:linear-gradient(90deg,#beaaaa 0px 4px,#ebdccd 4px 8px,#969ba5 8px 12px,#91878c 12px 16px,#cdc3af 16px 20px,#d2b9af 20px 24px,#96918c 24px 28px,#cdc3c8 28px 32px)"></div>
<div class="ab" style="left:736px;top:612px;width:32px;height:4px;background:linear-gradient(90deg,#e1d7d2 0px 4px,#9b96a0 4px 8px,#a5aab4 8px 12px,#969ba5 12px 16px,#96918c 16px 20px,#dce6f0 20px 24px,#969b91 24px 28px,#dce6f0 28px 32px)"></div>
<div class="ab" style="left:748px;top:616px;width:4px;height:4px;background:#fef2e6"></div>
<div class="ab" style="left:752px;top:616px;width:4px;height:4px;background:#deeaf8"></div>
<div class="ab" style="left:836px;top:608px;width:32px;height:4px;background:linear-gradient(90deg,#dce6f0 0px 4px,#96918c 4px 8px,#969b91 8px 12px,#9b9b96 12px 16px,#a0a5af 16px 20px,#8c969b 20px 24px,#dce1e1 24px 28px,#b4b9c3 28px 32px)"></div>
<div class="ab" style="left:836px;top:612px;width:32px;height:4px;background:linear-gradient(90deg,#aaafaf 0px 4px,#787d87 4px 8px,#dce6f0 8px 12px,#8c969b 12px 16px,#aab9d2 16px 20px,#a5b4c8 20px 24px,#878291 24px 28px,#787d87 28px 32px)"></div>
<div class="ab" style="left:848px;top:616px;width:4px;height:4px;background:#fef2e6"></div>
<div class="ab" style="left:852px;top:616px;width:4px;height:4px;background:#deeaf8"></div>
<div class="ab" style="left:944px;top:608px;width:24px;height:4px;background:linear-gradient(90deg,#b2aca8 0px 4px,#b4bac0 4px 8px,#e4d6ca 8px 12px,#8c94a0 12px 16px,#acaea8 16px 20px,#b6bcc4 20px 24px)"></div>
<div class="ab" style="left:944px;top:612px;width:24px;height:4px;background:linear-gradient(90deg,#b2aca8 0px 4px,#b4bab8 4px 8px,#bcacaa 8px 12px,#8c94a0 12px 16px,#acaea8 16px 20px,#b6bcc4 20px 24px)"></div>
<div class="ab" style="left:948px;top:616px;width:4px;height:4px;background:#fef2e6"></div>
<div class="ab" style="left:952px;top:616px;width:4px;height:4px;background:#deeaf8"></div>
<div class="ab" style="left:1044px;top:608px;width:24px;height:4px;background:linear-gradient(90deg,#b2aca8 0px 4px,#b4bac0 4px 8px,#e4d6ca 8px 12px,#8c94a0 12px 16px,#acaea8 16px 20px,#b6bcc4 20px 24px)"></div>
<div class="ab" style="left:1044px;top:612px;width:24px;height:4px;background:linear-gradient(90deg,#b2aca8 0px 4px,#b4bab8 4px 8px,#bcacaa 8px 12px,#8c94a0 12px 16px,#acaea8 16px 20px,#b6bcc4 20px 24px)"></div>
<div class="ab" style="left:1048px;top:616px;width:4px;height:4px;background:#fef2e6"></div>
<div class="ab" style="left:1052px;top:616px;width:4px;height:4px;background:#deeaf8"></div>
<div class="ab" style="left:1144px;top:608px;width:24px;height:4px;background:linear-gradient(90deg,#b2aca8 0px 4px,#b4bac0 4px 8px,#e4d6ca 8px 12px,#8c94a0 12px 16px,#acaea8 16px 20px,#b6bcc4 20px 24px)"></div>
<div class="ab" style="left:1144px;top:612px;width:24px;height:4px;background:linear-gradient(90deg,#b2aca8 0px 4px,#b4bab8 4px 8px,#bcacaa 8px 12px,#8c94a0 12px 16px,#acaea8 16px 20px,#b6bcc4 20px 24px)"></div>
<div class="ab" style="left:1148px;top:616px;width:4px;height:4px;background:#fef2e6"></div>
<div class="ab" style="left:1152px;top:616px;width:4px;height:4px;background:#deeaf8"></div>
<div class="ab" style="left:1244px;top:608px;width:24px;height:4px;background:linear-gradient(90deg,#b2aca8 0px 4px,#b4bac0 4px 8px,#e4d6ca 8px 12px,#8c94a0 12px 16px,#acaea8 16px 20px,#b6bcc4 20px 24px)"></div>
<div class="ab" style="left:1244px;top:612px;width:24px;height:4px;background:linear-gradient(90deg,#b2aca8 0px 4px,#b4bab8 4px 8px,#bcacaa 8px 12px,#8c94a0 12px 16px,#acaea8 16px 20px,#b6bcc4 20px 24px)"></div>
<div class="ab" style="left:1248px;top:616px;width:4px;height:4px;background:#fef2e6"></div>
<div class="ab" style="left:1252px;top:616px;width:4px;height:4px;background:#deeaf8"></div>
<div class="ab" style="left:1340px;top:608px;width:28px;height:4px;background:linear-gradient(90deg,#b9c6e1 0px 4px,#ded8d2 4px 8px,#e1d7d2 8px 12px,#cdc3af 12px 16px,#a5aab4 16px 20px,#beaaaa 20px 24px,#969691 24px 28px)"></div>
<div class="ab" style="left:1340px;top:612px;width:28px;height:4px;background:linear-gradient(90deg,#cdc3af 0px 4px,#a5aab4 4px 8px,#ebdccd 8px 12px,#b9c3d7 12px 16px,#a0a5af 16px 20px,#8791a0 20px 24px,#beaaaa 24px 28px)"></div>
<div class="ab" style="left:1348px;top:616px;width:4px;height:4px;background:#fef2e6"></div>
<div class="ab" style="left:1352px;top:616px;width:4px;height:4px;background:#deeaf8"></div>
<div class="ab" style="left:460px;top:640px;width:908px;height:4px;background:#f8f8f8"></div>
<div class="ab" style="left:536px;top:624px;width:4px;height:16px;background:#fafafa"></div>
<div class="ab" style="left:668px;top:624px;width:4px;height:16px;background:#fafafa"></div>
<div class="ab" style="left:768px;top:624px;width:4px;height:16px;background:#fafafa"></div>
<div class="ab" style="left:868px;top:624px;width:4px;height:16px;background:#fafafa"></div>
<div class="ab" style="left:968px;top:624px;width:4px;height:16px;background:#fafafa"></div>
<div class="ab" style="left:1068px;top:624px;width:4px;height:16px;background:#fafafa"></div>
<div class="ab" style="left:1168px;top:624px;width:4px;height:16px;background:#fafafa"></div>
<div class="ab" style="left:1268px;top:624px;width:4px;height:16px;background:#fafafa"></div>
<div class="ab" style="left:512px;top:628px;width:24px;height:4px;background:linear-gradient(90deg,#b2aca8 0px 4px,#b4bac0 4px 8px,#e4d6ca 8px 12px,#8c94a0 12px 16px,#acaea8 16px 20px,#b6bcc4 20px 24px)"></div>
<div class="ab" style="left:512px;top:632px;width:24px;height:4px;background:linear-gradient(90deg,#b2aca8 0px 4px,#b4bab8 4px 8px,#bcacaa 8px 12px,#8c94a0 12px 16px,#acaea8 16px 20px,#b6bcc4 20px 24px)"></div>
<div class="ab" style="left:516px;top:636px;width:4px;height:4px;background:#fef2e6"></div>
<div class="ab" style="left:520px;top:636px;width:4px;height:4px;background:#deeaf8"></div>
<div class="ab" style="left:628px;top:628px;width:40px;height:4px;background:linear-gradient(90deg,#8791a0 0px 4px,#b4b9c3 4px 8px,#d2b9af 8px 12px,#d7c8be 12px 16px,#969ba5 16px 20px,#dce6f0 20px 24px,#8c969b 24px 28px,#9b9b96 28px 32px,#dce6f0 32px 36px,#829baa 36px 40px)"></div>
<div class="ab" style="left:628px;top:632px;width:40px;height:4px;background:linear-gradient(90deg,#a0a09b 0px 4px,#e1d7d2 4px 8px,#e6e1dc 8px 12px,#cdc3c8 12px 16px,#787d87 16px 20px,#a5aab4 20px 24px,#a0a09b 24px 28px,#9b9b96 28px 32px,#969ba5 32px 36px,#969191 36px 40px)"></div>
<div class="ab" style="left:648px;top:636px;width:4px;height:4px;background:#fef2e6"></div>
<div class="ab" style="left:652px;top:636px;width:4px;height:4px;background:#deeaf8"></div>
<div class="ab" style="left:744px;top:628px;width:24px;height:4px;background:linear-gradient(90deg,#b2aca8 0px 4px,#b4bac0 4px 8px,#e4d6ca 8px 12px,#8c94a0 12px 16px,#acaea8 16px 20px,#b6bcc4 20px 24px)"></div>
<div class="ab" style="left:744px;top:632px;width:24px;height:4px;background:linear-gradient(90deg,#b2aca8 0px 4px,#b4bab8 4px 8px,#bcacaa 8px 12px,#8c94a0 12px 16px,#acaea8 16px 20px,#b6bcc4 20px 24px)"></div>
<div class="ab" style="left:748px;top:636px;width:4px;height:4px;background:#fef2e6"></div>
<div class="ab" style="left:752px;top:636px;width:4px;height:4px;background:#deeaf8"></div>
<div class="ab" style="left:844px;top:628px;width:24px;height:4px;background:linear-gradient(90deg,#b2aca8 0px 4px,#b4bac0 4px 8px,#e4d6ca 8px 12px,#8c94a0 12px 16px,#acaea8 16px 20px,#b6bcc4 20px 24px)"></div>
<div class="ab" style="left:844px;top:632px;width:24px;height:4px;background:linear-gradient(90deg,#b2aca8 0px 4px,#b4bab8 4px 8px,#bcacaa 8px 12px,#8c94a0 12px 16px,#acaea8 16px 20px,#b6bcc4 20px 24px)"></div>
<div class="ab" style="left:848px;top:636px;width:4px;height:4px;background:#fef2e6"></div>
<div class="ab" style="left:852px;top:636px;width:4px;height:4px;background:#deeaf8"></div>
<div class="ab" style="left:944px;top:628px;width:24px;height:4px;background:linear-gradient(90deg,#b2aca8 0px 4px,#b4bac0 4px 8px,#e4d6ca 8px 12px,#8c94a0 12px 16px,#acaea8 16px 20px,#b6bcc4 20px 24px)"></div>
<div class="ab" style="left:944px;top:632px;width:24px;height:4px;background:linear-gradient(90deg,#b2aca8 0px 4px,#b4bab8 4px 8px,#bcacaa 8px 12px,#8c94a0 12px 16px,#acaea8 16px 20px,#b6bcc4 20px 24px)"></div>
<div class="ab" style="left:948px;top:636px;width:4px;height:4px;background:#fef2e6"></div>
<div class="ab" style="left:952px;top:636px;width:4px;height:4px;background:#deeaf8"></div>
<div class="ab" style="left:1044px;top:628px;width:24px;height:4px;background:linear-gradient(90deg,#b2aca8 0px 4px,#b4bac0 4px 8px,#e4d6ca 8px 12px,#8c94a0 12px 16px,#acaea8 16px 20px,#b6bcc4 20px 24px)"></div>
<div class="ab" style="left:1044px;top:632px;width:24px;height:4px;background:linear-gradient(90deg,#b2aca8 0px 4px,#b4bab8 4px 8px,#bcacaa 8px 12px,#8c94a0 12px 16px,#acaea8 16px 20px,#b6bcc4 20px 24px)"></div>
<div class="ab" style="left:1048px;top:636px;width:4px;height:4px;background:#fef2e6"></div>
<div class="ab" style="left:1052px;top:636px;width:4px;height:4px;background:#deeaf8"></div>
<div class="ab" style="left:1144px;top:628px;width:24px;height:4px;background:linear-gradient(90deg,#b2aca8 0px 4px,#b4bac0 4px 8px,#e4d6ca 8px 12px,#8c94a0 12px 16px,#acaea8 16px 20px,#b6bcc4 20px 24px)"></div>
<div class="ab" style="left:1144px;top:632px;width:24px;height:4px;background:linear-gradient(90deg,#b2aca8 0px 4px,#b4bab8 4px 8px,#bcacaa 8px 12px,#8c94a0 12px 16px,#acaea8 16px 20px,#b6bcc4 20px 24px)"></div>
<div class="ab" style="left:1148px;top:636px;width:4px;height:4px;background:#fef2e6"></div>
<div class="ab" style="left:1152px;top:636px;width:4px;height:4px;background:#deeaf8"></div>
<div class="ab" style="left:1244px;top:628px;width:24px;height:4px;background:linear-gradient(90deg,#b2aca8 0px 4px,#b4bac0 4px 8px,#e4d6ca 8px 12px,#8c94a0 12px 16px,#acaea8 16px 20px,#b6bcc4 20px 24px)"></div>
<div class="ab" style="left:1244px;top:632px;width:24px;height:4px;background:linear-gradient(90deg,#b2aca8 0px 4px,#b4bab8 4px 8px,#bcacaa 8px 12px,#8c94a0 12px 16px,#acaea8 16px 20px,#b6bcc4 20px 24px)"></div>
<div class="ab" style="left:1248px;top:636px;width:4px;height:4px;background:#fef2e6"></div>
<div class="ab" style="left:1252px;top:636px;width:4px;height:4px;background:#deeaf8"></div>
<div class="ab" style="left:1344px;top:628px;width:24px;height:4px;background:linear-gradient(90deg,#b2aca8 0px 4px,#b4bac0 4px 8px,#e4d6ca 8px 12px,#8c94a0 12px 16px,#acaea8 16px 20px,#b6bcc4 20px 24px)"></div>
<div class="ab" style="left:1344px;top:632px;width:24px;height:4px;background:linear-gradient(90deg,#b2aca8 0px 4px,#b4bab8 4px 8px,#bcacaa 8px 12px,#8c94a0 12px 16px,#acaea8 16px 20px,#b6bcc4 20px 24px)"></div>
<div class="ab" style="left:1348px;top:636px;width:4px;height:4px;background:#fef2e6"></div>
<div class="ab" style="left:1352px;top:636px;width:4px;height:4px;background:#deeaf8"></div>
<div class="ab" style="left:460px;top:662px;width:908px;height:1px;background:#f0f0f0"></div>
<div class="ab" style="left:536px;top:644px;width:4px;height:16px;background:#fafafa"></div>
<div class="ab" style="left:668px;top:644px;width:4px;height:16px;background:#fafafa"></div>
<div class="ab" style="left:768px;top:644px;width:4px;height:16px;background:#fafafa"></div>
<div class="ab" style="left:868px;top:644px;width:4px;height:16px;background:#fafafa"></div>
<div class="ab" style="left:968px;top:644px;width:4px;height:16px;background:#fafafa"></div>
<div class="ab" style="left:1068px;top:644px;width:4px;height:16px;background:#fafafa"></div>
<div class="ab" style="left:1168px;top:644px;width:4px;height:16px;background:#fafafa"></div>
<div class="ab" style="left:1268px;top:644px;width:4px;height:16px;background:#fafafa"></div>
<div class="ab" style="left:512px;top:648px;width:24px;height:4px;background:linear-gradient(90deg,#b2aca8 0px 4px,#b4bac0 4px 8px,#e4d6ca 8px 12px,#8c94a0 12px 16px,#acaea8 16px 20px,#b6bcc4 20px 24px)"></div>
<div class="ab" style="left:512px;top:652px;width:24px;height:4px;background:linear-gradient(90deg,#b2aca8 0px 4px,#b4bab8 4px 8px,#bcacaa 8px 12px,#8c94a0 12px 16px,#acaea8 16px 20px,#b6bcc4 20px 24px)"></div>
<div class="ab" style="left:516px;top:656px;width:4px;height:4px;background:#fef2e6"></div>
<div class="ab" style="left:520px;top:656px;width:4px;height:4px;background:#deeaf8"></div>
<div class="ab" style="left:616px;top:648px;width:52px;height:4px;background:linear-gradient(90deg,#787d87 0px 4px,#aaafaf 4px 8px,#aaafaf 8px 12px,#8791a0 12px 16px,#829baa 16px 20px,#e6e1dc 20px 24px,#d7c8be 24px 28px,#8791a0 28px 32px,#b9c3d7 32px 36px,#969191 36px 40px,#969b91 40px 44px,#a0a09b 44px 48px,#e6e1dc 48px 52px)"></div>
<div class="ab" style="left:616px;top:652px;width:52px;height:4px;background:linear-gradient(90deg,#827364 0px 4px,#e6e1dc 4px 8px,#dcd7d2 8px 12px,#e6e1dc 12px 16px,#a5afbe 16px 20px,#827364 20px 24px,#8c969b 24px 28px,#8c9196 28px 32px,#969b91 32px 36px,#ebdccd 36px 40px,#8c9196 40px 44px,#9b9b96 44px 48px,#beaaaa 48px 52px)"></div>
<div class="ab" style="left:648px;top:656px;width:4px;height:4px;background:#fef2e6"></div>
<div class="ab" style="left:652px;top:656px;width:4px;height:4px;background:#deeaf8"></div>
<div class="ab" style="left:744px;top:648px;width:24px;height:4px;background:linear-gradient(90deg,#b2aca8 0px 4px,#b4bac0 4px 8px,#e4d6ca 8px 12px,#8c94a0 12px 16px,#acaea8 16px 20px,#b6bcc4 20px 24px)"></div>
<div class="ab" style="left:744px;top:652px;width:24px;height:4px;background:linear-gradient(90deg,#b2aca8 0px 4px,#b4bab8 4px 8px,#bcacaa 8px 12px,#8c94a0 12px 16px,#acaea8 16px 20px,#b6bcc4 20px 24px)"></div>
<div class="ab" style="left:748px;top:656px;width:4px;height:4px;background:#fef2e6"></div>
<div class="ab" style="left:752px;top:656px;width:4px;height:4px;background:#deeaf8"></div>
<div class="ab" style="left:840px;top:648px;width:28px;height:4px;background:linear-gradient(90deg,#b9c6e1 0px 4px,#a5aab4 4px 8px,#dce6f0 8px 12px,#827364 12px 16px,#9b96a0 16px 20px,#a5b4c8 20px 24px,#96918c 24px 28px)"></div>
<div class="ab" style="left:840px;top:652px;width:28px;height:4px;background:linear-gradient(90deg,#969b91 0px 4px,#aaafaf 4px 8px,#dce6f0 8px 12px,#96968c 12px 16px,#827364 16px 20px,#829baa 20px 24px,#e6e1dc 24px 28px)"></div>
<div class="ab" style="left:848px;top:656px;width:4px;height:4px;background:#fef2e6"></div>
<div class="ab" style="left:852px;top:656px;width:4px;height:4px;background:#deeaf8"></div>
<div class="ab" style="left:944px;top:648px;width:24px;height:4px;background:linear-gradient(90deg,#b2aca8 0px 4px,#b4bac0 4px 8px,#e4d6ca 8px 12px,#8c94a0 12px 16px,#acaea8 16px 20px,#b6bcc4 20px 24px)"></div>
<div class="ab" style="left:944px;top:652px;width:24px;height:4px;background:linear-gradient(90deg,#b2aca8 0px 4px,#b4bab8 4px 8px,#bcacaa 8px 12px,#8c94a0 12px 16px,#acaea8 16px 20px,#b6bcc4 20px 24px)"></div>
<div class="ab" style="left:948px;top:656px;width:4px;height:4px;background:#fef2e6"></div>
<div class="ab" style="left:952px;top:656px;width:4px;height:4px;background:#deeaf8"></div>
<div class="ab" style="left:1044px;top:648px;width:24px;height:4px;background:linear-gradient(90deg,#b2aca8 0px 4px,#b4bac0 4px 8px,#e4d6ca 8px 12px,#8c94a0 12px 16px,#acaea8 16px 20px,#b6bcc4 20px 24px)"></div>
<div class="ab" style="left:1044px;top:652px;width:24px;height:4px;background:linear-gradient(90deg,#b2aca8 0px 4px,#b4bab8 4px 8px,#bcacaa 8px 12px,#8c94a0 12px 16px,#acaea8 16px 20px,#b6bcc4 20px 24px)"></div>
<div class="ab" style="left:1048px;top:656px;width:4px;height:4px;background:#fef2e6"></div>
<div class="ab" style="left:1052px;top:656px;width:4px;height:4px;background:#deeaf8"></div>
<div class="ab" style="left:1144px;top:648px;width:24px;height:4px;background:linear-gradient(90deg,#b2aca8 0px 4px,#b4bac0 4px 8px,#e4d6ca 8px 12px,#8c94a0 12px 16px,#acaea8 16px 20px,#b6bcc4 20px 24px)"></div>
<div class="ab" style="left:1144px;top:652px;width:24px;height:4px;background:linear-gradient(90deg,#b2aca8 0px 4px,#b4bab8 4px 8px,#bcacaa 8px 12px,#8c94a0 12px 16px,#acaea8 16px 20px,#b6bcc4 20px 24px)"></div>
<div class="ab" style="left:1148px;top:656px;width:4px;height:4px;background:#fef2e6"></div>
<div class="ab" style="left:1152px;top:656px;width:4px;height:4px;background:#deeaf8"></div>
<div class="ab" style="left:1244px;top:648px;width:24px;height:4px;background:linear-gradient(90deg,#b2aca8 0px 4px,#b4bac0 4px 8px,#e4d6ca 8px 12px,#8c94a0 12px 16px,#acaea8 16px 20px,#b6bcc4 20px 24px)"></div>
<div class="ab" style="left:1244px;top:652px;width:24px;height:4px;background:linear-gradient(90deg,#b2aca8 0px 4px,#b4bab8 4px 8px,#bcacaa 8px 12px,#8c94a0 12px 16px,#acaea8 16px 20px,#b6bcc4 20px 24px)"></div>
<div class="ab" style="left:1248px;top:656px;width:4px;height:4px;background:#fef2e6"></div>
<div class="ab" style="left:1252px;top:656px;width:4px;height:4px;background:#deeaf8"></div>
<div class="ab" style="left:1340px;top:648px;width:28px;height:4px;background:linear-gradient(90deg,#e6e1dc 0px 4px,#919696 4px 8px,#969691 8px 12px,#878291 12px 16px,#cdc3c8 16px 20px,#e1d7d2 20px 24px,#91878c 24px 28px)"></div>
<div class="ab" style="left:1340px;top:652px;width:28px;height:4px;background:linear-gradient(90deg,#969691 0px 4px,#a5b4c8 4px 8px,#969691 8px 12px,#9b9b96 12px 16px,#8791a0 16px 20px,#8c9196 20px 24px,#e6e1dc 24px 28px)"></div>
<div class="ab" style="left:1348px;top:656px;width:4px;height:4px;background:#fef2e6"></div>
<div class="ab" style="left:1352px;top:656px;width:4px;height:4px;background:#deeaf8"></div>
<div class="ab" style="left:22px;top:163px;width:1px;height:499px;background:#e3e3e3"></div>
<div class="ab" style="left:176px;top:188px;width:260px;height:4px;background:linear-gradient(90deg,#495943 0px 4px,#63654f 4px 8px,#6f7a53 8px 12px,#728558 12px 16px,#748b5e 16px 20px,#68705f 20px 24px,#a2b47e 24px 28px,#526454 28px 32px,#485149 32px 36px,#838b5e 36px 40px,#747d63 40px 44px,#6e7a60 44px 48px,#90966b 48px 52px,#6d7d52 52px 56px,#7b805a 56px 60px,#686a4b 60px 64px,#514e43 64px 68px,#475344 68px 72px,#859f70 72px 76px,#70825a 76px 80px,#6c7e58 80px 84px,#7a8769 84px 88px,#677151 88px 92px,#69815e 92px 96px,#7c8858 96px 100px,#7d876f 100px 104px,#6e7965 104px 108px,#7b7c65 108px 112px,#858d5e 112px 116px,#71755b 116px 120px,#8a936e 120px 124px,#83956e 124px 128px,#789964 128px 132px,#565e48 132px 136px,#7a7e5d 136px 140px,#767a5d 140px 144px,#848f6b 144px 148px,#78835b 148px 152px,#798160 152px 156px,#60694d 156px 160px,#80806b 160px 164px,#6e6e56 164px 168px,#818b68 168px 172px,#778268 172px 176px,#6c7f62 176px 180px,#5e6357 180px 184px,#9ab370 184px 188px,#768658 188px 192px,#8b886b 192px 196px,#7b9769 196px 200px,#7b8062 200px 204px,#7a7e5a 204px 208px,#5c5451 208px 212px,#46493b 212px 216px,#6d7954 216px 220px,#4e4b4a 220px 224px,#514b3b 224px 228px,#564e4d 228px 232px,#8b9872 232px 236px,#535e43 236px 240px,#58514c 240px 244px,#415249 244px 248px,#666854 248px 252px,#a2b47e 252px 256px,#a2b47e 256px 260px)"></div>
<div class="ab" style="left:176px;top:192px;width:260px;height:4px;background:linear-gradient(90deg,#535046 0px 4px,#586755 4px 8px,#3b4330 8px 12px,#5c5451 12px 16px,#6b7251 16px 20px,#5c6556 20px 24px,#8fa769 24px 28px,#4f5c47 28px 32px,#585543 32px 36px,#4c5e4d 36px 40px,#485b3a 40px 44px,#536043 44px 48px,#5e5f40 48px 52px,#363a30 52px 56px,#605b52 56px 60px,#6b705c 60px 64px,#3e4b44 64px 68px,#4c4e38 68px 72px,#5c5b51 72px 76px,#394437 76px 80px,#4b553d 80px 84px,#647d54 84px 88px,#535842 88px 92px,#3d4045 92px 96px,#607056 96px 100px,#4e5b43 100px 104px,#33332e 104px 108px,#5b674b 108px 112px,#566056 112px 116px,#5a6842 116px 120px,#5b584c 120px 124px,#79875b 124px 128px,#6a674f 128px 132px,#52604d 132px 136px,#394830 136px 140px,#555449 140px 144px,#656b47 144px 148px,#364041 148px 152px,#3b4a41 152px 156px,#6d6c5b 156px 160px,#67794c 160px 164px,#6c6950 164px 168px,#3e4543 168px 172px,#585445 172px 176px,#5e684f 176px 180px,#34423e 180px 184px,#a0ab79 184px 188px,#5d6650 188px 192px,#5a584d 192px 196px,#7c8657 196px 200px,#67684b 200px 204px,#73775c 204px 208px,#5c725b 208px 212px,#5d604f 212px 216px,#8a9368 216px 220px,#6b725b 220px 224px,#4a5c45 224px 228px,#766f62 228px 232px,#85876d 232px 236px,#565d4d 236px 240px,#809373 240px 244px,#4f5540 244px 248px,#697156 248px 252px,#7e875d 252px 256px,#7d9671 256px 260px)"></div>
<div class="ab" style="left:176px;top:196px;width:260px;height:4px;background:linear-gradient(90deg,#a2b47e 0px 4px,#a2b47e 4px 8px,#a2b47e 8px 12px,#829571 12px 16px,#a2b47e 16px 20px,#a2b47e 20px 24px,#a2b47e 24px 28px,#a2b47e 28px 32px,#a2b47e 32px 36px,#a2b47e 36px 40px,#908f6d 40px 44px,#9dae7b 44px 48px,#a2b47e 48px 52px,#a2b47e 52px 56px,#a2b47e 56px 60px,#a2b47e 60px 64px,#a2b47e 64px 68px,#a2b47e 68px 72px,#a2b47e 72px 76px,#a2b47e 76px 80px,#a2b47e 80px 84px,#a2b47e 84px 88px,#a2b47e 88px 92px,#a2b47e 92px 96px,#a2b47e 96px 100px,#a2b47e 100px 104px,#a2b47e 104px 108px,#a2b47e 108px 112px,#a2b47e 112px 116px,#a2b47e 116px 120px,#a2b47e 120px 124px,#a2b47e 124px 128px,#a2b47e 128px 132px,#a2b47e 132px 136px,#a2b47e 136px 140px,#7c8b71 140px 144px,#a2b47e 144px 148px,#a2b47e 148px 152px,#a2b47e 152px 156px,#a2b47e 156px 160px,#a2b47e 160px 164px,#a2b47e 164px 168px,#a2b47e 168px 172px,#a2b47e 172px 176px,#a2b47e 176px 180px,#a2b47e 180px 184px,#a2b47e 184px 188px,#839469 188px 192px,#8b986e 192px 196px,#a2b47e 196px 200px,#a2b47e 200px 204px,#99a46f 204px 208px,#8ca079 208px 212px,#a2b47e 212px 216px,#a2b47e 216px 220px,#a2b47e 220px 224px,#a2b47e 224px 228px,#889a73 228px 232px,#9fb07c 232px 236px,#a2b47e 236px 240px,#a2b47e 240px 244px,#a2b47e 244px 248px,#a2b47e 248px 252px,#a2b47e 252px 256px,#a2b47e 256px 260px)"></div>
<div class="ab" style="left:268px;top:208px;width:48px;height:4px;background:linear-gradient(90deg,#4a5c43 0px 4px,#62534d 4px 8px,#7d7161 8px 12px,#84807a 12px 16px,#c3d0c0 16px 20px,#677857 20px 24px,#b0a599 24px 28px,#606973 28px 32px,#535f48 32px 36px,#7a7876 36px 40px,#817c6b 40px 44px,#757766 44px 48px)"></div>
<div class="ab" style="left:268px;top:212px;width:48px;height:4px;background:linear-gradient(90deg,#536557 0px 4px,#5d4f51 4px 8px,#56514f 8px 12px,#656f5a 12px 16px,#c1dca6 16px 20px,#6c6b5e 20px 24px,#6a766f 24px 28px,#888d6a 28px 32px,#575463 32px 36px,#7d6c6c 36px 40px,#7d726e 40px 44px,#5d5d4b 44px 48px)"></div>
<div class="ab" style="left:320px;top:208px;width:56px;height:4px;background:linear-gradient(90deg,#aaa496 0px 4px,#bad3af 4px 8px,#73735f 8px 12px,#8d8b7b 12px 16px,#888b85 16px 20px,#969b7d 20px 24px,#98aa9f 24px 28px,#9cb38d 28px 32px,#8c8a7f 32px 36px,#b8d1b7 36px 40px,#9da8a4 40px 44px,#7d8679 44px 48px,#7f897c 48px 52px,#a4bc92 52px 56px)"></div>
<div class="ab" style="left:320px;top:212px;width:56px;height:4px;background:linear-gradient(90deg,#455b48 0px 4px,#706e67 4px 8px,#6a696e 8px 12px,#737a70 12px 16px,#756c62 16px 20px,#50463b 20px 24px,#767072 24px 28px,#7a967e 28px 32px,#758a69 32px 36px,#787877 36px 40px,#81846f 40px 44px,#74645e 44px 48px,#707d68 48px 52px,#899076 52px 56px)"></div>
<div class="ab" style="left:276px;top:528px;width:124px;height:4px;background:linear-gradient(90deg,#65624f 0px 4px,#697860 4px 8px,#86a084 8px 12px,#96a094 12px 16px,#919e82 16px 20px,#9da79b 20px 24px,#888b76 24px 28px,#93918e 28px 32px,#d0dbab 32px 36px,#707664 36px 40px,#949a85 40px 44px,#a9ab9c 44px 48px,#788d7d 48px 52px,#b3b193 52px 56px,#a0ad89 56px 60px,#808671 60px 64px,#8a9782 64px 68px,#788767 68px 72px,#958c72 72px 76px,#a8a290 76px 80px,#899a8a 80px 84px,#8e7e84 84px 88px,#7b847f 88px 92px,#a4ac9c 92px 96px,#97ae89 96px 100px,#b0b699 100px 104px,#8eaa80 104px 108px,#767861 108px 112px,#a9b399 112px 116px,#d1dbbd 116px 120px,#d1dbbd 120px 124px)"></div>
<div class="ab" style="left:276px;top:532px;width:124px;height:4px;background:linear-gradient(90deg,#61675f 0px 4px,#687e75 4px 8px,#4d533d 8px 12px,#6f595b 12px 16px,#68756f 16px 20px,#4d4840 20px 24px,#3d453d 24px 28px,#778b76 28px 32px,#bcbeb2 32px 36px,#484c4e 36px 40px,#616b5d 40px 44px,#818472 44px 48px,#5a4a47 48px 52px,#476156 52px 56px,#564e4a 56px 60px,#778984 60px 64px,#69665d 64px 68px,#56685d 68px 72px,#5d574e 72px 76px,#5d725f 76px 80px,#6e6f63 80px 84px,#667355 84px 88px,#6e7f70 88px 92px,#a2ab8d 92px 96px,#777571 96px 100px,#91877f 100px 104px,#728376 104px 108px,#5d5d58 108px 112px,#72715a 112px 116px,#979b81 116px 120px,#8eac8e 120px 124px)"></div>
<div class="ab" style="left:120px;top:52px;width:100px;height:4px;background:linear-gradient(90deg,#cacac6 0px 4px,#cdcfd2 4px 8px,#e4d6d0 8px 12px,#b6b8bc 12px 16px,#eeece5 16px 20px,#f0e8de 20px 24px,#d0cfca 24px 28px,#c8c8c3 28px 32px,#e8e6e1 32px 36px,#caccd0 36px 40px,#c0c5c6 40px 44px,#e8e6e1 44px 48px,#bcc8cd 48px 52px,#e8edf0 52px 56px,#c6c5be 56px 60px,#c6c5be 60px 64px,#e6ded7 64px 68px,#bebbbe 68px 72px,#d0d6e1 72px 76px,#c6c5c0 76px 80px,#f0e8de 80px 84px,#d7dce4 84px 88px,#e6ded7 88px 92px,#c8c8c3 92px 96px,#c6c5c0 96px 100px)"></div>
<div class="ab" style="left:120px;top:56px;width:100px;height:4px;background:linear-gradient(90deg,#a0a09b 0px 4px,#b9c3d7 4px 8px,#ded8d2 8px 12px,#8791a0 12px 16px,#e8e8e8 16px 20px,#e1d7d2 20px 24px,#beaaaa 24px 28px,#8c969b 28px 32px,#beaaaa 32px 36px,#8791a0 36px 40px,#8791a0 40px 44px,#dce1e1 44px 48px,#969b91 48px 52px,#a5b4c8 52px 56px,#aaaaa5 56px 60px,#dce1e1 60px 64px,#dce6f0 64px 68px,#a0a09b 68px 72px,#8c969b 72px 76px,#969191 76px 80px,#a0a5af 80px 84px,#e1d7d2 84px 88px,#b9c3d7 88px 92px,#969191 92px 96px,#9b9b96 96px 100px)"></div>
<div class="ab" style="left:120px;top:60px;width:100px;height:4px;background:linear-gradient(90deg,#beaaaa 0px 4px,#b9c6e1 4px 8px,#8c969b 8px 12px,#96968c 12px 16px,#e8eaeb 16px 20px,#a0a5af 20px 24px,#b9c6e1 24px 28px,#ebdccd 28px 32px,#ded8d2 32px 36px,#e1d7d2 36px 40px,#8c969b 40px 44px,#969191 44px 48px,#b9c6e1 48px 52px,#cdc3af 52px 56px,#9b9b96 56px 60px,#b9c3d7 60px 64px,#96918c 64px 68px,#aaafaf 68px 72px,#b9c6e1 72px 76px,#969b91 76px 80px,#ebdccd 80px 84px,#c8b9a0 84px 88px,#8791a0 88px 92px,#96968c 92px 96px,#96968c 96px 100px)"></div>
<svg class="ab" style="left:10px;top:167px" width="8" height="12"><path d="M2 2 L7 6 L2 10 Z" fill="#000"/></svg>
<div class="ab" style="left:1379px;top:119px;width:17px;height:544px;background:linear-gradient(90deg,#e6e6e6,#f0f0f0 30%,#f0f0f0)"></div>
<svg class="ab" style="left:1379px;top:119px" width="17" height="544"><path d="M5.5 10.5 L9 6.5 L12.5 10.5 Z" fill="#222"/><path d="M5.5 534 L9 538 L12.5 534 Z" fill="#222"/></svg>
<div class="ab" style="left:1380px;top:137px;width:15px;height:130px;background:linear-gradient(90deg,#f3f3f3,#e8e8e8 45%,#d6d6d6 70%,#c8c8cc);border:1px solid #9a9a9a;border-radius:2px"></div>
<div class="ab" style="left:1384px;top:197px;width:8px;height:1px;background:#444"></div>
<div class="ab" style="left:1384px;top:200px;width:8px;height:1px;background:#444"></div>
<div class="ab" style="left:1384px;top:203px;width:8px;height:1px;background:#444"></div>
<div class="ab" style="left:7px;top:680px;width:70px;height:24px;background:linear-gradient(#f2f2f2,#ebebeb 45%,#dddddd 46%,#cfcfcf);border:1px solid #707070;border-radius:3px;box-shadow:inset 0 0 0 1px rgba(255,255,255,.55)"></div>
<div class="t" style="left:49px;top:686px;">Print</div>
<svg class="ab" style="left:10px;top:685px" width="17" height="15" shape-rendering="crispEdges"><path d="M5 0h1v1h-1zM6 0h1v1h-1zM7 0h1v1h-1zM8 0h1v1h-1zM9 0h1v1h-1zM10 0h1v1h-1zM11 0h1v1h-1zM12 0h1v1h-1zM13 0h1v1h-1zM4 1h1v1h-1zM13 1h1v1h-1zM4 2h1v1h-1zM6 2h1v1h-1zM7 2h1v1h-1zM8 2h1v1h-1zM9 2h1v1h-1zM10 2h1v1h-1zM13 2h1v1h-1zM3 3h1v1h-1zM12 3h1v1h-1zM3 4h1v1h-1zM5 4h1v1h-1zM6 4h1v1h-1zM7 4h1v1h-1zM8 4h1v1h-1zM9 4h1v1h-1zM12 4h1v1h-1zM2 5h1v1h-1zM11 5h1v1h-1zM1 6h1v1h-1zM2 6h1v1h-1zM3 6h1v1h-1zM4 6h1v1h-1zM5 6h1v1h-1zM6 6h1v1h-1zM7 6h1v1h-1zM8 6h1v1h-1zM9 6h1v1h-1zM10 6h1v1h-1zM11 6h1v1h-1zM12 6h1v1h-1zM0 7h1v1h-1zM12 7h1v1h-1zM14 7h1v1h-1zM0 8h1v1h-1zM1 8h1v1h-1zM2 8h1v1h-1zM3 8h1v1h-1zM4 8h1v1h-1zM5 8h1v1h-1zM6 8h1v1h-1zM7 8h1v1h-1zM8 8h1v1h-1zM9 8h1v1h-1zM10 8h1v1h-1zM11 8h1v1h-1zM12 8h1v1h-1zM14 8h1v1h-1zM0 9h1v1h-1zM12 9h1v1h-1zM14 9h1v1h-1zM0 10h1v1h-1zM12 10h1v1h-1zM14 10h1v1h-1zM0 11h1v1h-1zM1 11h1v1h-1zM2 11h1v1h-1zM3 11h1v1h-1zM4 11h1v1h-1zM5 11h1v1h-1zM6 11h1v1h-1zM7 11h1v1h-1zM8 11h1v1h-1zM9 11h1v1h-1zM10 11h1v1h-1zM11 11h1v1h-1zM12 11h1v1h-1zM14 11h1v1h-1zM1 12h1v1h-1zM12 12h1v1h-1zM2 13h1v1h-1zM3 13h1v1h-1zM4 13h1v1h-1zM5 13h1v1h-1zM6 13h1v1h-1zM7 13h1v1h-1zM8 13h1v1h-1zM9 13h1v1h-1zM10 13h1v1h-1zM11 13h1v1h-1zM12 13h1v1h-1z" fill="#000"/><path d="M5 1h1v1h-1zM6 1h1v1h-1zM7 1h1v1h-1zM8 1h1v1h-1zM9 1h1v1h-1zM10 1h1v1h-1zM11 1h1v1h-1zM12 1h1v1h-1zM5 2h1v1h-1zM11 2h1v1h-1zM12 2h1v1h-1zM4 3h1v1h-1zM5 3h1v1h-1zM6 3h1v1h-1zM7 3h1v1h-1zM8 3h1v1h-1zM9 3h1v1h-1zM10 3h1v1h-1zM11 3h1v1h-1zM4 4h1v1h-1zM10 4h1v1h-1zM11 4h1v1h-1zM3 5h1v1h-1zM4 5h1v1h-1zM5 5h1v1h-1zM6 5h1v1h-1zM7 5h1v1h-1zM8 5h1v1h-1zM9 5h1v1h-1zM10 5h1v1h-1z" fill="#fffbd0"/><path d="M13 6h1v1h-1zM13 7h1v1h-1zM13 8h1v1h-1zM13 9h1v1h-1zM13 10h1v1h-1zM13 11h1v1h-1zM13 12h1v1h-1z" fill="#9a9a9a"/><path d="M1 7h1v1h-1zM2 7h1v1h-1zM3 7h1v1h-1zM4 7h1v1h-1zM5 7h1v1h-1zM6 7h1v1h-1zM7 7h1v1h-1zM8 7h1v1h-1zM9 7h1v1h-1zM10 7h1v1h-1zM11 7h1v1h-1zM1 9h1v1h-1zM2 9h1v1h-1zM11 9h1v1h-1zM1 10h1v1h-1zM11 10h1v1h-1zM2 12h1v1h-1zM3 12h1v1h-1zM4 12h1v1h-1zM5 12h1v1h-1zM6 12h1v1h-1zM7 12h1v1h-1zM8 12h1v1h-1zM9 12h1v1h-1zM10 12h1v1h-1zM11 12h1v1h-1z" fill="#fff"/><path d="M3 9h1v1h-1zM4 9h1v1h-1zM5 9h1v1h-1zM6 9h1v1h-1zM10 9h1v1h-1zM2 10h1v1h-1zM3 10h1v1h-1zM4 10h1v1h-1zM5 10h1v1h-1zM6 10h1v1h-1zM10 10h1v1h-1z" fill="#d4d4d4"/><path d="M7 9h1v1h-1zM8 9h1v1h-1zM9 9h1v1h-1z" fill="#00c800"/><path d="M7 10h1v1h-1zM8 10h1v1h-1zM9 10h1v1h-1z" fill="#e00000"/></svg>
<div class="ab" style="left:1309px;top:680px;width:86px;height:24px;background:linear-gradient(#f2f2f2,#ebebeb 45%,#dddddd 46%,#cfcfcf);border:1px solid #707070;border-radius:3px;box-shadow:inset 0 0 0 1px rgba(255,255,255,.55)"></div>
<div class="t" style="left:1339px;top:686px;">Close</div>
<div class="ab" style="left:0px;top:711px;width:1401px;height:1px;background:#e2e2e2"></div>
<div class="ab" style="left:0px;top:712px;width:1401px;height:1px;background:#ffffff"></div>
<div class="ab" style="left:0px;top:713px;width:1401px;height:3px;background:#f0f0f0"></div>
<div class="ab" style="left:102px;top:714px;width:1px;height:2px;background:#808080"></div>
<div class="ab" style="left:304px;top:714px;width:1px;height:2px;background:#808080"></div>
<div class="ab" style="left:511px;top:714px;width:1px;height:2px;background:#808080"></div>
<div class="ab" style="left:715px;top:714px;width:1px;height:2px;background:#808080"></div>
<div class="ab" style="left:876px;top:714px;width:1px;height:2px;background:#808080"></div>
<div class="ab" style="left:1069px;top:714px;width:1px;height:2px;background:#808080"></div>
<div class="ab" style="left:1270px;top:714px;width:1px;height:2px;background:#808080"></div>
</body></html>
